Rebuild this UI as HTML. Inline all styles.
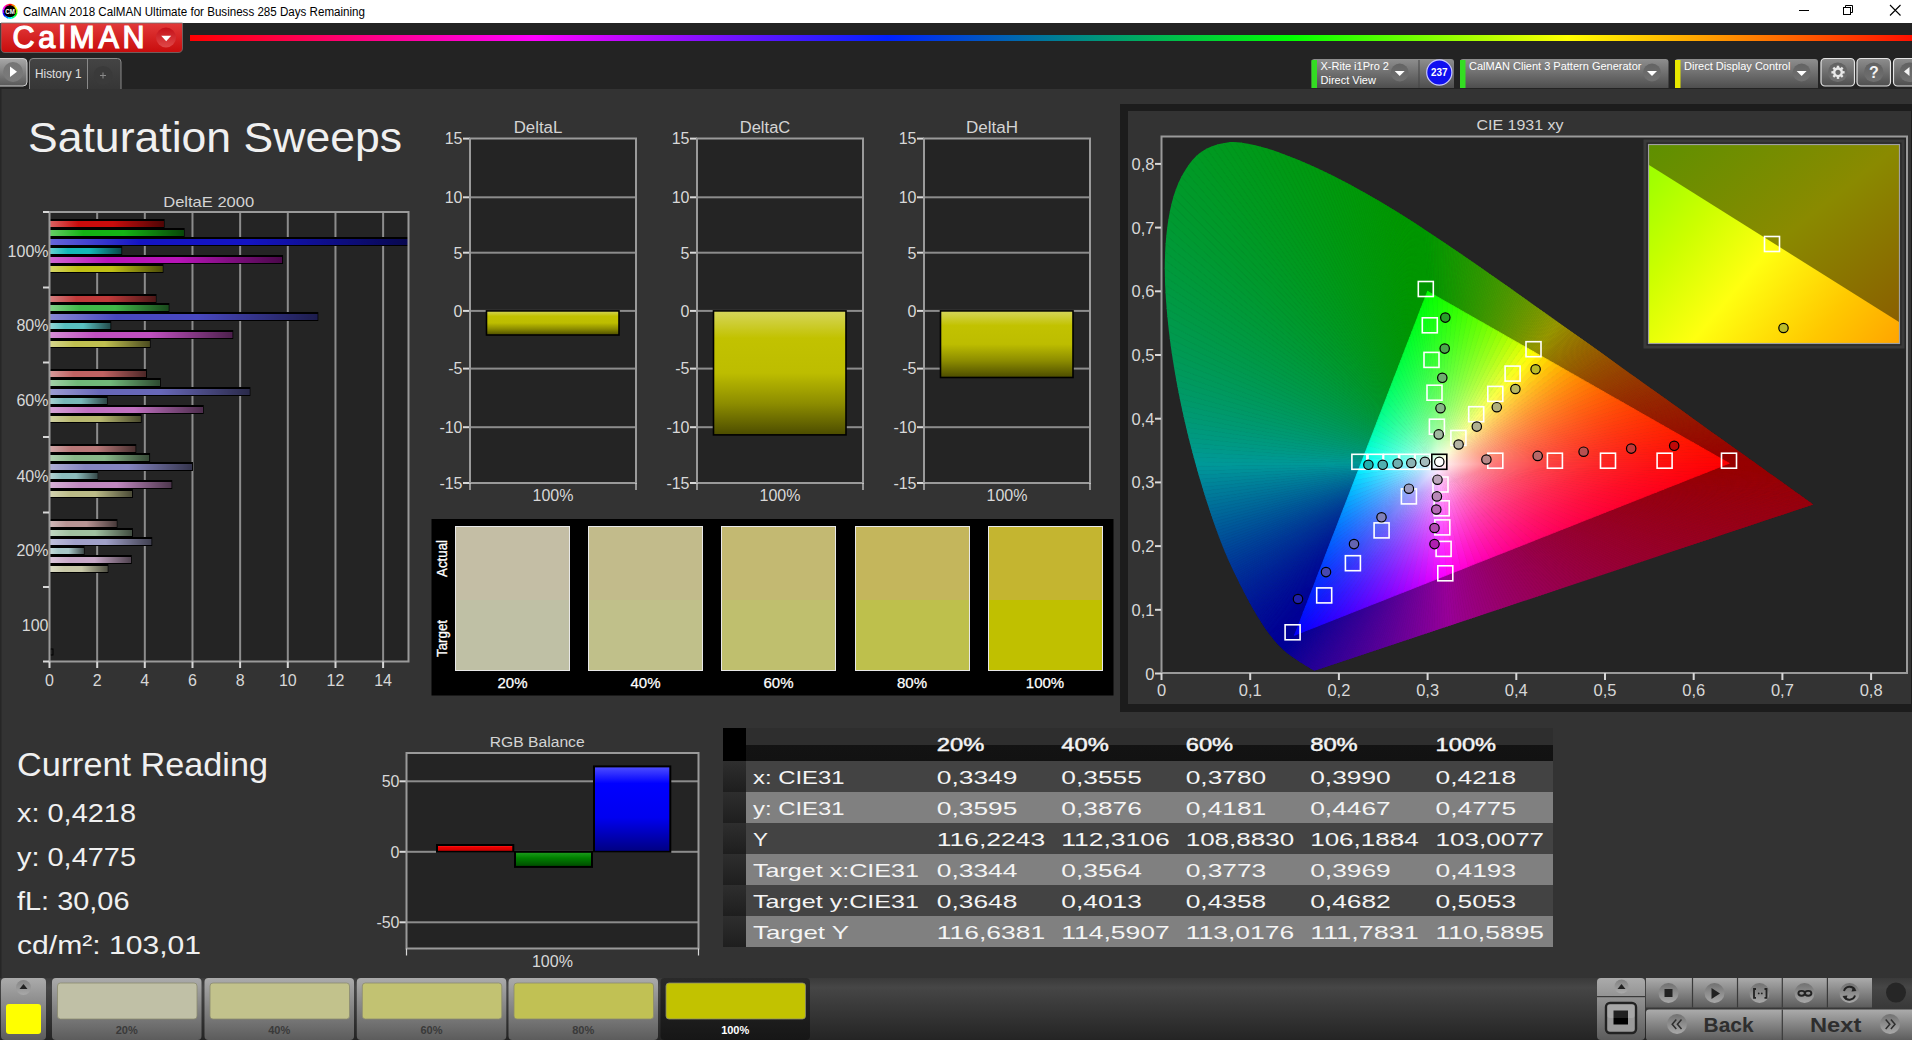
<!DOCTYPE html>
<html><head><meta charset="utf-8"><title>CalMAN</title>
<style>html,body{margin:0;padding:0;background:#333;overflow:hidden;width:1912px;height:1040px}
svg{display:block;font-family:"Liberation Sans",sans-serif}</style></head>
<body><svg width="1912" height="1040" viewBox="0 0 1912 1040">
<rect x="0" y="0" width="1912" height="23" fill="#ffffff"/>
<defs><linearGradient id="rb" x1="0" y1="0" x2="1" y2="0">
<stop offset="0" stop-color="#ff0000"/><stop offset="0.2" stop-color="#ff00ff"/><stop offset="0.405" stop-color="#0020ff"/>
<stop offset="0.64" stop-color="#00ff00"/><stop offset="0.80" stop-color="#ffff00"/><stop offset="1" stop-color="#ff1000"/></linearGradient>
<linearGradient id="calbtn" x1="0" y1="0" x2="0" y2="1"><stop offset="0" stop-color="#e23a3a"/><stop offset="1" stop-color="#c80c0c"/></linearGradient>
<linearGradient id="calcirc" x1="0" y1="0" x2="0" y2="1"><stop offset="0" stop-color="#c41018"/><stop offset="1" stop-color="#e04848"/></linearGradient>
<linearGradient id="btngray" x1="0" y1="0" x2="0" y2="1"><stop offset="0" stop-color="#a8a8a8"/><stop offset="1" stop-color="#585858"/></linearGradient>
<linearGradient id="circgray" x1="0" y1="0" x2="0" y2="1"><stop offset="0" stop-color="#5a5a5a"/><stop offset="1" stop-color="#8a8a8a"/></linearGradient>
<linearGradient id="tabg" x1="0" y1="0" x2="0" y2="1"><stop offset="0" stop-color="#444"/><stop offset="1" stop-color="#363636"/></linearGradient>
<linearGradient id="devg" x1="0" y1="0" x2="0" y2="1"><stop offset="0" stop-color="#8e8e8e"/><stop offset="1" stop-color="#4e4e4e"/></linearGradient>
<linearGradient id="devcirc" x1="0" y1="0" x2="0" y2="1"><stop offset="0" stop-color="#555"/><stop offset="1" stop-color="#7a7a7a"/></linearGradient>
<linearGradient id="iconring" x1="0" y1="0" x2="1" y2="1"><stop offset="0" stop-color="#00c000"/><stop offset="0.5" stop-color="#ff00ff"/><stop offset="1" stop-color="#00a0ff"/></linearGradient>
</defs>
<path d="M10 11.3 L8.03 3.96 A7.6 7.6 0 0 1 12.09 3.99 Z" fill="#ff0000"/><path d="M10 11.3 L11.97 3.96 A7.6 7.6 0 0 1 15.47 6.02 Z" fill="#ff8000"/><path d="M10 11.3 L15.37 5.93 A7.6 7.6 0 0 1 17.37 9.46 Z" fill="#ffff00"/><path d="M10 11.3 L17.34 9.33 A7.6 7.6 0 0 1 17.31 13.39 Z" fill="#80ff00"/><path d="M10 11.3 L17.34 13.27 A7.6 7.6 0 0 1 15.28 16.77 Z" fill="#00ff00"/><path d="M10 11.3 L15.37 16.67 A7.6 7.6 0 0 1 11.84 18.67 Z" fill="#00ff80"/><path d="M10 11.3 L11.97 18.64 A7.6 7.6 0 0 1 7.91 18.61 Z" fill="#00ffff"/><path d="M10 11.3 L8.03 18.64 A7.6 7.6 0 0 1 4.53 16.58 Z" fill="#0080ff"/><path d="M10 11.3 L4.63 16.67 A7.6 7.6 0 0 1 2.63 13.14 Z" fill="#0000ff"/><path d="M10 11.3 L2.66 13.27 A7.6 7.6 0 0 1 2.69 9.21 Z" fill="#8000ff"/><path d="M10 11.3 L2.66 9.33 A7.6 7.6 0 0 1 4.72 5.83 Z" fill="#ff00ff"/><path d="M10 11.3 L4.63 5.93 A7.6 7.6 0 0 1 8.16 3.93 Z" fill="#ff0080"/><circle cx="10" cy="11.3" r="6" fill="#000"/>
<text x="10" y="13.8" font-size="7" font-weight="bold" fill="#fff" text-anchor="middle" textLength="9.5" lengthAdjust="spacingAndGlyphs">CM</text>
<text x="23" y="15.6" font-size="12" fill="#000" textLength="342" lengthAdjust="spacingAndGlyphs">CalMAN 2018 CalMAN Ultimate for Business 285 Days Remaining</text>
<rect x="1799" y="10" width="10" height="1" fill="#000"/>
<rect x="1843.5" y="7.5" width="7" height="7" fill="none" stroke="#000" stroke-width="1"/>
<path d="M1845.5 7.5 V5.5 H1852.5 V12.5 H1850.5" fill="none" stroke="#000" stroke-width="1"/>
<path d="M1890 5 L1900.5 15.5 M1900.5 5 L1890 15.5" stroke="#000" stroke-width="1.1"/>
<rect x="0" y="23" width="1912" height="66" fill="#232323"/>
<path d="M1 23 H182.5 V48 Q182.5 52.5 178 52.5 H5 Q1 52.5 1 48 Z" fill="url(#calbtn)" stroke="#707070" stroke-width="0.8"/>
<text x="12.5" y="48" font-size="30.5" fill="#fff" stroke="#fff" stroke-width="1.2" textLength="132" lengthAdjust="spacing">CalMAN</text>
<ellipse cx="166" cy="37.5" rx="10" ry="10" fill="url(#calcirc)"/>
<path d="M161.2 35.8 H171.2 L166.2 41.2 Z" fill="#fff"/>
<rect x="190" y="35" width="1722" height="6" fill="url(#rb)"/>
<rect x="-4" y="58.5" width="31" height="27.5" rx="4" fill="url(#btngray)" stroke="#d0d0d0" stroke-width="1"/>
<circle cx="13" cy="72" r="10" fill="url(#circgray)" opacity="0.6"/>
<path d="M10 66.5 L17 71.8 L10 77 Z" fill="#fff"/>
<path d="M29.5 89 V62 Q29.5 58.5 33 58.5 H117.5 Q121 58.5 121 62 V89" fill="url(#tabg)" stroke="#8a8a8a" stroke-width="1"/>
<rect x="87" y="59" width="1" height="30" fill="#8a8a8a"/>
<text x="35" y="78" font-size="12" fill="#e0e0e0" textLength="46.6" lengthAdjust="spacingAndGlyphs">History 1</text>
<circle cx="103" cy="75.5" r="9.5" fill="#3a3a3a"/>
<path d="M100 75.5 H106 M103 72.5 V78.5" stroke="#8a8a8a" stroke-width="1"/>
<path d="M1311.5 88 V62 Q1311.5 59 1314.5 59 H1451 Q1454 59 1454 62 V88 Z" fill="url(#devg)"/><rect x="1311.5" y="60" width="5.5" height="28" fill="#33dd22"/><text x="1320.5" y="70" font-size="11" fill="#fff">X-Rite i1Pro 2</text><text x="1320.5" y="84" font-size="11" fill="#fff">Direct View</text><circle cx="1399.7" cy="72.5" r="9" fill="url(#devcirc)" opacity="0.7"/><path d="M1394.7 71 H1404.7 L1399.7 76 Z" fill="#fff"/>
<rect x="1418.5" y="60" width="1" height="28" fill="#444"/>
<circle cx="1439.3" cy="72.5" r="12.6" fill="#1010f0" stroke="#c8c8ff" stroke-width="1.2"/>
<text x="1439.3" y="76" font-size="10" font-weight="bold" fill="#fff" text-anchor="middle" textLength="16.5" lengthAdjust="spacingAndGlyphs">237</text>
<path d="M1460 88 V62 Q1460 59 1463 59 H1665.5 Q1668.5 59 1668.5 62 V88 Z" fill="url(#devg)"/><rect x="1460" y="60" width="5.5" height="28" fill="#33dd22"/><text x="1469" y="70" font-size="11" fill="#fff">CalMAN Client 3 Pattern Generator</text><circle cx="1652" cy="72.5" r="9" fill="url(#devcirc)" opacity="0.7"/><path d="M1647 71 H1657 L1652 76 Z" fill="#fff"/>
<path d="M1675 88 V62 Q1675 59 1678 59 H1815 Q1818 59 1818 62 V88 Z" fill="url(#devg)"/><rect x="1675" y="60" width="5.5" height="28" fill="#e8e800"/><text x="1684" y="70" font-size="11" fill="#fff">Direct Display Control</text><circle cx="1801.6" cy="72.5" r="9" fill="url(#devcirc)" opacity="0.7"/><path d="M1796.6 71 H1806.6 L1801.6 76 Z" fill="#fff"/>
<rect x="1821" y="58.5" width="33.5" height="27.5" rx="4" fill="url(#devg)" stroke="#e4e4e4" stroke-width="1.2"/>
<circle cx="1837.75" cy="72.3" r="9.8" fill="url(#devcirc)" opacity="0.75"/>
<rect x="1857" y="58.5" width="33.5" height="27.5" rx="4" fill="url(#devg)" stroke="#e4e4e4" stroke-width="1.2"/>
<circle cx="1873.75" cy="72.3" r="9.8" fill="url(#devcirc)" opacity="0.75"/>
<rect x="1893.5" y="58.5" width="31.5" height="27.5" rx="4" fill="url(#devg)" stroke="#e4e4e4" stroke-width="1.2"/>
<circle cx="1909.25" cy="72.3" r="9.8" fill="url(#devcirc)" opacity="0.75"/>
<g transform="translate(1838,72.3)"><circle r="3.8" fill="none" stroke="#e8e8e8" stroke-width="2.4"/><rect x="-1.2" y="-6.6" width="2.4" height="2.4" fill="#e8e8e8" transform="rotate(0)"/><rect x="-1.2" y="-6.6" width="2.4" height="2.4" fill="#e8e8e8" transform="rotate(45)"/><rect x="-1.2" y="-6.6" width="2.4" height="2.4" fill="#e8e8e8" transform="rotate(90)"/><rect x="-1.2" y="-6.6" width="2.4" height="2.4" fill="#e8e8e8" transform="rotate(135)"/><rect x="-1.2" y="-6.6" width="2.4" height="2.4" fill="#e8e8e8" transform="rotate(180)"/><rect x="-1.2" y="-6.6" width="2.4" height="2.4" fill="#e8e8e8" transform="rotate(225)"/><rect x="-1.2" y="-6.6" width="2.4" height="2.4" fill="#e8e8e8" transform="rotate(270)"/><rect x="-1.2" y="-6.6" width="2.4" height="2.4" fill="#e8e8e8" transform="rotate(315)"/></g>
<text x="1874" y="78.3" font-size="16" font-weight="bold" fill="#f4f4f4" text-anchor="middle">?</text>
<path d="M1909.5 67 L1904 71.5 L1909.5 76 Z" fill="#f4f4f4"/>
<rect x="0" y="89" width="1912" height="889" fill="#333333"/>
<rect x="0" y="89" width="1.5" height="889" fill="#262626"/>
<text x="28" y="151.8" font-size="43" fill="#f0f0f0" textLength="374" lengthAdjust="spacingAndGlyphs">Saturation Sweeps</text>
<text x="208.7" y="206.8" font-size="15" fill="#d4d4d4" text-anchor="middle" textLength="91" lengthAdjust="spacingAndGlyphs">DeltaE 2000</text>
<rect x="49.5" y="212" width="359.0" height="449.5" fill="#242424"/>
<rect x="96.16" y="212" width="2" height="449.5" fill="#8c8c8c"/>
<rect x="143.82" y="212" width="2" height="449.5" fill="#8c8c8c"/>
<rect x="191.48" y="212" width="2" height="449.5" fill="#8c8c8c"/>
<rect x="239.14" y="212" width="2" height="449.5" fill="#8c8c8c"/>
<rect x="286.79999999999995" y="212" width="2" height="449.5" fill="#8c8c8c"/>
<rect x="334.46" y="212" width="2" height="449.5" fill="#8c8c8c"/>
<rect x="382.12" y="212" width="2" height="449.5" fill="#8c8c8c"/>
<rect x="50.0" y="219" width="114.59890000000001" height="9" fill="#000"/>
<rect x="50.0" y="221" width="113.59890000000001" height="6" fill="#c80c0c"/>
<rect x="50.0" y="221" width="113.59890000000001" height="6" fill="url(#de00)"/>
<rect x="50.0" y="228" width="134.6161" height="9" fill="#000"/>
<rect x="50.0" y="230" width="133.6161" height="6" fill="#14b414"/>
<rect x="50.0" y="230" width="133.6161" height="6" fill="url(#de01)"/>
<rect x="50.0" y="237" width="359.0" height="9" fill="#000"/>
<rect x="50.0" y="239" width="358.0" height="6" fill="#1414c4"/>
<rect x="50.0" y="239" width="358.0" height="6" fill="url(#de02)"/>
<rect x="50.0" y="246" width="72.18149999999999" height="9" fill="#000"/>
<rect x="50.0" y="248" width="71.18149999999999" height="6" fill="#14b8b8"/>
<rect x="50.0" y="248" width="71.18149999999999" height="6" fill="url(#de03)"/>
<rect x="50.0" y="255" width="233.034" height="9" fill="#000"/>
<rect x="50.0" y="257" width="232.034" height="6" fill="#b814b8"/>
<rect x="50.0" y="257" width="232.034" height="6" fill="url(#de04)"/>
<rect x="50.0" y="264" width="113.4074" height="9" fill="#000"/>
<rect x="50.0" y="266" width="112.4074" height="6" fill="#c0c014"/>
<rect x="50.0" y="266" width="112.4074" height="6" fill="url(#de05)"/>
<rect x="50.0" y="294" width="106.4967" height="9" fill="#000"/>
<rect x="50.0" y="296" width="105.4967" height="6" fill="#c03a3a"/>
<rect x="50.0" y="296" width="105.4967" height="6" fill="url(#de10)"/>
<rect x="50.0" y="303" width="119.36489999999998" height="9" fill="#000"/>
<rect x="50.0" y="305" width="118.36489999999998" height="6" fill="#40b848"/>
<rect x="50.0" y="305" width="118.36489999999998" height="6" fill="url(#de11)"/>
<rect x="50.0" y="312" width="268.3024" height="9" fill="#000"/>
<rect x="50.0" y="314" width="267.3024" height="6" fill="#4848c0"/>
<rect x="50.0" y="314" width="267.3024" height="6" fill="url(#de12)"/>
<rect x="50.0" y="321" width="61.21969999999999" height="9" fill="#000"/>
<rect x="50.0" y="323" width="60.21969999999999" height="6" fill="#58c0c0"/>
<rect x="50.0" y="323" width="60.21969999999999" height="6" fill="url(#de13)"/>
<rect x="50.0" y="330" width="183.2293" height="9" fill="#000"/>
<rect x="50.0" y="332" width="182.2293" height="6" fill="#c050c0"/>
<rect x="50.0" y="332" width="182.2293" height="6" fill="url(#de14)"/>
<rect x="50.0" y="339" width="100.5392" height="9" fill="#000"/>
<rect x="50.0" y="341" width="99.5392" height="6" fill="#c0c050"/>
<rect x="50.0" y="341" width="99.5392" height="6" fill="url(#de15)"/>
<rect x="50.0" y="369" width="96.9647" height="9" fill="#000"/>
<rect x="50.0" y="371" width="95.9647" height="6" fill="#c06262"/>
<rect x="50.0" y="371" width="95.9647" height="6" fill="url(#de20)"/>
<rect x="50.0" y="378" width="110.78609999999998" height="9" fill="#000"/>
<rect x="50.0" y="380" width="109.78609999999998" height="6" fill="#70b878"/>
<rect x="50.0" y="380" width="109.78609999999998" height="6" fill="url(#de21)"/>
<rect x="50.0" y="387" width="200.38689999999997" height="9" fill="#000"/>
<rect x="50.0" y="389" width="199.38689999999997" height="6" fill="#6868b8"/>
<rect x="50.0" y="389" width="199.38689999999997" height="6" fill="url(#de22)"/>
<rect x="50.0" y="396" width="57.64519999999999" height="9" fill="#000"/>
<rect x="50.0" y="398" width="56.64519999999999" height="6" fill="#78b8b8"/>
<rect x="50.0" y="398" width="56.64519999999999" height="6" fill="url(#de23)"/>
<rect x="50.0" y="405" width="153.68009999999998" height="9" fill="#000"/>
<rect x="50.0" y="407" width="152.68009999999998" height="6" fill="#c070c0"/>
<rect x="50.0" y="407" width="152.68009999999998" height="6" fill="url(#de24)"/>
<rect x="50.0" y="414" width="91.48379999999997" height="9" fill="#000"/>
<rect x="50.0" y="416" width="90.48379999999997" height="6" fill="#b8b870"/>
<rect x="50.0" y="416" width="90.48379999999997" height="6" fill="url(#de25)"/>
<rect x="50.0" y="444" width="86.24119999999999" height="9" fill="#000"/>
<rect x="50.0" y="446" width="85.24119999999999" height="6" fill="#b87878"/>
<rect x="50.0" y="446" width="85.24119999999999" height="6" fill="url(#de30)"/>
<rect x="50.0" y="453" width="100.06259999999997" height="9" fill="#000"/>
<rect x="50.0" y="455" width="99.06259999999997" height="6" fill="#88b888"/>
<rect x="50.0" y="455" width="99.06259999999997" height="6" fill="url(#de31)"/>
<rect x="50.0" y="462" width="142.95659999999998" height="9" fill="#000"/>
<rect x="50.0" y="464" width="141.95659999999998" height="6" fill="#8484c0"/>
<rect x="50.0" y="464" width="141.95659999999998" height="6" fill="url(#de32)"/>
<rect x="50.0" y="471" width="48.35149999999999" height="9" fill="#000"/>
<rect x="50.0" y="473" width="47.35149999999999" height="6" fill="#8cbcbc"/>
<rect x="50.0" y="473" width="47.35149999999999" height="6" fill="url(#de33)"/>
<rect x="50.0" y="480" width="122.2245" height="9" fill="#000"/>
<rect x="50.0" y="482" width="121.2245" height="6" fill="#c088c0"/>
<rect x="50.0" y="482" width="121.2245" height="6" fill="url(#de34)"/>
<rect x="50.0" y="489" width="82.905" height="9" fill="#000"/>
<rect x="50.0" y="491" width="81.905" height="6" fill="#bcbc88"/>
<rect x="50.0" y="491" width="81.905" height="6" fill="url(#de35)"/>
<rect x="50.0" y="519" width="67.4155" height="9" fill="#000"/>
<rect x="50.0" y="521" width="66.4155" height="6" fill="#b89494"/>
<rect x="50.0" y="521" width="66.4155" height="6" fill="url(#de40)"/>
<rect x="50.0" y="528" width="82.905" height="9" fill="#000"/>
<rect x="50.0" y="530" width="81.905" height="6" fill="#a0c0a0"/>
<rect x="50.0" y="530" width="81.905" height="6" fill="url(#de41)"/>
<rect x="50.0" y="537" width="102.20729999999998" height="9" fill="#000"/>
<rect x="50.0" y="539" width="101.20729999999998" height="6" fill="#a0a0c8"/>
<rect x="50.0" y="539" width="101.20729999999998" height="6" fill="url(#de42)"/>
<rect x="50.0" y="546" width="34.530100000000004" height="9" fill="#000"/>
<rect x="50.0" y="548" width="33.530100000000004" height="6" fill="#a8c8c8"/>
<rect x="50.0" y="548" width="33.530100000000004" height="6" fill="url(#de43)"/>
<rect x="50.0" y="555" width="81.71350000000001" height="9" fill="#000"/>
<rect x="50.0" y="557" width="80.71350000000001" height="6" fill="#c8a8c8"/>
<rect x="50.0" y="557" width="80.71350000000001" height="6" fill="url(#de44)"/>
<rect x="50.0" y="564" width="58.3601" height="9" fill="#000"/>
<rect x="50.0" y="566" width="57.3601" height="6" fill="#c8c8a8"/>
<rect x="50.0" y="566" width="57.3601" height="6" fill="url(#de45)"/>
<defs><linearGradient id="de00" x1="0" y1="0" x2="1" y2="0"><stop offset="0" stop-color="#fff" stop-opacity="0.35"/><stop offset="0.25" stop-color="#fff" stop-opacity="0"/><stop offset="0.55" stop-color="#000" stop-opacity="0"/><stop offset="1" stop-color="#000" stop-opacity="0.6"/></linearGradient><linearGradient id="de01" x1="0" y1="0" x2="1" y2="0"><stop offset="0" stop-color="#fff" stop-opacity="0.35"/><stop offset="0.25" stop-color="#fff" stop-opacity="0"/><stop offset="0.55" stop-color="#000" stop-opacity="0"/><stop offset="1" stop-color="#000" stop-opacity="0.6"/></linearGradient><linearGradient id="de02" x1="0" y1="0" x2="1" y2="0"><stop offset="0" stop-color="#fff" stop-opacity="0.35"/><stop offset="0.25" stop-color="#fff" stop-opacity="0"/><stop offset="0.55" stop-color="#000" stop-opacity="0"/><stop offset="1" stop-color="#000" stop-opacity="0.6"/></linearGradient><linearGradient id="de03" x1="0" y1="0" x2="1" y2="0"><stop offset="0" stop-color="#fff" stop-opacity="0.35"/><stop offset="0.25" stop-color="#fff" stop-opacity="0"/><stop offset="0.55" stop-color="#000" stop-opacity="0"/><stop offset="1" stop-color="#000" stop-opacity="0.6"/></linearGradient><linearGradient id="de04" x1="0" y1="0" x2="1" y2="0"><stop offset="0" stop-color="#fff" stop-opacity="0.35"/><stop offset="0.25" stop-color="#fff" stop-opacity="0"/><stop offset="0.55" stop-color="#000" stop-opacity="0"/><stop offset="1" stop-color="#000" stop-opacity="0.6"/></linearGradient><linearGradient id="de05" x1="0" y1="0" x2="1" y2="0"><stop offset="0" stop-color="#fff" stop-opacity="0.35"/><stop offset="0.25" stop-color="#fff" stop-opacity="0"/><stop offset="0.55" stop-color="#000" stop-opacity="0"/><stop offset="1" stop-color="#000" stop-opacity="0.6"/></linearGradient><linearGradient id="de10" x1="0" y1="0" x2="1" y2="0"><stop offset="0" stop-color="#fff" stop-opacity="0.35"/><stop offset="0.25" stop-color="#fff" stop-opacity="0"/><stop offset="0.55" stop-color="#000" stop-opacity="0"/><stop offset="1" stop-color="#000" stop-opacity="0.6"/></linearGradient><linearGradient id="de11" x1="0" y1="0" x2="1" y2="0"><stop offset="0" stop-color="#fff" stop-opacity="0.35"/><stop offset="0.25" stop-color="#fff" stop-opacity="0"/><stop offset="0.55" stop-color="#000" stop-opacity="0"/><stop offset="1" stop-color="#000" stop-opacity="0.6"/></linearGradient><linearGradient id="de12" x1="0" y1="0" x2="1" y2="0"><stop offset="0" stop-color="#fff" stop-opacity="0.35"/><stop offset="0.25" stop-color="#fff" stop-opacity="0"/><stop offset="0.55" stop-color="#000" stop-opacity="0"/><stop offset="1" stop-color="#000" stop-opacity="0.6"/></linearGradient><linearGradient id="de13" x1="0" y1="0" x2="1" y2="0"><stop offset="0" stop-color="#fff" stop-opacity="0.35"/><stop offset="0.25" stop-color="#fff" stop-opacity="0"/><stop offset="0.55" stop-color="#000" stop-opacity="0"/><stop offset="1" stop-color="#000" stop-opacity="0.6"/></linearGradient><linearGradient id="de14" x1="0" y1="0" x2="1" y2="0"><stop offset="0" stop-color="#fff" stop-opacity="0.35"/><stop offset="0.25" stop-color="#fff" stop-opacity="0"/><stop offset="0.55" stop-color="#000" stop-opacity="0"/><stop offset="1" stop-color="#000" stop-opacity="0.6"/></linearGradient><linearGradient id="de15" x1="0" y1="0" x2="1" y2="0"><stop offset="0" stop-color="#fff" stop-opacity="0.35"/><stop offset="0.25" stop-color="#fff" stop-opacity="0"/><stop offset="0.55" stop-color="#000" stop-opacity="0"/><stop offset="1" stop-color="#000" stop-opacity="0.6"/></linearGradient><linearGradient id="de20" x1="0" y1="0" x2="1" y2="0"><stop offset="0" stop-color="#fff" stop-opacity="0.35"/><stop offset="0.25" stop-color="#fff" stop-opacity="0"/><stop offset="0.55" stop-color="#000" stop-opacity="0"/><stop offset="1" stop-color="#000" stop-opacity="0.6"/></linearGradient><linearGradient id="de21" x1="0" y1="0" x2="1" y2="0"><stop offset="0" stop-color="#fff" stop-opacity="0.35"/><stop offset="0.25" stop-color="#fff" stop-opacity="0"/><stop offset="0.55" stop-color="#000" stop-opacity="0"/><stop offset="1" stop-color="#000" stop-opacity="0.6"/></linearGradient><linearGradient id="de22" x1="0" y1="0" x2="1" y2="0"><stop offset="0" stop-color="#fff" stop-opacity="0.35"/><stop offset="0.25" stop-color="#fff" stop-opacity="0"/><stop offset="0.55" stop-color="#000" stop-opacity="0"/><stop offset="1" stop-color="#000" stop-opacity="0.6"/></linearGradient><linearGradient id="de23" x1="0" y1="0" x2="1" y2="0"><stop offset="0" stop-color="#fff" stop-opacity="0.35"/><stop offset="0.25" stop-color="#fff" stop-opacity="0"/><stop offset="0.55" stop-color="#000" stop-opacity="0"/><stop offset="1" stop-color="#000" stop-opacity="0.6"/></linearGradient><linearGradient id="de24" x1="0" y1="0" x2="1" y2="0"><stop offset="0" stop-color="#fff" stop-opacity="0.35"/><stop offset="0.25" stop-color="#fff" stop-opacity="0"/><stop offset="0.55" stop-color="#000" stop-opacity="0"/><stop offset="1" stop-color="#000" stop-opacity="0.6"/></linearGradient><linearGradient id="de25" x1="0" y1="0" x2="1" y2="0"><stop offset="0" stop-color="#fff" stop-opacity="0.35"/><stop offset="0.25" stop-color="#fff" stop-opacity="0"/><stop offset="0.55" stop-color="#000" stop-opacity="0"/><stop offset="1" stop-color="#000" stop-opacity="0.6"/></linearGradient><linearGradient id="de30" x1="0" y1="0" x2="1" y2="0"><stop offset="0" stop-color="#fff" stop-opacity="0.35"/><stop offset="0.25" stop-color="#fff" stop-opacity="0"/><stop offset="0.55" stop-color="#000" stop-opacity="0"/><stop offset="1" stop-color="#000" stop-opacity="0.6"/></linearGradient><linearGradient id="de31" x1="0" y1="0" x2="1" y2="0"><stop offset="0" stop-color="#fff" stop-opacity="0.35"/><stop offset="0.25" stop-color="#fff" stop-opacity="0"/><stop offset="0.55" stop-color="#000" stop-opacity="0"/><stop offset="1" stop-color="#000" stop-opacity="0.6"/></linearGradient><linearGradient id="de32" x1="0" y1="0" x2="1" y2="0"><stop offset="0" stop-color="#fff" stop-opacity="0.35"/><stop offset="0.25" stop-color="#fff" stop-opacity="0"/><stop offset="0.55" stop-color="#000" stop-opacity="0"/><stop offset="1" stop-color="#000" stop-opacity="0.6"/></linearGradient><linearGradient id="de33" x1="0" y1="0" x2="1" y2="0"><stop offset="0" stop-color="#fff" stop-opacity="0.35"/><stop offset="0.25" stop-color="#fff" stop-opacity="0"/><stop offset="0.55" stop-color="#000" stop-opacity="0"/><stop offset="1" stop-color="#000" stop-opacity="0.6"/></linearGradient><linearGradient id="de34" x1="0" y1="0" x2="1" y2="0"><stop offset="0" stop-color="#fff" stop-opacity="0.35"/><stop offset="0.25" stop-color="#fff" stop-opacity="0"/><stop offset="0.55" stop-color="#000" stop-opacity="0"/><stop offset="1" stop-color="#000" stop-opacity="0.6"/></linearGradient><linearGradient id="de35" x1="0" y1="0" x2="1" y2="0"><stop offset="0" stop-color="#fff" stop-opacity="0.35"/><stop offset="0.25" stop-color="#fff" stop-opacity="0"/><stop offset="0.55" stop-color="#000" stop-opacity="0"/><stop offset="1" stop-color="#000" stop-opacity="0.6"/></linearGradient><linearGradient id="de40" x1="0" y1="0" x2="1" y2="0"><stop offset="0" stop-color="#fff" stop-opacity="0.35"/><stop offset="0.25" stop-color="#fff" stop-opacity="0"/><stop offset="0.55" stop-color="#000" stop-opacity="0"/><stop offset="1" stop-color="#000" stop-opacity="0.6"/></linearGradient><linearGradient id="de41" x1="0" y1="0" x2="1" y2="0"><stop offset="0" stop-color="#fff" stop-opacity="0.35"/><stop offset="0.25" stop-color="#fff" stop-opacity="0"/><stop offset="0.55" stop-color="#000" stop-opacity="0"/><stop offset="1" stop-color="#000" stop-opacity="0.6"/></linearGradient><linearGradient id="de42" x1="0" y1="0" x2="1" y2="0"><stop offset="0" stop-color="#fff" stop-opacity="0.35"/><stop offset="0.25" stop-color="#fff" stop-opacity="0"/><stop offset="0.55" stop-color="#000" stop-opacity="0"/><stop offset="1" stop-color="#000" stop-opacity="0.6"/></linearGradient><linearGradient id="de43" x1="0" y1="0" x2="1" y2="0"><stop offset="0" stop-color="#fff" stop-opacity="0.35"/><stop offset="0.25" stop-color="#fff" stop-opacity="0"/><stop offset="0.55" stop-color="#000" stop-opacity="0"/><stop offset="1" stop-color="#000" stop-opacity="0.6"/></linearGradient><linearGradient id="de44" x1="0" y1="0" x2="1" y2="0"><stop offset="0" stop-color="#fff" stop-opacity="0.35"/><stop offset="0.25" stop-color="#fff" stop-opacity="0"/><stop offset="0.55" stop-color="#000" stop-opacity="0"/><stop offset="1" stop-color="#000" stop-opacity="0.6"/></linearGradient><linearGradient id="de45" x1="0" y1="0" x2="1" y2="0"><stop offset="0" stop-color="#fff" stop-opacity="0.35"/><stop offset="0.25" stop-color="#fff" stop-opacity="0"/><stop offset="0.55" stop-color="#000" stop-opacity="0"/><stop offset="1" stop-color="#000" stop-opacity="0.6"/></linearGradient></defs>
<rect x="50" y="649" width="3" height="6" fill="none" stroke="#000" stroke-width="1"/>
<path d="M49.5 661.5 V212 H408.5 V661.5 Z" fill="none" stroke="#9a9a9a" stroke-width="2"/>
<rect x="43" y="211" width="6" height="2" fill="#d8d8d8"/>
<rect x="43" y="286.5" width="6" height="2" fill="#d8d8d8"/>
<rect x="43" y="361.5" width="6" height="2" fill="#d8d8d8"/>
<rect x="43" y="436" width="6" height="2" fill="#d8d8d8"/>
<rect x="43" y="511.5" width="6" height="2" fill="#d8d8d8"/>
<rect x="43" y="586" width="6" height="2" fill="#d8d8d8"/>
<rect x="43" y="660.5" width="6" height="2" fill="#d8d8d8"/>
<rect x="48.5" y="661.5" width="2" height="6.5" fill="#d8d8d8"/>
<rect x="96.2" y="661.5" width="2" height="6.5" fill="#d8d8d8"/>
<rect x="143.8" y="661.5" width="2" height="6.5" fill="#d8d8d8"/>
<rect x="191.5" y="661.5" width="2" height="6.5" fill="#d8d8d8"/>
<rect x="239.1" y="661.5" width="2" height="6.5" fill="#d8d8d8"/>
<rect x="286.8" y="661.5" width="2" height="6.5" fill="#d8d8d8"/>
<rect x="334.5" y="661.5" width="2" height="6.5" fill="#d8d8d8"/>
<rect x="382.1" y="661.5" width="2" height="6.5" fill="#d8d8d8"/>
<text x="48.5" y="257" font-size="16" fill="#d8d8d8" text-anchor="end">100%</text>
<text x="48.5" y="331" font-size="16" fill="#d8d8d8" text-anchor="end">80%</text>
<text x="48.5" y="406" font-size="16" fill="#d8d8d8" text-anchor="end">60%</text>
<text x="48.5" y="482" font-size="16" fill="#d8d8d8" text-anchor="end">40%</text>
<text x="48.5" y="556" font-size="16" fill="#d8d8d8" text-anchor="end">20%</text>
<text x="48.5" y="631" font-size="16" fill="#d8d8d8" text-anchor="end">100</text>
<text x="49.5" y="686" font-size="16" fill="#d8d8d8" text-anchor="middle">0</text>
<text x="97.16" y="686" font-size="16" fill="#d8d8d8" text-anchor="middle">2</text>
<text x="144.82" y="686" font-size="16" fill="#d8d8d8" text-anchor="middle">4</text>
<text x="192.48" y="686" font-size="16" fill="#d8d8d8" text-anchor="middle">6</text>
<text x="240.14" y="686" font-size="16" fill="#d8d8d8" text-anchor="middle">8</text>
<text x="287.79999999999995" y="686" font-size="16" fill="#d8d8d8" text-anchor="middle">10</text>
<text x="335.46" y="686" font-size="16" fill="#d8d8d8" text-anchor="middle">12</text>
<text x="383.12" y="686" font-size="16" fill="#d8d8d8" text-anchor="middle">14</text>
<defs><linearGradient id="ybar" x1="0" y1="0" x2="0" y2="1">
<stop offset="0" stop-color="#d6d65c"/><stop offset="0.22" stop-color="#c2c200"/><stop offset="0.5" stop-color="#bdbd00"/><stop offset="0.75" stop-color="#8c8c00"/><stop offset="1" stop-color="#4c4c00"/></linearGradient>
<linearGradient id="ybarS" x1="0" y1="0" x2="0" y2="1">
<stop offset="0" stop-color="#d0d040"/><stop offset="0.3" stop-color="#c4c400"/><stop offset="0.6" stop-color="#c0c000"/><stop offset="1" stop-color="#505000"/></linearGradient></defs>
<text x="513.75" y="133" font-size="16" fill="#d4d4d4" textLength="48.5" lengthAdjust="spacingAndGlyphs">DeltaL</text>
<rect x="470" y="138.6" width="166" height="344.4" fill="#242424"/>
<rect x="470" y="426.2" width="166" height="2" fill="#8c8c8c"/>
<rect x="470" y="367.6" width="166" height="2" fill="#8c8c8c"/>
<rect x="470" y="309.9" width="166" height="2" fill="#8c8c8c"/>
<rect x="470" y="251.7" width="166" height="2" fill="#8c8c8c"/>
<rect x="470" y="196.3" width="166" height="2" fill="#8c8c8c"/>
<rect x="463" y="482" width="7" height="2" fill="#d8d8d8"/>
<text x="462.5" y="488.8" font-size="16" fill="#d8d8d8" text-anchor="end">-15</text>
<rect x="463" y="426.2" width="7" height="2" fill="#d8d8d8"/>
<text x="462.5" y="433.0" font-size="16" fill="#d8d8d8" text-anchor="end">-10</text>
<rect x="463" y="367.6" width="7" height="2" fill="#d8d8d8"/>
<text x="462.5" y="374.40000000000003" font-size="16" fill="#d8d8d8" text-anchor="end">-5</text>
<rect x="463" y="309.9" width="7" height="2" fill="#d8d8d8"/>
<text x="462.5" y="316.7" font-size="16" fill="#d8d8d8" text-anchor="end">0</text>
<rect x="463" y="251.7" width="7" height="2" fill="#d8d8d8"/>
<text x="462.5" y="258.5" font-size="16" fill="#d8d8d8" text-anchor="end">5</text>
<rect x="463" y="196.3" width="7" height="2" fill="#d8d8d8"/>
<text x="462.5" y="203.10000000000002" font-size="16" fill="#d8d8d8" text-anchor="end">10</text>
<rect x="463" y="137.6" width="7" height="2" fill="#d8d8d8"/>
<text x="462.5" y="144.4" font-size="16" fill="#d8d8d8" text-anchor="end">15</text>
<rect x="486.5" y="310.9" width="132.5" height="24.108000000000004" fill="url(#ybar)" stroke="#000" stroke-width="1.6"/>
<path d="M470 483 V138.6 H636 V483 Z" fill="none" stroke="#9a9a9a" stroke-width="2"/>
<rect x="469.4" y="483" width="1.2" height="7" fill="#d8d8d8"/>
<rect x="635.4" y="483" width="1.2" height="7" fill="#d8d8d8"/>
<text x="553.0" y="501.3" font-size="16" fill="#d8d8d8" text-anchor="middle">100%</text>
<text x="739.75" y="133" font-size="16" fill="#d4d4d4" textLength="50.5" lengthAdjust="spacingAndGlyphs">DeltaC</text>
<rect x="697" y="138.6" width="166" height="344.4" fill="#242424"/>
<rect x="697" y="426.2" width="166" height="2" fill="#8c8c8c"/>
<rect x="697" y="367.6" width="166" height="2" fill="#8c8c8c"/>
<rect x="697" y="309.9" width="166" height="2" fill="#8c8c8c"/>
<rect x="697" y="251.7" width="166" height="2" fill="#8c8c8c"/>
<rect x="697" y="196.3" width="166" height="2" fill="#8c8c8c"/>
<rect x="690" y="482" width="7" height="2" fill="#d8d8d8"/>
<text x="689.5" y="488.8" font-size="16" fill="#d8d8d8" text-anchor="end">-15</text>
<rect x="690" y="426.2" width="7" height="2" fill="#d8d8d8"/>
<text x="689.5" y="433.0" font-size="16" fill="#d8d8d8" text-anchor="end">-10</text>
<rect x="690" y="367.6" width="7" height="2" fill="#d8d8d8"/>
<text x="689.5" y="374.40000000000003" font-size="16" fill="#d8d8d8" text-anchor="end">-5</text>
<rect x="690" y="309.9" width="7" height="2" fill="#d8d8d8"/>
<text x="689.5" y="316.7" font-size="16" fill="#d8d8d8" text-anchor="end">0</text>
<rect x="690" y="251.7" width="7" height="2" fill="#d8d8d8"/>
<text x="689.5" y="258.5" font-size="16" fill="#d8d8d8" text-anchor="end">5</text>
<rect x="690" y="196.3" width="7" height="2" fill="#d8d8d8"/>
<text x="689.5" y="203.10000000000002" font-size="16" fill="#d8d8d8" text-anchor="end">10</text>
<rect x="690" y="137.6" width="7" height="2" fill="#d8d8d8"/>
<text x="689.5" y="144.4" font-size="16" fill="#d8d8d8" text-anchor="end">15</text>
<rect x="713.5" y="310.9" width="132.5" height="123.98400000000004" fill="url(#ybar)" stroke="#000" stroke-width="1.6"/>
<path d="M697 483 V138.6 H863 V483 Z" fill="none" stroke="#9a9a9a" stroke-width="2"/>
<rect x="696.4" y="483" width="1.2" height="7" fill="#d8d8d8"/>
<rect x="862.4" y="483" width="1.2" height="7" fill="#d8d8d8"/>
<text x="780.0" y="501.3" font-size="16" fill="#d8d8d8" text-anchor="middle">100%</text>
<text x="966.0" y="133" font-size="16" fill="#d4d4d4" textLength="52" lengthAdjust="spacingAndGlyphs">DeltaH</text>
<rect x="924" y="138.6" width="166" height="344.4" fill="#242424"/>
<rect x="924" y="426.2" width="166" height="2" fill="#8c8c8c"/>
<rect x="924" y="367.6" width="166" height="2" fill="#8c8c8c"/>
<rect x="924" y="309.9" width="166" height="2" fill="#8c8c8c"/>
<rect x="924" y="251.7" width="166" height="2" fill="#8c8c8c"/>
<rect x="924" y="196.3" width="166" height="2" fill="#8c8c8c"/>
<rect x="917" y="482" width="7" height="2" fill="#d8d8d8"/>
<text x="916.5" y="488.8" font-size="16" fill="#d8d8d8" text-anchor="end">-15</text>
<rect x="917" y="426.2" width="7" height="2" fill="#d8d8d8"/>
<text x="916.5" y="433.0" font-size="16" fill="#d8d8d8" text-anchor="end">-10</text>
<rect x="917" y="367.6" width="7" height="2" fill="#d8d8d8"/>
<text x="916.5" y="374.40000000000003" font-size="16" fill="#d8d8d8" text-anchor="end">-5</text>
<rect x="917" y="309.9" width="7" height="2" fill="#d8d8d8"/>
<text x="916.5" y="316.7" font-size="16" fill="#d8d8d8" text-anchor="end">0</text>
<rect x="917" y="251.7" width="7" height="2" fill="#d8d8d8"/>
<text x="916.5" y="258.5" font-size="16" fill="#d8d8d8" text-anchor="end">5</text>
<rect x="917" y="196.3" width="7" height="2" fill="#d8d8d8"/>
<text x="916.5" y="203.10000000000002" font-size="16" fill="#d8d8d8" text-anchor="end">10</text>
<rect x="917" y="137.6" width="7" height="2" fill="#d8d8d8"/>
<text x="916.5" y="144.4" font-size="16" fill="#d8d8d8" text-anchor="end">15</text>
<rect x="940.5" y="310.9" width="132.5" height="66.584" fill="url(#ybar)" stroke="#000" stroke-width="1.6"/>
<path d="M924 483 V138.6 H1090 V483 Z" fill="none" stroke="#9a9a9a" stroke-width="2"/>
<rect x="923.4" y="483" width="1.2" height="7" fill="#d8d8d8"/>
<rect x="1089.4" y="483" width="1.2" height="7" fill="#d8d8d8"/>
<text x="1007.0" y="501.3" font-size="16" fill="#d8d8d8" text-anchor="middle">100%</text>
<rect x="431.5" y="519" width="682" height="176.5" fill="#000"/>
<rect x="455" y="526" width="115" height="74" fill="#c4bea5"/>
<rect x="455" y="600" width="115" height="71" fill="#bfc0a5"/>
<rect x="455.5" y="526.5" width="114" height="144" fill="none" stroke="#e8e8e8" stroke-width="1"/>
<text x="512.5" y="687.5" font-size="15" fill="#fff" text-anchor="middle" stroke="#fff" stroke-width="0.25">20%</text>
<rect x="588" y="526" width="115" height="74" fill="#c2bb8b"/>
<rect x="588" y="600" width="115" height="71" fill="#c0c08a"/>
<rect x="588.5" y="526.5" width="114" height="144" fill="none" stroke="#e8e8e8" stroke-width="1"/>
<text x="645.5" y="687.5" font-size="15" fill="#fff" text-anchor="middle" stroke="#fff" stroke-width="0.25">40%</text>
<rect x="721" y="526" width="115" height="74" fill="#c3b972"/>
<rect x="721" y="600" width="115" height="71" fill="#bfbf6e"/>
<rect x="721.5" y="526.5" width="114" height="144" fill="none" stroke="#e8e8e8" stroke-width="1"/>
<text x="778.5" y="687.5" font-size="15" fill="#fff" text-anchor="middle" stroke="#fff" stroke-width="0.25">60%</text>
<rect x="855" y="526" width="115" height="74" fill="#c4b65c"/>
<rect x="855" y="600" width="115" height="71" fill="#bec04c"/>
<rect x="855.5" y="526.5" width="114" height="144" fill="none" stroke="#e8e8e8" stroke-width="1"/>
<text x="912" y="687.5" font-size="15" fill="#fff" text-anchor="middle" stroke="#fff" stroke-width="0.25">80%</text>
<rect x="988" y="526" width="115" height="74" fill="#c4b530"/>
<rect x="988" y="600" width="115" height="71" fill="#c0c000"/>
<rect x="988.5" y="526.5" width="114" height="144" fill="none" stroke="#e8e8e8" stroke-width="1"/>
<text x="1045" y="687.5" font-size="15" fill="#fff" text-anchor="middle" stroke="#fff" stroke-width="0.25">100%</text>
<text transform="translate(447,558.5) rotate(-90)" font-size="14" fill="#fff" stroke="#fff" stroke-width="0.3" text-anchor="middle" textLength="37" lengthAdjust="spacingAndGlyphs">Actual</text>
<text transform="translate(447,638.5) rotate(-90)" font-size="14" fill="#fff" stroke="#fff" stroke-width="0.3" text-anchor="middle" textLength="37" lengthAdjust="spacingAndGlyphs">Target</text>
<rect x="1120" y="104" width="792" height="608" fill="#1c1c1c"/>
<rect x="1128" y="111" width="783" height="593" fill="#333333"/>
<text x="1520" y="130.2" font-size="15.5" fill="#d4d4d4" text-anchor="middle" textLength="87" lengthAdjust="spacingAndGlyphs">CIE 1931 xy</text>
<rect x="1161.5" y="136.5" width="745.5" height="537" fill="#242424"/>
<defs><clipPath id="locus"><path d="M1315.9,670.3 C1315.7,670.3 1315.0,670.5 1314.6,670.4 C1314.2,670.4 1314.1,670.5 1313.5,670.3 C1313.0,670.0 1312.3,669.7 1311.3,669.1 C1310.3,668.5 1309.1,667.7 1307.3,666.6 C1305.5,665.4 1303.4,664.2 1300.4,662.2 C1297.4,660.2 1292.3,656.9 1289.2,654.6 C1286.1,652.2 1284.6,651.1 1281.7,648.1 C1278.7,645.1 1275.4,641.7 1271.6,636.7 C1267.7,631.7 1263.6,626.2 1258.7,618.2 C1253.9,610.3 1248.5,601.1 1242.5,589.0 C1236.4,576.9 1229.2,562.9 1222.4,545.7 C1215.7,528.4 1208.5,508.1 1201.8,485.6 C1195.1,463.1 1187.8,436.5 1182.3,410.6 C1176.8,384.8 1171.7,356.2 1168.8,330.5 C1165.9,304.8 1164.1,278.9 1165.0,256.4 C1165.8,233.9 1168.7,212.3 1173.8,195.6 C1179.0,178.9 1187.1,165.1 1196.0,156.3 C1204.9,147.4 1216.3,143.9 1227.4,142.4 C1238.5,140.9 1250.9,144.2 1262.8,147.2 C1274.7,150.2 1287.1,155.4 1298.7,160.1 C1310.4,164.9 1321.5,170.1 1332.6,175.6 C1343.7,181.1 1354.4,186.9 1365.2,193.0 C1375.9,199.1 1386.6,205.5 1397.3,212.1 C1407.9,218.7 1418.4,225.6 1429.0,232.5 C1439.6,239.4 1450.1,246.6 1460.7,253.8 C1471.3,261.0 1481.9,268.3 1492.4,275.7 C1503.0,283.1 1513.5,290.5 1524.0,297.9 C1534.5,305.3 1545.1,312.8 1555.4,320.2 C1565.8,327.5 1576.1,334.9 1586.2,342.1 C1596.3,349.4 1606.3,356.6 1616.1,363.5 C1625.8,370.5 1635.5,377.4 1644.7,384.0 C1654.0,390.7 1663.1,397.1 1671.7,403.3 C1680.3,409.4 1688.6,415.4 1696.3,420.9 C1703.9,426.4 1711.0,431.4 1717.6,436.2 C1724.3,441.0 1730.7,445.6 1736.5,449.7 C1742.2,453.7 1745.7,456.2 1752.1,460.7 C1758.5,465.3 1768.6,472.7 1774.9,477.1 C1781.1,481.6 1785.3,484.6 1789.4,487.5 C1793.5,490.4 1796.6,492.7 1799.3,494.6 C1801.9,496.5 1803.8,497.8 1805.5,499.0 C1807.1,500.1 1807.9,500.7 1809.0,501.5 C1810.1,502.3 1811.3,503.2 1812.0,503.7 C1812.7,504.2 1813.0,504.4 1813.2,504.5 Z"/></clipPath><linearGradient id="gLeft" gradientUnits="userSpaceOnUse" x1="0" y1="138.4" x2="0" y2="673.5"><stop offset="0" stop-color="#008c00"/><stop offset="0.42" stop-color="#009000"/><stop offset="0.53" stop-color="#009460"/><stop offset="0.595" stop-color="#00a090"/><stop offset="0.64" stop-color="#007a90"/><stop offset="0.75" stop-color="#0044a0"/><stop offset="0.9" stop-color="#0010a0"/><stop offset="1" stop-color="#0000a0"/></linearGradient><linearGradient id="gGR" gradientUnits="userSpaceOnUse" x1="1427.6" y1="291.3" x2="1729.2" y2="463.3"><stop offset="0" stop-color="#008800"/><stop offset="0.3" stop-color="#6a8400"/><stop offset="0.55" stop-color="#8a6a00"/><stop offset="0.8" stop-color="#8e2800"/><stop offset="1" stop-color="#900000"/></linearGradient><linearGradient id="gBR" gradientUnits="userSpaceOnUse" x1="1294.5" y1="635.3" x2="1729.2" y2="463.3"><stop offset="0" stop-color="#1400b0"/><stop offset="0.3" stop-color="#6a0090"/><stop offset="0.6" stop-color="#8a0060"/><stop offset="0.85" stop-color="#900010"/><stop offset="1" stop-color="#900000"/></linearGradient><linearGradient id="gR" gradientUnits="userSpaceOnUse" x1="1729.2" y1="463.3" x2="1409.0" y2="339.4"><stop offset="0" stop-color="#ff0000"/><stop offset="0.788" stop-color="#ff0000"/><stop offset="1" stop-color="#000"/></linearGradient><linearGradient id="gG" gradientUnits="userSpaceOnUse" x1="1427.6" y1="291.3" x2="1527.3" y2="543.2"><stop offset="0" stop-color="#00ff00"/><stop offset="0.608" stop-color="#00ff00"/><stop offset="1" stop-color="#000"/></linearGradient><linearGradient id="gB" gradientUnits="userSpaceOnUse" x1="1294.5" y1="635.3" x2="1475.2" y2="318.5"><stop offset="0" stop-color="#0000ff"/><stop offset="0.604" stop-color="#0000ff"/><stop offset="1" stop-color="#000"/></linearGradient></defs>
<defs><linearGradient id="fz0" gradientUnits="userSpaceOnUse" x1="1438.9" y1="463.9" x2="1726.7" y2="461.9"><stop offset="0.000" stop-color="#ffffff"/><stop offset="0.200" stop-color="#ff7676"/><stop offset="0.400" stop-color="#ff3f3e"/><stop offset="0.600" stop-color="#ff2120"/><stop offset="0.800" stop-color="#ff0e0d"/><stop offset="1.000" stop-color="#ff0100"/></linearGradient><linearGradient id="fz1" gradientUnits="userSpaceOnUse" x1="1438.9" y1="463.9" x2="1721.6" y2="459.0"><stop offset="0.000" stop-color="#ffffff"/><stop offset="0.200" stop-color="#ff7977"/><stop offset="0.400" stop-color="#ff413f"/><stop offset="0.600" stop-color="#ff2320"/><stop offset="0.800" stop-color="#ff110d"/><stop offset="1.000" stop-color="#ff0400"/></linearGradient><linearGradient id="fz2" gradientUnits="userSpaceOnUse" x1="1438.9" y1="463.9" x2="1716.6" y2="456.1"><stop offset="0.000" stop-color="#ffffff"/><stop offset="0.200" stop-color="#ff7b78"/><stop offset="0.400" stop-color="#ff4440"/><stop offset="0.600" stop-color="#ff2621"/><stop offset="0.800" stop-color="#ff130d"/><stop offset="1.000" stop-color="#ff0600"/></linearGradient><linearGradient id="fz3" gradientUnits="userSpaceOnUse" x1="1438.9" y1="463.9" x2="1711.6" y2="453.3"><stop offset="0.000" stop-color="#ffffff"/><stop offset="0.200" stop-color="#ff7d79"/><stop offset="0.400" stop-color="#ff4740"/><stop offset="0.600" stop-color="#ff2921"/><stop offset="0.800" stop-color="#ff160e"/><stop offset="1.000" stop-color="#ff0900"/></linearGradient><linearGradient id="fz4" gradientUnits="userSpaceOnUse" x1="1438.9" y1="463.9" x2="1706.6" y2="450.4"><stop offset="0.000" stop-color="#ffffff"/><stop offset="0.200" stop-color="#ff807a"/><stop offset="0.400" stop-color="#ff4a41"/><stop offset="0.600" stop-color="#ff2b22"/><stop offset="0.800" stop-color="#ff180e"/><stop offset="1.000" stop-color="#ff0b00"/></linearGradient><linearGradient id="fz5" gradientUnits="userSpaceOnUse" x1="1438.9" y1="463.9" x2="1701.5" y2="447.5"><stop offset="0.000" stop-color="#ffffff"/><stop offset="0.200" stop-color="#ff827b"/><stop offset="0.400" stop-color="#ff4c42"/><stop offset="0.600" stop-color="#ff2e22"/><stop offset="0.800" stop-color="#ff1b0e"/><stop offset="1.000" stop-color="#ff0e00"/></linearGradient><linearGradient id="fz6" gradientUnits="userSpaceOnUse" x1="1438.9" y1="463.9" x2="1696.5" y2="444.7"><stop offset="0.000" stop-color="#ffffff"/><stop offset="0.200" stop-color="#ff857c"/><stop offset="0.400" stop-color="#ff4f43"/><stop offset="0.600" stop-color="#ff3123"/><stop offset="0.800" stop-color="#ff1e0e"/><stop offset="1.000" stop-color="#ff1100"/></linearGradient><linearGradient id="fz7" gradientUnits="userSpaceOnUse" x1="1438.9" y1="463.9" x2="1691.5" y2="441.8"><stop offset="0.000" stop-color="#ffffff"/><stop offset="0.200" stop-color="#ff887e"/><stop offset="0.400" stop-color="#ff5244"/><stop offset="0.600" stop-color="#ff3423"/><stop offset="0.800" stop-color="#ff210f"/><stop offset="1.000" stop-color="#ff1400"/></linearGradient><linearGradient id="fz8" gradientUnits="userSpaceOnUse" x1="1438.9" y1="463.9" x2="1686.5" y2="438.9"><stop offset="0.000" stop-color="#ffffff"/><stop offset="0.200" stop-color="#ff8a7f"/><stop offset="0.400" stop-color="#ff5645"/><stop offset="0.600" stop-color="#ff3824"/><stop offset="0.800" stop-color="#ff240f"/><stop offset="1.000" stop-color="#ff1700"/></linearGradient><linearGradient id="fz9" gradientUnits="userSpaceOnUse" x1="1438.9" y1="463.9" x2="1681.4" y2="436.1"><stop offset="0.000" stop-color="#ffffff"/><stop offset="0.200" stop-color="#ff8d80"/><stop offset="0.400" stop-color="#ff5946"/><stop offset="0.600" stop-color="#ff3b25"/><stop offset="0.800" stop-color="#ff280f"/><stop offset="1.000" stop-color="#ff1a00"/></linearGradient><linearGradient id="fz10" gradientUnits="userSpaceOnUse" x1="1438.9" y1="463.9" x2="1676.4" y2="433.2"><stop offset="0.000" stop-color="#ffffff"/><stop offset="0.200" stop-color="#ff9081"/><stop offset="0.400" stop-color="#ff5c47"/><stop offset="0.600" stop-color="#ff3e25"/><stop offset="0.800" stop-color="#ff2b0f"/><stop offset="1.000" stop-color="#ff1d00"/></linearGradient><linearGradient id="fz11" gradientUnits="userSpaceOnUse" x1="1438.9" y1="463.9" x2="1671.4" y2="430.3"><stop offset="0.000" stop-color="#ffffff"/><stop offset="0.200" stop-color="#ff9383"/><stop offset="0.400" stop-color="#ff5f48"/><stop offset="0.600" stop-color="#ff4226"/><stop offset="0.800" stop-color="#ff2e10"/><stop offset="1.000" stop-color="#ff2100"/></linearGradient><linearGradient id="fz12" gradientUnits="userSpaceOnUse" x1="1438.9" y1="463.9" x2="1666.4" y2="427.5"><stop offset="0.000" stop-color="#ffffff"/><stop offset="0.200" stop-color="#ff9584"/><stop offset="0.400" stop-color="#ff6349"/><stop offset="0.600" stop-color="#ff4527"/><stop offset="0.800" stop-color="#ff3210"/><stop offset="1.000" stop-color="#ff2400"/></linearGradient><linearGradient id="fz13" gradientUnits="userSpaceOnUse" x1="1438.9" y1="463.9" x2="1661.3" y2="424.6"><stop offset="0.000" stop-color="#ffffff"/><stop offset="0.200" stop-color="#ff9885"/><stop offset="0.400" stop-color="#ff674a"/><stop offset="0.600" stop-color="#ff4927"/><stop offset="0.800" stop-color="#ff3610"/><stop offset="1.000" stop-color="#ff2800"/></linearGradient><linearGradient id="fz14" gradientUnits="userSpaceOnUse" x1="1438.9" y1="463.9" x2="1656.3" y2="421.7"><stop offset="0.000" stop-color="#ffffff"/><stop offset="0.200" stop-color="#ff9b87"/><stop offset="0.400" stop-color="#ff6a4b"/><stop offset="0.600" stop-color="#ff4d28"/><stop offset="0.800" stop-color="#ff3a11"/><stop offset="1.000" stop-color="#ff2c00"/></linearGradient><linearGradient id="fz15" gradientUnits="userSpaceOnUse" x1="1438.9" y1="463.9" x2="1651.3" y2="418.9"><stop offset="0.000" stop-color="#ffffff"/><stop offset="0.200" stop-color="#ff9e88"/><stop offset="0.400" stop-color="#ff6e4d"/><stop offset="0.600" stop-color="#ff5129"/><stop offset="0.800" stop-color="#ff3e11"/><stop offset="1.000" stop-color="#ff3000"/></linearGradient><linearGradient id="fz16" gradientUnits="userSpaceOnUse" x1="1438.9" y1="463.9" x2="1646.2" y2="416.0"><stop offset="0.000" stop-color="#ffffff"/><stop offset="0.200" stop-color="#ffa289"/><stop offset="0.400" stop-color="#ff724e"/><stop offset="0.600" stop-color="#ff552a"/><stop offset="0.800" stop-color="#ff4211"/><stop offset="1.000" stop-color="#ff3400"/></linearGradient><linearGradient id="fz17" gradientUnits="userSpaceOnUse" x1="1438.9" y1="463.9" x2="1641.2" y2="413.1"><stop offset="0.000" stop-color="#ffffff"/><stop offset="0.200" stop-color="#ffa58b"/><stop offset="0.400" stop-color="#ff764f"/><stop offset="0.600" stop-color="#ff5a2a"/><stop offset="0.800" stop-color="#ff4712"/><stop offset="1.000" stop-color="#ff3900"/></linearGradient><linearGradient id="fz18" gradientUnits="userSpaceOnUse" x1="1438.9" y1="463.9" x2="1636.2" y2="410.3"><stop offset="0.000" stop-color="#ffffff"/><stop offset="0.200" stop-color="#ffa88c"/><stop offset="0.400" stop-color="#ff7a50"/><stop offset="0.600" stop-color="#ff5e2b"/><stop offset="0.800" stop-color="#ff4b12"/><stop offset="1.000" stop-color="#ff3d00"/></linearGradient><linearGradient id="fz19" gradientUnits="userSpaceOnUse" x1="1438.9" y1="463.9" x2="1631.2" y2="407.4"><stop offset="0.000" stop-color="#ffffff"/><stop offset="0.200" stop-color="#ffab8e"/><stop offset="0.400" stop-color="#ff7f52"/><stop offset="0.600" stop-color="#ff632c"/><stop offset="0.800" stop-color="#ff5013"/><stop offset="1.000" stop-color="#ff4200"/></linearGradient><linearGradient id="fz20" gradientUnits="userSpaceOnUse" x1="1438.9" y1="463.9" x2="1626.1" y2="404.5"><stop offset="0.000" stop-color="#ffffff"/><stop offset="0.200" stop-color="#ffaf90"/><stop offset="0.400" stop-color="#ff8353"/><stop offset="0.600" stop-color="#ff682d"/><stop offset="0.800" stop-color="#ff5513"/><stop offset="1.000" stop-color="#ff4800"/></linearGradient><linearGradient id="fz21" gradientUnits="userSpaceOnUse" x1="1438.9" y1="463.9" x2="1621.1" y2="401.7"><stop offset="0.000" stop-color="#ffffff"/><stop offset="0.200" stop-color="#ffb291"/><stop offset="0.400" stop-color="#ff8854"/><stop offset="0.600" stop-color="#ff6d2e"/><stop offset="0.800" stop-color="#ff5b13"/><stop offset="1.000" stop-color="#ff4d00"/></linearGradient><linearGradient id="fz22" gradientUnits="userSpaceOnUse" x1="1438.9" y1="463.9" x2="1616.1" y2="398.8"><stop offset="0.000" stop-color="#ffffff"/><stop offset="0.200" stop-color="#ffb693"/><stop offset="0.400" stop-color="#ff8d56"/><stop offset="0.600" stop-color="#ff732f"/><stop offset="0.800" stop-color="#ff6014"/><stop offset="1.000" stop-color="#ff5300"/></linearGradient><linearGradient id="fz23" gradientUnits="userSpaceOnUse" x1="1438.9" y1="463.9" x2="1611.1" y2="395.9"><stop offset="0.000" stop-color="#ffffff"/><stop offset="0.200" stop-color="#ffba94"/><stop offset="0.400" stop-color="#ff9258"/><stop offset="0.600" stop-color="#ff7830"/><stop offset="0.800" stop-color="#ff6614"/><stop offset="1.000" stop-color="#ff5900"/></linearGradient><linearGradient id="fz24" gradientUnits="userSpaceOnUse" x1="1438.9" y1="463.9" x2="1606.0" y2="393.1"><stop offset="0.000" stop-color="#ffffff"/><stop offset="0.200" stop-color="#ffbd96"/><stop offset="0.400" stop-color="#ff9759"/><stop offset="0.600" stop-color="#ff7e31"/><stop offset="0.800" stop-color="#ff6c15"/><stop offset="1.000" stop-color="#ff5f00"/></linearGradient><linearGradient id="fz25" gradientUnits="userSpaceOnUse" x1="1438.9" y1="463.9" x2="1601.0" y2="390.2"><stop offset="0.000" stop-color="#ffffff"/><stop offset="0.200" stop-color="#ffc198"/><stop offset="0.400" stop-color="#ff9c5b"/><stop offset="0.600" stop-color="#ff8432"/><stop offset="0.800" stop-color="#ff7316"/><stop offset="1.000" stop-color="#ff6600"/></linearGradient><linearGradient id="fz26" gradientUnits="userSpaceOnUse" x1="1438.9" y1="463.9" x2="1596.0" y2="387.3"><stop offset="0.000" stop-color="#ffffff"/><stop offset="0.200" stop-color="#ffc59a"/><stop offset="0.400" stop-color="#ffa25d"/><stop offset="0.600" stop-color="#ff8b34"/><stop offset="0.800" stop-color="#ff7a16"/><stop offset="1.000" stop-color="#ff6d00"/></linearGradient><linearGradient id="fz27" gradientUnits="userSpaceOnUse" x1="1438.9" y1="463.9" x2="1591.0" y2="384.5"><stop offset="0.000" stop-color="#ffffff"/><stop offset="0.200" stop-color="#ffc99c"/><stop offset="0.400" stop-color="#ffa85e"/><stop offset="0.600" stop-color="#ff9135"/><stop offset="0.800" stop-color="#ff8117"/><stop offset="1.000" stop-color="#ff7500"/></linearGradient><linearGradient id="fz28" gradientUnits="userSpaceOnUse" x1="1438.9" y1="463.9" x2="1585.9" y2="381.6"><stop offset="0.000" stop-color="#ffffff"/><stop offset="0.200" stop-color="#ffcd9d"/><stop offset="0.400" stop-color="#ffae60"/><stop offset="0.600" stop-color="#ff9836"/><stop offset="0.800" stop-color="#ff8917"/><stop offset="1.000" stop-color="#ff7d00"/></linearGradient><linearGradient id="fz29" gradientUnits="userSpaceOnUse" x1="1438.9" y1="463.9" x2="1580.9" y2="378.7"><stop offset="0.000" stop-color="#ffffff"/><stop offset="0.200" stop-color="#ffd19f"/><stop offset="0.400" stop-color="#ffb462"/><stop offset="0.600" stop-color="#ffa037"/><stop offset="0.800" stop-color="#ff9118"/><stop offset="1.000" stop-color="#ff8500"/></linearGradient><linearGradient id="fz30" gradientUnits="userSpaceOnUse" x1="1438.9" y1="463.9" x2="1575.9" y2="375.9"><stop offset="0.000" stop-color="#ffffff"/><stop offset="0.200" stop-color="#ffd6a1"/><stop offset="0.400" stop-color="#ffbb64"/><stop offset="0.600" stop-color="#ffa839"/><stop offset="0.800" stop-color="#ff9a19"/><stop offset="1.000" stop-color="#ff8f00"/></linearGradient><linearGradient id="fz31" gradientUnits="userSpaceOnUse" x1="1438.9" y1="463.9" x2="1570.9" y2="373.0"><stop offset="0.000" stop-color="#ffffff"/><stop offset="0.200" stop-color="#ffdaa3"/><stop offset="0.400" stop-color="#ffc266"/><stop offset="0.600" stop-color="#ffb03a"/><stop offset="0.800" stop-color="#ffa31a"/><stop offset="1.000" stop-color="#ff9800"/></linearGradient><linearGradient id="fz32" gradientUnits="userSpaceOnUse" x1="1438.9" y1="463.9" x2="1565.8" y2="370.1"><stop offset="0.000" stop-color="#ffffff"/><stop offset="0.200" stop-color="#ffdfa6"/><stop offset="0.400" stop-color="#ffc968"/><stop offset="0.600" stop-color="#ffb93c"/><stop offset="0.800" stop-color="#ffad1a"/><stop offset="1.000" stop-color="#ffa300"/></linearGradient><linearGradient id="fz33" gradientUnits="userSpaceOnUse" x1="1438.9" y1="463.9" x2="1560.8" y2="367.3"><stop offset="0.000" stop-color="#ffffff"/><stop offset="0.200" stop-color="#ffe3a8"/><stop offset="0.400" stop-color="#ffd06b"/><stop offset="0.600" stop-color="#ffc23e"/><stop offset="0.800" stop-color="#ffb71b"/><stop offset="1.000" stop-color="#ffae00"/></linearGradient><linearGradient id="fz34" gradientUnits="userSpaceOnUse" x1="1438.9" y1="463.9" x2="1555.8" y2="364.4"><stop offset="0.000" stop-color="#ffffff"/><stop offset="0.200" stop-color="#ffe8aa"/><stop offset="0.400" stop-color="#ffd86d"/><stop offset="0.600" stop-color="#ffcc40"/><stop offset="0.800" stop-color="#ffc21c"/><stop offset="1.000" stop-color="#ffbb00"/></linearGradient><linearGradient id="fz35" gradientUnits="userSpaceOnUse" x1="1438.9" y1="463.9" x2="1550.7" y2="361.5"><stop offset="0.000" stop-color="#ffffff"/><stop offset="0.200" stop-color="#ffedac"/><stop offset="0.400" stop-color="#ffe070"/><stop offset="0.600" stop-color="#ffd642"/><stop offset="0.800" stop-color="#ffce1d"/><stop offset="1.000" stop-color="#ffc800"/></linearGradient><linearGradient id="fz36" gradientUnits="userSpaceOnUse" x1="1438.9" y1="463.9" x2="1545.7" y2="358.7"><stop offset="0.000" stop-color="#ffffff"/><stop offset="0.200" stop-color="#fff2ae"/><stop offset="0.400" stop-color="#ffe872"/><stop offset="0.600" stop-color="#ffe144"/><stop offset="0.800" stop-color="#ffdb1e"/><stop offset="1.000" stop-color="#ffd600"/></linearGradient><linearGradient id="fz37" gradientUnits="userSpaceOnUse" x1="1438.9" y1="463.9" x2="1540.7" y2="355.8"><stop offset="0.000" stop-color="#ffffff"/><stop offset="0.200" stop-color="#fff7b1"/><stop offset="0.400" stop-color="#fff175"/><stop offset="0.600" stop-color="#ffed46"/><stop offset="0.800" stop-color="#ffe920"/><stop offset="1.000" stop-color="#ffe600"/></linearGradient><linearGradient id="fz38" gradientUnits="userSpaceOnUse" x1="1438.9" y1="463.9" x2="1535.7" y2="352.9"><stop offset="0.000" stop-color="#ffffff"/><stop offset="0.200" stop-color="#fffdb3"/><stop offset="0.400" stop-color="#fffb78"/><stop offset="0.600" stop-color="#fff948"/><stop offset="0.800" stop-color="#fff821"/><stop offset="1.000" stop-color="#fff700"/></linearGradient><linearGradient id="fz39" gradientUnits="userSpaceOnUse" x1="1438.9" y1="463.9" x2="1530.6" y2="350.1"><stop offset="0.000" stop-color="#ffffff"/><stop offset="0.200" stop-color="#fcffb4"/><stop offset="0.400" stop-color="#faff78"/><stop offset="0.600" stop-color="#f8ff48"/><stop offset="0.800" stop-color="#f6ff21"/><stop offset="1.000" stop-color="#f5ff00"/></linearGradient><linearGradient id="fz40" gradientUnits="userSpaceOnUse" x1="1438.9" y1="463.9" x2="1525.6" y2="347.2"><stop offset="0.000" stop-color="#ffffff"/><stop offset="0.200" stop-color="#f7ffb2"/><stop offset="0.400" stop-color="#f0ff77"/><stop offset="0.600" stop-color="#ebff47"/><stop offset="0.800" stop-color="#e7ff20"/><stop offset="1.000" stop-color="#e3ff00"/></linearGradient><linearGradient id="fz41" gradientUnits="userSpaceOnUse" x1="1438.9" y1="463.9" x2="1520.6" y2="344.3"><stop offset="0.000" stop-color="#ffffff"/><stop offset="0.200" stop-color="#f1ffb1"/><stop offset="0.400" stop-color="#e7ff75"/><stop offset="0.600" stop-color="#deff46"/><stop offset="0.800" stop-color="#d8ff20"/><stop offset="1.000" stop-color="#d2ff00"/></linearGradient><linearGradient id="fz42" gradientUnits="userSpaceOnUse" x1="1438.9" y1="463.9" x2="1515.6" y2="341.5"><stop offset="0.000" stop-color="#ffffff"/><stop offset="0.200" stop-color="#ecffb0"/><stop offset="0.400" stop-color="#deff74"/><stop offset="0.600" stop-color="#d3ff45"/><stop offset="0.800" stop-color="#caff1f"/><stop offset="1.000" stop-color="#c2ff00"/></linearGradient><linearGradient id="fz43" gradientUnits="userSpaceOnUse" x1="1438.9" y1="463.9" x2="1510.5" y2="338.6"><stop offset="0.000" stop-color="#ffffff"/><stop offset="0.200" stop-color="#e7ffae"/><stop offset="0.400" stop-color="#d5ff72"/><stop offset="0.600" stop-color="#c7ff44"/><stop offset="0.800" stop-color="#bcff1e"/><stop offset="1.000" stop-color="#b3ff00"/></linearGradient><linearGradient id="fz44" gradientUnits="userSpaceOnUse" x1="1438.9" y1="463.9" x2="1505.5" y2="335.7"><stop offset="0.000" stop-color="#ffffff"/><stop offset="0.200" stop-color="#e2ffad"/><stop offset="0.400" stop-color="#ccff71"/><stop offset="0.600" stop-color="#bcff42"/><stop offset="0.800" stop-color="#afff1e"/><stop offset="1.000" stop-color="#a4ff00"/></linearGradient><linearGradient id="fz45" gradientUnits="userSpaceOnUse" x1="1438.9" y1="463.9" x2="1500.5" y2="332.9"><stop offset="0.000" stop-color="#ffffff"/><stop offset="0.200" stop-color="#ddffac"/><stop offset="0.400" stop-color="#c4ff6f"/><stop offset="0.600" stop-color="#b1ff41"/><stop offset="0.800" stop-color="#a2ff1d"/><stop offset="1.000" stop-color="#96ff00"/></linearGradient><linearGradient id="fz46" gradientUnits="userSpaceOnUse" x1="1438.9" y1="463.9" x2="1495.5" y2="330.0"><stop offset="0.000" stop-color="#ffffff"/><stop offset="0.200" stop-color="#d8ffab"/><stop offset="0.400" stop-color="#bcff6e"/><stop offset="0.600" stop-color="#a7ff40"/><stop offset="0.800" stop-color="#96ff1d"/><stop offset="1.000" stop-color="#89ff00"/></linearGradient><linearGradient id="fz47" gradientUnits="userSpaceOnUse" x1="1438.9" y1="463.9" x2="1490.4" y2="327.1"><stop offset="0.000" stop-color="#ffffff"/><stop offset="0.200" stop-color="#d3ffa9"/><stop offset="0.400" stop-color="#b4ff6d"/><stop offset="0.600" stop-color="#9dff3f"/><stop offset="0.800" stop-color="#8bff1c"/><stop offset="1.000" stop-color="#7cff00"/></linearGradient><linearGradient id="fz48" gradientUnits="userSpaceOnUse" x1="1438.9" y1="463.9" x2="1485.4" y2="324.3"><stop offset="0.000" stop-color="#ffffff"/><stop offset="0.200" stop-color="#ceffa8"/><stop offset="0.400" stop-color="#acff6b"/><stop offset="0.600" stop-color="#93ff3e"/><stop offset="0.800" stop-color="#7fff1c"/><stop offset="1.000" stop-color="#70ff00"/></linearGradient><linearGradient id="fz49" gradientUnits="userSpaceOnUse" x1="1438.9" y1="463.9" x2="1480.4" y2="321.4"><stop offset="0.000" stop-color="#ffffff"/><stop offset="0.200" stop-color="#caffa7"/><stop offset="0.400" stop-color="#a5ff6a"/><stop offset="0.600" stop-color="#89ff3d"/><stop offset="0.800" stop-color="#74ff1b"/><stop offset="1.000" stop-color="#64ff00"/></linearGradient><linearGradient id="fz50" gradientUnits="userSpaceOnUse" x1="1438.9" y1="463.9" x2="1475.4" y2="318.5"><stop offset="0.000" stop-color="#ffffff"/><stop offset="0.200" stop-color="#c5ffa6"/><stop offset="0.400" stop-color="#9dff69"/><stop offset="0.600" stop-color="#80ff3c"/><stop offset="0.800" stop-color="#6aff1b"/><stop offset="1.000" stop-color="#59ff00"/></linearGradient><linearGradient id="fz51" gradientUnits="userSpaceOnUse" x1="1438.9" y1="463.9" x2="1470.3" y2="315.7"><stop offset="0.000" stop-color="#ffffff"/><stop offset="0.200" stop-color="#c0ffa5"/><stop offset="0.400" stop-color="#96ff68"/><stop offset="0.600" stop-color="#77ff3c"/><stop offset="0.800" stop-color="#60ff1a"/><stop offset="1.000" stop-color="#4eff00"/></linearGradient><linearGradient id="fz52" gradientUnits="userSpaceOnUse" x1="1438.9" y1="463.9" x2="1465.3" y2="312.8"><stop offset="0.000" stop-color="#ffffff"/><stop offset="0.200" stop-color="#bcffa4"/><stop offset="0.400" stop-color="#8fff66"/><stop offset="0.600" stop-color="#6fff3b"/><stop offset="0.800" stop-color="#56ff1a"/><stop offset="1.000" stop-color="#43ff00"/></linearGradient><linearGradient id="fz53" gradientUnits="userSpaceOnUse" x1="1438.9" y1="463.9" x2="1460.3" y2="309.9"><stop offset="0.000" stop-color="#ffffff"/><stop offset="0.200" stop-color="#b7ffa3"/><stop offset="0.400" stop-color="#88ff65"/><stop offset="0.600" stop-color="#66ff3a"/><stop offset="0.800" stop-color="#4dff19"/><stop offset="1.000" stop-color="#39ff00"/></linearGradient><linearGradient id="fz54" gradientUnits="userSpaceOnUse" x1="1438.9" y1="463.9" x2="1455.2" y2="307.1"><stop offset="0.000" stop-color="#ffffff"/><stop offset="0.200" stop-color="#b3ffa1"/><stop offset="0.400" stop-color="#81ff64"/><stop offset="0.600" stop-color="#5eff39"/><stop offset="0.800" stop-color="#44ff19"/><stop offset="1.000" stop-color="#30ff00"/></linearGradient><linearGradient id="fz55" gradientUnits="userSpaceOnUse" x1="1438.9" y1="463.9" x2="1450.2" y2="304.2"><stop offset="0.000" stop-color="#ffffff"/><stop offset="0.200" stop-color="#afffa0"/><stop offset="0.400" stop-color="#7aff63"/><stop offset="0.600" stop-color="#56ff38"/><stop offset="0.800" stop-color="#3bff18"/><stop offset="1.000" stop-color="#26ff00"/></linearGradient><linearGradient id="fz56" gradientUnits="userSpaceOnUse" x1="1438.9" y1="463.9" x2="1445.2" y2="301.3"><stop offset="0.000" stop-color="#ffffff"/><stop offset="0.200" stop-color="#aaff9f"/><stop offset="0.400" stop-color="#74ff62"/><stop offset="0.600" stop-color="#4eff37"/><stop offset="0.800" stop-color="#32ff18"/><stop offset="1.000" stop-color="#1dff00"/></linearGradient><linearGradient id="fz57" gradientUnits="userSpaceOnUse" x1="1438.9" y1="463.9" x2="1440.2" y2="298.5"><stop offset="0.000" stop-color="#ffffff"/><stop offset="0.200" stop-color="#a6ff9e"/><stop offset="0.400" stop-color="#6eff61"/><stop offset="0.600" stop-color="#47ff37"/><stop offset="0.800" stop-color="#2aff18"/><stop offset="1.000" stop-color="#15ff00"/></linearGradient><linearGradient id="fz58" gradientUnits="userSpaceOnUse" x1="1438.9" y1="463.9" x2="1435.1" y2="295.6"><stop offset="0.000" stop-color="#ffffff"/><stop offset="0.200" stop-color="#a2ff9d"/><stop offset="0.400" stop-color="#67ff60"/><stop offset="0.600" stop-color="#3fff36"/><stop offset="0.800" stop-color="#22ff17"/><stop offset="1.000" stop-color="#0cff00"/></linearGradient><linearGradient id="fz59" gradientUnits="userSpaceOnUse" x1="1438.9" y1="463.9" x2="1430.1" y2="292.7"><stop offset="0.000" stop-color="#ffffff"/><stop offset="0.200" stop-color="#9eff9c"/><stop offset="0.400" stop-color="#61ff5f"/><stop offset="0.600" stop-color="#38ff35"/><stop offset="0.800" stop-color="#1bff17"/><stop offset="1.000" stop-color="#04ff00"/></linearGradient><linearGradient id="fz60" gradientUnits="userSpaceOnUse" x1="1438.9" y1="463.9" x2="1426.5" y2="294.2"><stop offset="0.000" stop-color="#ffffff"/><stop offset="0.200" stop-color="#9cff9d"/><stop offset="0.400" stop-color="#5fff60"/><stop offset="0.600" stop-color="#35ff37"/><stop offset="0.800" stop-color="#17ff19"/><stop offset="1.000" stop-color="#00ff02"/></linearGradient><linearGradient id="fz61" gradientUnits="userSpaceOnUse" x1="1438.9" y1="463.9" x2="1424.3" y2="299.9"><stop offset="0.000" stop-color="#ffffff"/><stop offset="0.200" stop-color="#9dffa0"/><stop offset="0.400" stop-color="#60ff64"/><stop offset="0.600" stop-color="#36ff3b"/><stop offset="0.800" stop-color="#17ff1d"/><stop offset="1.000" stop-color="#00ff06"/></linearGradient><linearGradient id="fz62" gradientUnits="userSpaceOnUse" x1="1438.9" y1="463.9" x2="1422.1" y2="305.6"><stop offset="0.000" stop-color="#ffffff"/><stop offset="0.200" stop-color="#9effa2"/><stop offset="0.400" stop-color="#61ff68"/><stop offset="0.600" stop-color="#37ff3f"/><stop offset="0.800" stop-color="#18ff22"/><stop offset="1.000" stop-color="#00ff0b"/></linearGradient><linearGradient id="fz63" gradientUnits="userSpaceOnUse" x1="1438.9" y1="463.9" x2="1419.8" y2="311.4"><stop offset="0.000" stop-color="#ffffff"/><stop offset="0.200" stop-color="#9fffa5"/><stop offset="0.400" stop-color="#62ff6c"/><stop offset="0.600" stop-color="#37ff44"/><stop offset="0.800" stop-color="#18ff26"/><stop offset="1.000" stop-color="#00ff10"/></linearGradient><linearGradient id="fz64" gradientUnits="userSpaceOnUse" x1="1438.9" y1="463.9" x2="1417.6" y2="317.1"><stop offset="0.000" stop-color="#ffffff"/><stop offset="0.200" stop-color="#a0ffa8"/><stop offset="0.400" stop-color="#63ff70"/><stop offset="0.600" stop-color="#38ff48"/><stop offset="0.800" stop-color="#18ff2b"/><stop offset="1.000" stop-color="#00ff14"/></linearGradient><linearGradient id="fz65" gradientUnits="userSpaceOnUse" x1="1438.9" y1="463.9" x2="1415.4" y2="322.8"><stop offset="0.000" stop-color="#ffffff"/><stop offset="0.200" stop-color="#a1ffab"/><stop offset="0.400" stop-color="#64ff74"/><stop offset="0.600" stop-color="#39ff4d"/><stop offset="0.800" stop-color="#19ff30"/><stop offset="1.000" stop-color="#00ff19"/></linearGradient><linearGradient id="fz66" gradientUnits="userSpaceOnUse" x1="1438.9" y1="463.9" x2="1413.2" y2="328.6"><stop offset="0.000" stop-color="#ffffff"/><stop offset="0.200" stop-color="#a3ffae"/><stop offset="0.400" stop-color="#65ff78"/><stop offset="0.600" stop-color="#3aff52"/><stop offset="0.800" stop-color="#19ff35"/><stop offset="1.000" stop-color="#00ff1f"/></linearGradient><linearGradient id="fz67" gradientUnits="userSpaceOnUse" x1="1438.9" y1="463.9" x2="1411.0" y2="334.3"><stop offset="0.000" stop-color="#ffffff"/><stop offset="0.200" stop-color="#a4ffb1"/><stop offset="0.400" stop-color="#66ff7c"/><stop offset="0.600" stop-color="#3bff56"/><stop offset="0.800" stop-color="#1aff3a"/><stop offset="1.000" stop-color="#00ff24"/></linearGradient><linearGradient id="fz68" gradientUnits="userSpaceOnUse" x1="1438.9" y1="463.9" x2="1408.8" y2="340.0"><stop offset="0.000" stop-color="#ffffff"/><stop offset="0.200" stop-color="#a5ffb4"/><stop offset="0.400" stop-color="#68ff80"/><stop offset="0.600" stop-color="#3cff5b"/><stop offset="0.800" stop-color="#1aff40"/><stop offset="1.000" stop-color="#00ff2a"/></linearGradient><linearGradient id="fz69" gradientUnits="userSpaceOnUse" x1="1438.9" y1="463.9" x2="1406.5" y2="345.8"><stop offset="0.000" stop-color="#ffffff"/><stop offset="0.200" stop-color="#a6ffb7"/><stop offset="0.400" stop-color="#69ff85"/><stop offset="0.600" stop-color="#3cff61"/><stop offset="0.800" stop-color="#1bff45"/><stop offset="1.000" stop-color="#00ff2f"/></linearGradient><linearGradient id="fz70" gradientUnits="userSpaceOnUse" x1="1438.9" y1="463.9" x2="1404.3" y2="351.5"><stop offset="0.000" stop-color="#ffffff"/><stop offset="0.200" stop-color="#a7ffba"/><stop offset="0.400" stop-color="#6aff89"/><stop offset="0.600" stop-color="#3dff66"/><stop offset="0.800" stop-color="#1bff4b"/><stop offset="1.000" stop-color="#00ff36"/></linearGradient><linearGradient id="fz71" gradientUnits="userSpaceOnUse" x1="1438.9" y1="463.9" x2="1402.1" y2="357.2"><stop offset="0.000" stop-color="#ffffff"/><stop offset="0.200" stop-color="#a8ffbd"/><stop offset="0.400" stop-color="#6bff8e"/><stop offset="0.600" stop-color="#3eff6c"/><stop offset="0.800" stop-color="#1cff51"/><stop offset="1.000" stop-color="#00ff3c"/></linearGradient><linearGradient id="fz72" gradientUnits="userSpaceOnUse" x1="1438.9" y1="463.9" x2="1399.9" y2="363.0"><stop offset="0.000" stop-color="#ffffff"/><stop offset="0.200" stop-color="#a9ffc0"/><stop offset="0.400" stop-color="#6dff93"/><stop offset="0.600" stop-color="#3fff71"/><stop offset="0.800" stop-color="#1cff57"/><stop offset="1.000" stop-color="#00ff42"/></linearGradient><linearGradient id="fz73" gradientUnits="userSpaceOnUse" x1="1438.9" y1="463.9" x2="1397.7" y2="368.7"><stop offset="0.000" stop-color="#ffffff"/><stop offset="0.200" stop-color="#abffc3"/><stop offset="0.400" stop-color="#6eff98"/><stop offset="0.600" stop-color="#40ff77"/><stop offset="0.800" stop-color="#1dff5e"/><stop offset="1.000" stop-color="#00ff49"/></linearGradient><linearGradient id="fz74" gradientUnits="userSpaceOnUse" x1="1438.9" y1="463.9" x2="1395.4" y2="374.4"><stop offset="0.000" stop-color="#ffffff"/><stop offset="0.200" stop-color="#acffc6"/><stop offset="0.400" stop-color="#6fff9d"/><stop offset="0.600" stop-color="#41ff7d"/><stop offset="0.800" stop-color="#1dff64"/><stop offset="1.000" stop-color="#00ff50"/></linearGradient><linearGradient id="fz75" gradientUnits="userSpaceOnUse" x1="1438.9" y1="463.9" x2="1393.2" y2="380.2"><stop offset="0.000" stop-color="#ffffff"/><stop offset="0.200" stop-color="#adffc9"/><stop offset="0.400" stop-color="#71ffa2"/><stop offset="0.600" stop-color="#42ff83"/><stop offset="0.800" stop-color="#1eff6b"/><stop offset="1.000" stop-color="#00ff58"/></linearGradient><linearGradient id="fz76" gradientUnits="userSpaceOnUse" x1="1438.9" y1="463.9" x2="1391.0" y2="385.9"><stop offset="0.000" stop-color="#ffffff"/><stop offset="0.200" stop-color="#aeffcd"/><stop offset="0.400" stop-color="#72ffa7"/><stop offset="0.600" stop-color="#44ff8a"/><stop offset="0.800" stop-color="#1eff73"/><stop offset="1.000" stop-color="#00ff60"/></linearGradient><linearGradient id="fz77" gradientUnits="userSpaceOnUse" x1="1438.9" y1="463.9" x2="1388.8" y2="391.6"><stop offset="0.000" stop-color="#ffffff"/><stop offset="0.200" stop-color="#b0ffd0"/><stop offset="0.400" stop-color="#74ffac"/><stop offset="0.600" stop-color="#45ff91"/><stop offset="0.800" stop-color="#1fff7a"/><stop offset="1.000" stop-color="#00ff68"/></linearGradient><linearGradient id="fz78" gradientUnits="userSpaceOnUse" x1="1438.9" y1="463.9" x2="1386.6" y2="397.4"><stop offset="0.000" stop-color="#ffffff"/><stop offset="0.200" stop-color="#b1ffd3"/><stop offset="0.400" stop-color="#75ffb2"/><stop offset="0.600" stop-color="#46ff98"/><stop offset="0.800" stop-color="#20ff82"/><stop offset="1.000" stop-color="#00ff71"/></linearGradient><linearGradient id="fz79" gradientUnits="userSpaceOnUse" x1="1438.9" y1="463.9" x2="1384.4" y2="403.1"><stop offset="0.000" stop-color="#ffffff"/><stop offset="0.200" stop-color="#b2ffd7"/><stop offset="0.400" stop-color="#77ffb8"/><stop offset="0.600" stop-color="#47ff9f"/><stop offset="0.800" stop-color="#20ff8a"/><stop offset="1.000" stop-color="#00ff7a"/></linearGradient><linearGradient id="fz80" gradientUnits="userSpaceOnUse" x1="1438.9" y1="463.9" x2="1382.1" y2="408.8"><stop offset="0.000" stop-color="#ffffff"/><stop offset="0.200" stop-color="#b4ffda"/><stop offset="0.400" stop-color="#78ffbe"/><stop offset="0.600" stop-color="#48ffa6"/><stop offset="0.800" stop-color="#21ff93"/><stop offset="1.000" stop-color="#00ff83"/></linearGradient><linearGradient id="fz81" gradientUnits="userSpaceOnUse" x1="1438.9" y1="463.9" x2="1379.9" y2="414.6"><stop offset="0.000" stop-color="#ffffff"/><stop offset="0.200" stop-color="#b5ffde"/><stop offset="0.400" stop-color="#7affc3"/><stop offset="0.600" stop-color="#4affae"/><stop offset="0.800" stop-color="#22ff9c"/><stop offset="1.000" stop-color="#00ff8d"/></linearGradient><linearGradient id="fz82" gradientUnits="userSpaceOnUse" x1="1438.9" y1="463.9" x2="1377.7" y2="420.3"><stop offset="0.000" stop-color="#ffffff"/><stop offset="0.200" stop-color="#b6ffe1"/><stop offset="0.400" stop-color="#7cffca"/><stop offset="0.600" stop-color="#4bffb6"/><stop offset="0.800" stop-color="#23ffa5"/><stop offset="1.000" stop-color="#00ff97"/></linearGradient><linearGradient id="fz83" gradientUnits="userSpaceOnUse" x1="1438.9" y1="463.9" x2="1375.5" y2="426.0"><stop offset="0.000" stop-color="#ffffff"/><stop offset="0.200" stop-color="#b8ffe5"/><stop offset="0.400" stop-color="#7dffd0"/><stop offset="0.600" stop-color="#4dffbe"/><stop offset="0.800" stop-color="#23ffaf"/><stop offset="1.000" stop-color="#00ffa3"/></linearGradient><linearGradient id="fz84" gradientUnits="userSpaceOnUse" x1="1438.9" y1="463.9" x2="1373.3" y2="431.8"><stop offset="0.000" stop-color="#ffffff"/><stop offset="0.200" stop-color="#b9ffe9"/><stop offset="0.400" stop-color="#7fffd6"/><stop offset="0.600" stop-color="#4effc7"/><stop offset="0.800" stop-color="#24ffba"/><stop offset="1.000" stop-color="#00ffae"/></linearGradient><linearGradient id="fz85" gradientUnits="userSpaceOnUse" x1="1438.9" y1="463.9" x2="1371.1" y2="437.5"><stop offset="0.000" stop-color="#ffffff"/><stop offset="0.200" stop-color="#bbffed"/><stop offset="0.400" stop-color="#81ffdd"/><stop offset="0.600" stop-color="#50ffd0"/><stop offset="0.800" stop-color="#25ffc5"/><stop offset="1.000" stop-color="#00ffbb"/></linearGradient><linearGradient id="fz86" gradientUnits="userSpaceOnUse" x1="1438.9" y1="463.9" x2="1368.8" y2="443.2"><stop offset="0.000" stop-color="#ffffff"/><stop offset="0.200" stop-color="#bcfff0"/><stop offset="0.400" stop-color="#83ffe4"/><stop offset="0.600" stop-color="#51ffd9"/><stop offset="0.800" stop-color="#26ffd0"/><stop offset="1.000" stop-color="#00ffc8"/></linearGradient><linearGradient id="fz87" gradientUnits="userSpaceOnUse" x1="1438.9" y1="463.9" x2="1366.6" y2="449.0"><stop offset="0.000" stop-color="#ffffff"/><stop offset="0.200" stop-color="#befff4"/><stop offset="0.400" stop-color="#85ffeb"/><stop offset="0.600" stop-color="#53ffe3"/><stop offset="0.800" stop-color="#27ffdc"/><stop offset="1.000" stop-color="#00ffd6"/></linearGradient><linearGradient id="fz88" gradientUnits="userSpaceOnUse" x1="1438.9" y1="463.9" x2="1364.4" y2="454.7"><stop offset="0.000" stop-color="#ffffff"/><stop offset="0.200" stop-color="#bffff8"/><stop offset="0.400" stop-color="#87fff2"/><stop offset="0.600" stop-color="#55ffed"/><stop offset="0.800" stop-color="#28ffe9"/><stop offset="1.000" stop-color="#00ffe4"/></linearGradient><linearGradient id="fz89" gradientUnits="userSpaceOnUse" x1="1438.9" y1="463.9" x2="1362.2" y2="460.4"><stop offset="0.000" stop-color="#ffffff"/><stop offset="0.200" stop-color="#c1fffc"/><stop offset="0.400" stop-color="#89fffa"/><stop offset="0.600" stop-color="#57fff8"/><stop offset="0.800" stop-color="#29fff6"/><stop offset="1.000" stop-color="#00fff4"/></linearGradient><linearGradient id="fz90" gradientUnits="userSpaceOnUse" x1="1438.9" y1="463.9" x2="1360.0" y2="466.2"><stop offset="0.000" stop-color="#ffffff"/><stop offset="0.200" stop-color="#c1feff"/><stop offset="0.400" stop-color="#89fcff"/><stop offset="0.600" stop-color="#57fbff"/><stop offset="0.800" stop-color="#2afaff"/><stop offset="1.000" stop-color="#00f9ff"/></linearGradient><linearGradient id="fz91" gradientUnits="userSpaceOnUse" x1="1438.9" y1="463.9" x2="1357.7" y2="471.9"><stop offset="0.000" stop-color="#ffffff"/><stop offset="0.200" stop-color="#c0faff"/><stop offset="0.400" stop-color="#87f5ff"/><stop offset="0.600" stop-color="#55f0ff"/><stop offset="0.800" stop-color="#28edff"/><stop offset="1.000" stop-color="#00e9ff"/></linearGradient><linearGradient id="fz92" gradientUnits="userSpaceOnUse" x1="1438.9" y1="463.9" x2="1355.5" y2="477.6"><stop offset="0.000" stop-color="#ffffff"/><stop offset="0.200" stop-color="#bef6ff"/><stop offset="0.400" stop-color="#85edff"/><stop offset="0.600" stop-color="#54e6ff"/><stop offset="0.800" stop-color="#27e0ff"/><stop offset="1.000" stop-color="#00daff"/></linearGradient><linearGradient id="fz93" gradientUnits="userSpaceOnUse" x1="1438.9" y1="463.9" x2="1353.3" y2="483.4"><stop offset="0.000" stop-color="#ffffff"/><stop offset="0.200" stop-color="#bdf2ff"/><stop offset="0.400" stop-color="#83e6ff"/><stop offset="0.600" stop-color="#52dcff"/><stop offset="0.800" stop-color="#26d3ff"/><stop offset="1.000" stop-color="#00ccff"/></linearGradient><linearGradient id="fz94" gradientUnits="userSpaceOnUse" x1="1438.9" y1="463.9" x2="1351.1" y2="489.1"><stop offset="0.000" stop-color="#ffffff"/><stop offset="0.200" stop-color="#bbeeff"/><stop offset="0.400" stop-color="#82dfff"/><stop offset="0.600" stop-color="#50d3ff"/><stop offset="0.800" stop-color="#25c8ff"/><stop offset="1.000" stop-color="#00beff"/></linearGradient><linearGradient id="fz95" gradientUnits="userSpaceOnUse" x1="1438.9" y1="463.9" x2="1348.9" y2="494.8"><stop offset="0.000" stop-color="#ffffff"/><stop offset="0.200" stop-color="#baeaff"/><stop offset="0.400" stop-color="#80d8ff"/><stop offset="0.600" stop-color="#4fcaff"/><stop offset="0.800" stop-color="#25bdff"/><stop offset="1.000" stop-color="#00b2ff"/></linearGradient><linearGradient id="fz96" gradientUnits="userSpaceOnUse" x1="1438.9" y1="463.9" x2="1346.7" y2="500.6"><stop offset="0.000" stop-color="#ffffff"/><stop offset="0.200" stop-color="#b8e6ff"/><stop offset="0.400" stop-color="#7ed2ff"/><stop offset="0.600" stop-color="#4dc1ff"/><stop offset="0.800" stop-color="#24b2ff"/><stop offset="1.000" stop-color="#00a6ff"/></linearGradient><linearGradient id="fz97" gradientUnits="userSpaceOnUse" x1="1438.9" y1="463.9" x2="1344.4" y2="506.3"><stop offset="0.000" stop-color="#ffffff"/><stop offset="0.200" stop-color="#b7e3ff"/><stop offset="0.400" stop-color="#7cccff"/><stop offset="0.600" stop-color="#4cb8ff"/><stop offset="0.800" stop-color="#23a8ff"/><stop offset="1.000" stop-color="#009bff"/></linearGradient><linearGradient id="fz98" gradientUnits="userSpaceOnUse" x1="1438.9" y1="463.9" x2="1342.2" y2="512.0"><stop offset="0.000" stop-color="#ffffff"/><stop offset="0.200" stop-color="#b5dfff"/><stop offset="0.400" stop-color="#7bc5ff"/><stop offset="0.600" stop-color="#4ab0ff"/><stop offset="0.800" stop-color="#229fff"/><stop offset="1.000" stop-color="#0090ff"/></linearGradient><linearGradient id="fz99" gradientUnits="userSpaceOnUse" x1="1438.9" y1="463.9" x2="1340.0" y2="517.8"><stop offset="0.000" stop-color="#ffffff"/><stop offset="0.200" stop-color="#b4dbff"/><stop offset="0.400" stop-color="#79bfff"/><stop offset="0.600" stop-color="#49a8ff"/><stop offset="0.800" stop-color="#2196ff"/><stop offset="1.000" stop-color="#0086ff"/></linearGradient><linearGradient id="fz100" gradientUnits="userSpaceOnUse" x1="1438.9" y1="463.9" x2="1337.8" y2="523.5"><stop offset="0.000" stop-color="#ffffff"/><stop offset="0.200" stop-color="#b3d8ff"/><stop offset="0.400" stop-color="#77b9ff"/><stop offset="0.600" stop-color="#48a1ff"/><stop offset="0.800" stop-color="#218dff"/><stop offset="1.000" stop-color="#007cff"/></linearGradient><linearGradient id="fz101" gradientUnits="userSpaceOnUse" x1="1438.9" y1="463.9" x2="1335.6" y2="529.2"><stop offset="0.000" stop-color="#ffffff"/><stop offset="0.200" stop-color="#b1d4ff"/><stop offset="0.400" stop-color="#76b4ff"/><stop offset="0.600" stop-color="#469aff"/><stop offset="0.800" stop-color="#2084ff"/><stop offset="1.000" stop-color="#0073ff"/></linearGradient><linearGradient id="fz102" gradientUnits="userSpaceOnUse" x1="1438.9" y1="463.9" x2="1333.4" y2="535.0"><stop offset="0.000" stop-color="#ffffff"/><stop offset="0.200" stop-color="#b0d1ff"/><stop offset="0.400" stop-color="#74aeff"/><stop offset="0.600" stop-color="#4593ff"/><stop offset="0.800" stop-color="#1f7cff"/><stop offset="1.000" stop-color="#006aff"/></linearGradient><linearGradient id="fz103" gradientUnits="userSpaceOnUse" x1="1438.9" y1="463.9" x2="1331.1" y2="540.7"><stop offset="0.000" stop-color="#ffffff"/><stop offset="0.200" stop-color="#afceff"/><stop offset="0.400" stop-color="#73a9ff"/><stop offset="0.600" stop-color="#448cff"/><stop offset="0.800" stop-color="#1f75ff"/><stop offset="1.000" stop-color="#0062ff"/></linearGradient><linearGradient id="fz104" gradientUnits="userSpaceOnUse" x1="1438.9" y1="463.9" x2="1328.9" y2="546.4"><stop offset="0.000" stop-color="#ffffff"/><stop offset="0.200" stop-color="#aecaff"/><stop offset="0.400" stop-color="#71a3ff"/><stop offset="0.600" stop-color="#4385ff"/><stop offset="0.800" stop-color="#1e6dff"/><stop offset="1.000" stop-color="#005aff"/></linearGradient><linearGradient id="fz105" gradientUnits="userSpaceOnUse" x1="1438.9" y1="463.9" x2="1326.7" y2="552.2"><stop offset="0.000" stop-color="#ffffff"/><stop offset="0.200" stop-color="#acc7ff"/><stop offset="0.400" stop-color="#709eff"/><stop offset="0.600" stop-color="#427fff"/><stop offset="0.800" stop-color="#1d66ff"/><stop offset="1.000" stop-color="#0052ff"/></linearGradient><linearGradient id="fz106" gradientUnits="userSpaceOnUse" x1="1438.9" y1="463.9" x2="1324.5" y2="557.9"><stop offset="0.000" stop-color="#ffffff"/><stop offset="0.200" stop-color="#abc4ff"/><stop offset="0.400" stop-color="#6f99ff"/><stop offset="0.600" stop-color="#4179ff"/><stop offset="0.800" stop-color="#1d5fff"/><stop offset="1.000" stop-color="#004bff"/></linearGradient><linearGradient id="fz107" gradientUnits="userSpaceOnUse" x1="1438.9" y1="463.9" x2="1322.3" y2="563.6"><stop offset="0.000" stop-color="#ffffff"/><stop offset="0.200" stop-color="#aac1ff"/><stop offset="0.400" stop-color="#6d94ff"/><stop offset="0.600" stop-color="#4073ff"/><stop offset="0.800" stop-color="#1c59ff"/><stop offset="1.000" stop-color="#0044ff"/></linearGradient><linearGradient id="fz108" gradientUnits="userSpaceOnUse" x1="1438.9" y1="463.9" x2="1320.1" y2="569.4"><stop offset="0.000" stop-color="#ffffff"/><stop offset="0.200" stop-color="#a9bdff"/><stop offset="0.400" stop-color="#6c8fff"/><stop offset="0.600" stop-color="#3f6dff"/><stop offset="0.800" stop-color="#1c52ff"/><stop offset="1.000" stop-color="#003dff"/></linearGradient><linearGradient id="fz109" gradientUnits="userSpaceOnUse" x1="1438.9" y1="463.9" x2="1317.8" y2="575.1"><stop offset="0.000" stop-color="#ffffff"/><stop offset="0.200" stop-color="#a8baff"/><stop offset="0.400" stop-color="#6b8bff"/><stop offset="0.600" stop-color="#3e67ff"/><stop offset="0.800" stop-color="#1b4cff"/><stop offset="1.000" stop-color="#0037ff"/></linearGradient><linearGradient id="fz110" gradientUnits="userSpaceOnUse" x1="1438.9" y1="463.9" x2="1315.6" y2="580.8"><stop offset="0.000" stop-color="#ffffff"/><stop offset="0.200" stop-color="#a7b7ff"/><stop offset="0.400" stop-color="#6a86ff"/><stop offset="0.600" stop-color="#3d62ff"/><stop offset="0.800" stop-color="#1b46ff"/><stop offset="1.000" stop-color="#0030ff"/></linearGradient><linearGradient id="fz111" gradientUnits="userSpaceOnUse" x1="1438.9" y1="463.9" x2="1313.4" y2="586.5"><stop offset="0.000" stop-color="#ffffff"/><stop offset="0.200" stop-color="#a5b4ff"/><stop offset="0.400" stop-color="#6881ff"/><stop offset="0.600" stop-color="#3c5cff"/><stop offset="0.800" stop-color="#1a40ff"/><stop offset="1.000" stop-color="#002bff"/></linearGradient><linearGradient id="fz112" gradientUnits="userSpaceOnUse" x1="1438.9" y1="463.9" x2="1311.2" y2="592.3"><stop offset="0.000" stop-color="#ffffff"/><stop offset="0.200" stop-color="#a4b1ff"/><stop offset="0.400" stop-color="#677dff"/><stop offset="0.600" stop-color="#3b57ff"/><stop offset="0.800" stop-color="#1a3bff"/><stop offset="1.000" stop-color="#0025ff"/></linearGradient><linearGradient id="fz113" gradientUnits="userSpaceOnUse" x1="1438.9" y1="463.9" x2="1309.0" y2="598.0"><stop offset="0.000" stop-color="#ffffff"/><stop offset="0.200" stop-color="#a3aeff"/><stop offset="0.400" stop-color="#6679ff"/><stop offset="0.600" stop-color="#3a52ff"/><stop offset="0.800" stop-color="#1936ff"/><stop offset="1.000" stop-color="#001fff"/></linearGradient><linearGradient id="fz114" gradientUnits="userSpaceOnUse" x1="1438.9" y1="463.9" x2="1306.7" y2="603.7"><stop offset="0.000" stop-color="#ffffff"/><stop offset="0.200" stop-color="#a2acff"/><stop offset="0.400" stop-color="#6575ff"/><stop offset="0.600" stop-color="#394eff"/><stop offset="0.800" stop-color="#1931ff"/><stop offset="1.000" stop-color="#001aff"/></linearGradient><linearGradient id="fz115" gradientUnits="userSpaceOnUse" x1="1438.9" y1="463.9" x2="1304.5" y2="609.5"><stop offset="0.000" stop-color="#ffffff"/><stop offset="0.200" stop-color="#a1a9ff"/><stop offset="0.400" stop-color="#6470ff"/><stop offset="0.600" stop-color="#3949ff"/><stop offset="0.800" stop-color="#192cff"/><stop offset="1.000" stop-color="#0015ff"/></linearGradient><linearGradient id="fz116" gradientUnits="userSpaceOnUse" x1="1438.9" y1="463.9" x2="1302.3" y2="615.2"><stop offset="0.000" stop-color="#ffffff"/><stop offset="0.200" stop-color="#a0a6ff"/><stop offset="0.400" stop-color="#636cff"/><stop offset="0.600" stop-color="#3844ff"/><stop offset="0.800" stop-color="#1827ff"/><stop offset="1.000" stop-color="#0010ff"/></linearGradient><linearGradient id="fz117" gradientUnits="userSpaceOnUse" x1="1438.9" y1="463.9" x2="1300.1" y2="620.9"><stop offset="0.000" stop-color="#ffffff"/><stop offset="0.200" stop-color="#9fa3ff"/><stop offset="0.400" stop-color="#6268ff"/><stop offset="0.600" stop-color="#3740ff"/><stop offset="0.800" stop-color="#1822ff"/><stop offset="1.000" stop-color="#000bff"/></linearGradient><linearGradient id="fz118" gradientUnits="userSpaceOnUse" x1="1438.9" y1="463.9" x2="1297.9" y2="626.7"><stop offset="0.000" stop-color="#ffffff"/><stop offset="0.200" stop-color="#9ea0ff"/><stop offset="0.400" stop-color="#6165ff"/><stop offset="0.600" stop-color="#363cff"/><stop offset="0.800" stop-color="#181eff"/><stop offset="1.000" stop-color="#0007ff"/></linearGradient><linearGradient id="fz119" gradientUnits="userSpaceOnUse" x1="1438.9" y1="463.9" x2="1295.7" y2="632.4"><stop offset="0.000" stop-color="#ffffff"/><stop offset="0.200" stop-color="#9d9eff"/><stop offset="0.400" stop-color="#6061ff"/><stop offset="0.600" stop-color="#3637ff"/><stop offset="0.800" stop-color="#1719ff"/><stop offset="1.000" stop-color="#0002ff"/></linearGradient><linearGradient id="fz120" gradientUnits="userSpaceOnUse" x1="1438.9" y1="463.9" x2="1298.2" y2="633.8"><stop offset="0.000" stop-color="#ffffff"/><stop offset="0.200" stop-color="#9e9dff"/><stop offset="0.400" stop-color="#6260ff"/><stop offset="0.600" stop-color="#3936ff"/><stop offset="0.800" stop-color="#1b17ff"/><stop offset="1.000" stop-color="#0400ff"/></linearGradient><linearGradient id="fz121" gradientUnits="userSpaceOnUse" x1="1438.9" y1="463.9" x2="1305.4" y2="631.0"><stop offset="0.000" stop-color="#ffffff"/><stop offset="0.200" stop-color="#a29eff"/><stop offset="0.400" stop-color="#6861ff"/><stop offset="0.600" stop-color="#4036ff"/><stop offset="0.800" stop-color="#2318ff"/><stop offset="1.000" stop-color="#0c00ff"/></linearGradient><linearGradient id="fz122" gradientUnits="userSpaceOnUse" x1="1438.9" y1="463.9" x2="1312.7" y2="628.1"><stop offset="0.000" stop-color="#ffffff"/><stop offset="0.200" stop-color="#a79fff"/><stop offset="0.400" stop-color="#6e62ff"/><stop offset="0.600" stop-color="#4737ff"/><stop offset="0.800" stop-color="#2b18ff"/><stop offset="1.000" stop-color="#1500ff"/></linearGradient><linearGradient id="fz123" gradientUnits="userSpaceOnUse" x1="1438.9" y1="463.9" x2="1319.9" y2="625.2"><stop offset="0.000" stop-color="#ffffff"/><stop offset="0.200" stop-color="#aba0ff"/><stop offset="0.400" stop-color="#7563ff"/><stop offset="0.600" stop-color="#4f38ff"/><stop offset="0.800" stop-color="#3318ff"/><stop offset="1.000" stop-color="#1e00ff"/></linearGradient><linearGradient id="fz124" gradientUnits="userSpaceOnUse" x1="1438.9" y1="463.9" x2="1327.1" y2="622.4"><stop offset="0.000" stop-color="#ffffff"/><stop offset="0.200" stop-color="#afa1ff"/><stop offset="0.400" stop-color="#7b64ff"/><stop offset="0.600" stop-color="#5739ff"/><stop offset="0.800" stop-color="#3c19ff"/><stop offset="1.000" stop-color="#2700ff"/></linearGradient><linearGradient id="fz125" gradientUnits="userSpaceOnUse" x1="1438.9" y1="463.9" x2="1334.4" y2="619.5"><stop offset="0.000" stop-color="#ffffff"/><stop offset="0.200" stop-color="#b4a2ff"/><stop offset="0.400" stop-color="#8265ff"/><stop offset="0.600" stop-color="#5f39ff"/><stop offset="0.800" stop-color="#4419ff"/><stop offset="1.000" stop-color="#3000ff"/></linearGradient><linearGradient id="fz126" gradientUnits="userSpaceOnUse" x1="1438.9" y1="463.9" x2="1341.6" y2="616.6"><stop offset="0.000" stop-color="#ffffff"/><stop offset="0.200" stop-color="#b8a3ff"/><stop offset="0.400" stop-color="#8966ff"/><stop offset="0.600" stop-color="#673aff"/><stop offset="0.800" stop-color="#4e19ff"/><stop offset="1.000" stop-color="#3a00ff"/></linearGradient><linearGradient id="fz127" gradientUnits="userSpaceOnUse" x1="1438.9" y1="463.9" x2="1348.9" y2="613.8"><stop offset="0.000" stop-color="#ffffff"/><stop offset="0.200" stop-color="#bca4ff"/><stop offset="0.400" stop-color="#9067ff"/><stop offset="0.600" stop-color="#6f3bff"/><stop offset="0.800" stop-color="#571aff"/><stop offset="1.000" stop-color="#4400ff"/></linearGradient><linearGradient id="fz128" gradientUnits="userSpaceOnUse" x1="1438.9" y1="463.9" x2="1356.1" y2="610.9"><stop offset="0.000" stop-color="#ffffff"/><stop offset="0.200" stop-color="#c1a5ff"/><stop offset="0.400" stop-color="#9768ff"/><stop offset="0.600" stop-color="#783cff"/><stop offset="0.800" stop-color="#611aff"/><stop offset="1.000" stop-color="#4f00ff"/></linearGradient><linearGradient id="fz129" gradientUnits="userSpaceOnUse" x1="1438.9" y1="463.9" x2="1363.4" y2="608.0"><stop offset="0.000" stop-color="#ffffff"/><stop offset="0.200" stop-color="#c6a7ff"/><stop offset="0.400" stop-color="#9e6aff"/><stop offset="0.600" stop-color="#813dff"/><stop offset="0.800" stop-color="#6b1bff"/><stop offset="1.000" stop-color="#5a00ff"/></linearGradient><linearGradient id="fz130" gradientUnits="userSpaceOnUse" x1="1438.9" y1="463.9" x2="1370.6" y2="605.2"><stop offset="0.000" stop-color="#ffffff"/><stop offset="0.200" stop-color="#caa8ff"/><stop offset="0.400" stop-color="#a56bff"/><stop offset="0.600" stop-color="#8a3eff"/><stop offset="0.800" stop-color="#761bff"/><stop offset="1.000" stop-color="#6500ff"/></linearGradient><linearGradient id="fz131" gradientUnits="userSpaceOnUse" x1="1438.9" y1="463.9" x2="1377.9" y2="602.3"><stop offset="0.000" stop-color="#ffffff"/><stop offset="0.200" stop-color="#cfa9ff"/><stop offset="0.400" stop-color="#ad6cff"/><stop offset="0.600" stop-color="#943fff"/><stop offset="0.800" stop-color="#801cff"/><stop offset="1.000" stop-color="#7100ff"/></linearGradient><linearGradient id="fz132" gradientUnits="userSpaceOnUse" x1="1438.9" y1="463.9" x2="1385.1" y2="599.4"><stop offset="0.000" stop-color="#ffffff"/><stop offset="0.200" stop-color="#d4aaff"/><stop offset="0.400" stop-color="#b56dff"/><stop offset="0.600" stop-color="#9e40ff"/><stop offset="0.800" stop-color="#8c1cff"/><stop offset="1.000" stop-color="#7d00ff"/></linearGradient><linearGradient id="fz133" gradientUnits="userSpaceOnUse" x1="1438.9" y1="463.9" x2="1392.3" y2="596.6"><stop offset="0.000" stop-color="#ffffff"/><stop offset="0.200" stop-color="#d9abff"/><stop offset="0.400" stop-color="#bd6fff"/><stop offset="0.600" stop-color="#a841ff"/><stop offset="0.800" stop-color="#981dff"/><stop offset="1.000" stop-color="#8a00ff"/></linearGradient><linearGradient id="fz134" gradientUnits="userSpaceOnUse" x1="1438.9" y1="463.9" x2="1399.6" y2="593.7"><stop offset="0.000" stop-color="#ffffff"/><stop offset="0.200" stop-color="#deacff"/><stop offset="0.400" stop-color="#c570ff"/><stop offset="0.600" stop-color="#b242ff"/><stop offset="0.800" stop-color="#a41dff"/><stop offset="1.000" stop-color="#9800ff"/></linearGradient><linearGradient id="fz135" gradientUnits="userSpaceOnUse" x1="1438.9" y1="463.9" x2="1406.8" y2="590.8"><stop offset="0.000" stop-color="#ffffff"/><stop offset="0.200" stop-color="#e3aeff"/><stop offset="0.400" stop-color="#ce71ff"/><stop offset="0.600" stop-color="#bd43ff"/><stop offset="0.800" stop-color="#b01eff"/><stop offset="1.000" stop-color="#a600ff"/></linearGradient><linearGradient id="fz136" gradientUnits="userSpaceOnUse" x1="1438.9" y1="463.9" x2="1414.1" y2="588.0"><stop offset="0.000" stop-color="#ffffff"/><stop offset="0.200" stop-color="#e8afff"/><stop offset="0.400" stop-color="#d673ff"/><stop offset="0.600" stop-color="#c944ff"/><stop offset="0.800" stop-color="#be1fff"/><stop offset="1.000" stop-color="#b500ff"/></linearGradient><linearGradient id="fz137" gradientUnits="userSpaceOnUse" x1="1438.9" y1="463.9" x2="1421.3" y2="585.1"><stop offset="0.000" stop-color="#ffffff"/><stop offset="0.200" stop-color="#edb0ff"/><stop offset="0.400" stop-color="#df74ff"/><stop offset="0.600" stop-color="#d445ff"/><stop offset="0.800" stop-color="#cb1fff"/><stop offset="1.000" stop-color="#c400ff"/></linearGradient><linearGradient id="fz138" gradientUnits="userSpaceOnUse" x1="1438.9" y1="463.9" x2="1428.6" y2="582.2"><stop offset="0.000" stop-color="#ffffff"/><stop offset="0.200" stop-color="#f2b1ff"/><stop offset="0.400" stop-color="#e876ff"/><stop offset="0.600" stop-color="#e046ff"/><stop offset="0.800" stop-color="#da20ff"/><stop offset="1.000" stop-color="#d400ff"/></linearGradient><linearGradient id="fz139" gradientUnits="userSpaceOnUse" x1="1438.9" y1="463.9" x2="1435.8" y2="579.4"><stop offset="0.000" stop-color="#ffffff"/><stop offset="0.200" stop-color="#f7b3ff"/><stop offset="0.400" stop-color="#f177ff"/><stop offset="0.600" stop-color="#ed48ff"/><stop offset="0.800" stop-color="#e921ff"/><stop offset="1.000" stop-color="#e500ff"/></linearGradient><linearGradient id="fz140" gradientUnits="userSpaceOnUse" x1="1438.9" y1="463.9" x2="1443.0" y2="576.5"><stop offset="0.000" stop-color="#ffffff"/><stop offset="0.200" stop-color="#fdb4ff"/><stop offset="0.400" stop-color="#fb79ff"/><stop offset="0.600" stop-color="#f949ff"/><stop offset="0.800" stop-color="#f821ff"/><stop offset="1.000" stop-color="#f700ff"/></linearGradient><linearGradient id="fz141" gradientUnits="userSpaceOnUse" x1="1438.9" y1="463.9" x2="1450.3" y2="573.7"><stop offset="0.000" stop-color="#ffffff"/><stop offset="0.200" stop-color="#ffb3fc"/><stop offset="0.400" stop-color="#ff78f9"/><stop offset="0.600" stop-color="#ff48f7"/><stop offset="0.800" stop-color="#ff21f6"/><stop offset="1.000" stop-color="#ff00f4"/></linearGradient><linearGradient id="fz142" gradientUnits="userSpaceOnUse" x1="1438.9" y1="463.9" x2="1457.5" y2="570.8"><stop offset="0.000" stop-color="#ffffff"/><stop offset="0.200" stop-color="#ffb1f7"/><stop offset="0.400" stop-color="#ff75f0"/><stop offset="0.600" stop-color="#ff46eb"/><stop offset="0.800" stop-color="#ff20e7"/><stop offset="1.000" stop-color="#ff00e4"/></linearGradient><linearGradient id="fz143" gradientUnits="userSpaceOnUse" x1="1438.9" y1="463.9" x2="1464.8" y2="567.9"><stop offset="0.000" stop-color="#ffffff"/><stop offset="0.200" stop-color="#ffaef1"/><stop offset="0.400" stop-color="#ff72e7"/><stop offset="0.600" stop-color="#ff44df"/><stop offset="0.800" stop-color="#ff1ed9"/><stop offset="1.000" stop-color="#ff00d4"/></linearGradient><linearGradient id="fz144" gradientUnits="userSpaceOnUse" x1="1438.9" y1="463.9" x2="1472.0" y2="565.1"><stop offset="0.000" stop-color="#ffffff"/><stop offset="0.200" stop-color="#ffacec"/><stop offset="0.400" stop-color="#ff70df"/><stop offset="0.600" stop-color="#ff42d5"/><stop offset="0.800" stop-color="#ff1dcc"/><stop offset="1.000" stop-color="#ff00c6"/></linearGradient><linearGradient id="fz145" gradientUnits="userSpaceOnUse" x1="1438.9" y1="463.9" x2="1479.3" y2="562.2"><stop offset="0.000" stop-color="#ffffff"/><stop offset="0.200" stop-color="#ffaae8"/><stop offset="0.400" stop-color="#ff6dd7"/><stop offset="0.600" stop-color="#ff40ca"/><stop offset="0.800" stop-color="#ff1cc0"/><stop offset="1.000" stop-color="#ff00b9"/></linearGradient><linearGradient id="fz146" gradientUnits="userSpaceOnUse" x1="1438.9" y1="463.9" x2="1486.5" y2="559.3"><stop offset="0.000" stop-color="#ffffff"/><stop offset="0.200" stop-color="#ffa8e3"/><stop offset="0.400" stop-color="#ff6bcf"/><stop offset="0.600" stop-color="#ff3ec1"/><stop offset="0.800" stop-color="#ff1bb5"/><stop offset="1.000" stop-color="#ff00ad"/></linearGradient><linearGradient id="fz147" gradientUnits="userSpaceOnUse" x1="1438.9" y1="463.9" x2="1493.8" y2="556.5"><stop offset="0.000" stop-color="#ffffff"/><stop offset="0.200" stop-color="#ffa6de"/><stop offset="0.400" stop-color="#ff68c8"/><stop offset="0.600" stop-color="#ff3cb7"/><stop offset="0.800" stop-color="#ff1aab"/><stop offset="1.000" stop-color="#ff00a1"/></linearGradient><linearGradient id="fz148" gradientUnits="userSpaceOnUse" x1="1438.9" y1="463.9" x2="1501.0" y2="553.6"><stop offset="0.000" stop-color="#ffffff"/><stop offset="0.200" stop-color="#ffa3da"/><stop offset="0.400" stop-color="#ff66c1"/><stop offset="0.600" stop-color="#ff3aaf"/><stop offset="0.800" stop-color="#ff1aa1"/><stop offset="1.000" stop-color="#ff0097"/></linearGradient><linearGradient id="fz149" gradientUnits="userSpaceOnUse" x1="1438.9" y1="463.9" x2="1508.2" y2="550.7"><stop offset="0.000" stop-color="#ffffff"/><stop offset="0.200" stop-color="#ffa1d5"/><stop offset="0.400" stop-color="#ff64ba"/><stop offset="0.600" stop-color="#ff39a7"/><stop offset="0.800" stop-color="#ff1998"/><stop offset="1.000" stop-color="#ff008d"/></linearGradient><linearGradient id="fz150" gradientUnits="userSpaceOnUse" x1="1438.9" y1="463.9" x2="1515.5" y2="547.9"><stop offset="0.000" stop-color="#ffffff"/><stop offset="0.200" stop-color="#ff9fd1"/><stop offset="0.400" stop-color="#ff62b3"/><stop offset="0.600" stop-color="#ff379f"/><stop offset="0.800" stop-color="#ff1890"/><stop offset="1.000" stop-color="#ff0084"/></linearGradient><linearGradient id="fz151" gradientUnits="userSpaceOnUse" x1="1438.9" y1="463.9" x2="1522.7" y2="545.0"><stop offset="0.000" stop-color="#ffffff"/><stop offset="0.200" stop-color="#ff9dcd"/><stop offset="0.400" stop-color="#ff60ad"/><stop offset="0.600" stop-color="#ff3697"/><stop offset="0.800" stop-color="#ff1788"/><stop offset="1.000" stop-color="#ff007c"/></linearGradient><linearGradient id="fz152" gradientUnits="userSpaceOnUse" x1="1438.9" y1="463.9" x2="1530.0" y2="542.1"><stop offset="0.000" stop-color="#ffffff"/><stop offset="0.200" stop-color="#ff9cc9"/><stop offset="0.400" stop-color="#ff5ea7"/><stop offset="0.600" stop-color="#ff3590"/><stop offset="0.800" stop-color="#ff1780"/><stop offset="1.000" stop-color="#ff0074"/></linearGradient><linearGradient id="fz153" gradientUnits="userSpaceOnUse" x1="1438.9" y1="463.9" x2="1537.2" y2="539.3"><stop offset="0.000" stop-color="#ffffff"/><stop offset="0.200" stop-color="#ff9ac5"/><stop offset="0.400" stop-color="#ff5da1"/><stop offset="0.600" stop-color="#ff348a"/><stop offset="0.800" stop-color="#ff1679"/><stop offset="1.000" stop-color="#ff006c"/></linearGradient><linearGradient id="fz154" gradientUnits="userSpaceOnUse" x1="1438.9" y1="463.9" x2="1544.5" y2="536.4"><stop offset="0.000" stop-color="#ffffff"/><stop offset="0.200" stop-color="#ff98c1"/><stop offset="0.400" stop-color="#ff5b9c"/><stop offset="0.600" stop-color="#ff3283"/><stop offset="0.800" stop-color="#ff1672"/><stop offset="1.000" stop-color="#ff0065"/></linearGradient><linearGradient id="fz155" gradientUnits="userSpaceOnUse" x1="1438.9" y1="463.9" x2="1551.7" y2="533.5"><stop offset="0.000" stop-color="#ffffff"/><stop offset="0.200" stop-color="#ff96bd"/><stop offset="0.400" stop-color="#ff5996"/><stop offset="0.600" stop-color="#ff317d"/><stop offset="0.800" stop-color="#ff156b"/><stop offset="1.000" stop-color="#ff005e"/></linearGradient><linearGradient id="fz156" gradientUnits="userSpaceOnUse" x1="1438.9" y1="463.9" x2="1558.9" y2="530.7"><stop offset="0.000" stop-color="#ffffff"/><stop offset="0.200" stop-color="#ff94b9"/><stop offset="0.400" stop-color="#ff5891"/><stop offset="0.600" stop-color="#ff3077"/><stop offset="0.800" stop-color="#ff1465"/><stop offset="1.000" stop-color="#ff0058"/></linearGradient><linearGradient id="fz157" gradientUnits="userSpaceOnUse" x1="1438.9" y1="463.9" x2="1566.2" y2="527.8"><stop offset="0.000" stop-color="#ffffff"/><stop offset="0.200" stop-color="#ff93b6"/><stop offset="0.400" stop-color="#ff568c"/><stop offset="0.600" stop-color="#ff2f72"/><stop offset="0.800" stop-color="#ff145f"/><stop offset="1.000" stop-color="#ff0052"/></linearGradient><linearGradient id="fz158" gradientUnits="userSpaceOnUse" x1="1438.9" y1="463.9" x2="1573.4" y2="524.9"><stop offset="0.000" stop-color="#ffffff"/><stop offset="0.200" stop-color="#ff91b2"/><stop offset="0.400" stop-color="#ff5487"/><stop offset="0.600" stop-color="#ff2e6d"/><stop offset="0.800" stop-color="#ff135a"/><stop offset="1.000" stop-color="#ff004c"/></linearGradient><linearGradient id="fz159" gradientUnits="userSpaceOnUse" x1="1438.9" y1="463.9" x2="1580.7" y2="522.1"><stop offset="0.000" stop-color="#ffffff"/><stop offset="0.200" stop-color="#ff90af"/><stop offset="0.400" stop-color="#ff5383"/><stop offset="0.600" stop-color="#ff2d67"/><stop offset="0.800" stop-color="#ff1355"/><stop offset="1.000" stop-color="#ff0047"/></linearGradient><linearGradient id="fz160" gradientUnits="userSpaceOnUse" x1="1438.9" y1="463.9" x2="1587.9" y2="519.2"><stop offset="0.000" stop-color="#ffffff"/><stop offset="0.200" stop-color="#ff8eab"/><stop offset="0.400" stop-color="#ff527e"/><stop offset="0.600" stop-color="#ff2c62"/><stop offset="0.800" stop-color="#ff1350"/><stop offset="1.000" stop-color="#ff0042"/></linearGradient><linearGradient id="fz161" gradientUnits="userSpaceOnUse" x1="1438.9" y1="463.9" x2="1595.2" y2="516.3"><stop offset="0.000" stop-color="#ffffff"/><stop offset="0.200" stop-color="#ff8ca8"/><stop offset="0.400" stop-color="#ff507a"/><stop offset="0.600" stop-color="#ff2b5e"/><stop offset="0.800" stop-color="#ff124b"/><stop offset="1.000" stop-color="#ff003d"/></linearGradient><linearGradient id="fz162" gradientUnits="userSpaceOnUse" x1="1438.9" y1="463.9" x2="1602.4" y2="513.5"><stop offset="0.000" stop-color="#ffffff"/><stop offset="0.200" stop-color="#ff8ba5"/><stop offset="0.400" stop-color="#ff4f76"/><stop offset="0.600" stop-color="#ff2a59"/><stop offset="0.800" stop-color="#ff1246"/><stop offset="1.000" stop-color="#ff0038"/></linearGradient><linearGradient id="fz163" gradientUnits="userSpaceOnUse" x1="1438.9" y1="463.9" x2="1609.7" y2="510.6"><stop offset="0.000" stop-color="#ffffff"/><stop offset="0.200" stop-color="#ff89a1"/><stop offset="0.400" stop-color="#ff4e72"/><stop offset="0.600" stop-color="#ff2a55"/><stop offset="0.800" stop-color="#ff1142"/><stop offset="1.000" stop-color="#ff0034"/></linearGradient><linearGradient id="fz164" gradientUnits="userSpaceOnUse" x1="1438.9" y1="463.9" x2="1616.9" y2="507.7"><stop offset="0.000" stop-color="#ffffff"/><stop offset="0.200" stop-color="#ff889e"/><stop offset="0.400" stop-color="#ff4d6e"/><stop offset="0.600" stop-color="#ff2951"/><stop offset="0.800" stop-color="#ff113d"/><stop offset="1.000" stop-color="#ff0030"/></linearGradient><linearGradient id="fz165" gradientUnits="userSpaceOnUse" x1="1438.9" y1="463.9" x2="1624.1" y2="504.9"><stop offset="0.000" stop-color="#ffffff"/><stop offset="0.200" stop-color="#ff879b"/><stop offset="0.400" stop-color="#ff4b6a"/><stop offset="0.600" stop-color="#ff284d"/><stop offset="0.800" stop-color="#ff1139"/><stop offset="1.000" stop-color="#ff002c"/></linearGradient><linearGradient id="fz166" gradientUnits="userSpaceOnUse" x1="1438.9" y1="463.9" x2="1631.4" y2="502.0"><stop offset="0.000" stop-color="#ffffff"/><stop offset="0.200" stop-color="#ff8598"/><stop offset="0.400" stop-color="#ff4a66"/><stop offset="0.600" stop-color="#ff2749"/><stop offset="0.800" stop-color="#ff1035"/><stop offset="1.000" stop-color="#ff0028"/></linearGradient><linearGradient id="fz167" gradientUnits="userSpaceOnUse" x1="1438.9" y1="463.9" x2="1638.6" y2="499.1"><stop offset="0.000" stop-color="#ffffff"/><stop offset="0.200" stop-color="#ff8495"/><stop offset="0.400" stop-color="#ff4963"/><stop offset="0.600" stop-color="#ff2745"/><stop offset="0.800" stop-color="#ff1032"/><stop offset="1.000" stop-color="#ff0024"/></linearGradient><linearGradient id="fz168" gradientUnits="userSpaceOnUse" x1="1438.9" y1="463.9" x2="1645.9" y2="496.3"><stop offset="0.000" stop-color="#ffffff"/><stop offset="0.200" stop-color="#ff8392"/><stop offset="0.400" stop-color="#ff485f"/><stop offset="0.600" stop-color="#ff2642"/><stop offset="0.800" stop-color="#ff102e"/><stop offset="1.000" stop-color="#ff0020"/></linearGradient><linearGradient id="fz169" gradientUnits="userSpaceOnUse" x1="1438.9" y1="463.9" x2="1653.1" y2="493.4"><stop offset="0.000" stop-color="#ffffff"/><stop offset="0.200" stop-color="#ff8190"/><stop offset="0.400" stop-color="#ff475c"/><stop offset="0.600" stop-color="#ff253e"/><stop offset="0.800" stop-color="#ff0f2b"/><stop offset="1.000" stop-color="#ff001d"/></linearGradient><linearGradient id="fz170" gradientUnits="userSpaceOnUse" x1="1438.9" y1="463.9" x2="1660.4" y2="490.5"><stop offset="0.000" stop-color="#ffffff"/><stop offset="0.200" stop-color="#ff808d"/><stop offset="0.400" stop-color="#ff4659"/><stop offset="0.600" stop-color="#ff253b"/><stop offset="0.800" stop-color="#ff0f27"/><stop offset="1.000" stop-color="#ff001a"/></linearGradient><linearGradient id="fz171" gradientUnits="userSpaceOnUse" x1="1438.9" y1="463.9" x2="1667.6" y2="487.7"><stop offset="0.000" stop-color="#ffffff"/><stop offset="0.200" stop-color="#ff7f8a"/><stop offset="0.400" stop-color="#ff4555"/><stop offset="0.600" stop-color="#ff2437"/><stop offset="0.800" stop-color="#ff0f24"/><stop offset="1.000" stop-color="#ff0017"/></linearGradient><linearGradient id="fz172" gradientUnits="userSpaceOnUse" x1="1438.9" y1="463.9" x2="1674.9" y2="484.8"><stop offset="0.000" stop-color="#ffffff"/><stop offset="0.200" stop-color="#ff7e87"/><stop offset="0.400" stop-color="#ff4452"/><stop offset="0.600" stop-color="#ff2334"/><stop offset="0.800" stop-color="#ff0f21"/><stop offset="1.000" stop-color="#ff0014"/></linearGradient><linearGradient id="fz173" gradientUnits="userSpaceOnUse" x1="1438.9" y1="463.9" x2="1682.1" y2="481.9"><stop offset="0.000" stop-color="#ffffff"/><stop offset="0.200" stop-color="#ff7c85"/><stop offset="0.400" stop-color="#ff434f"/><stop offset="0.600" stop-color="#ff2331"/><stop offset="0.800" stop-color="#ff0e1e"/><stop offset="1.000" stop-color="#ff0011"/></linearGradient><linearGradient id="fz174" gradientUnits="userSpaceOnUse" x1="1438.9" y1="463.9" x2="1689.3" y2="479.1"><stop offset="0.000" stop-color="#ffffff"/><stop offset="0.200" stop-color="#ff7b82"/><stop offset="0.400" stop-color="#ff424c"/><stop offset="0.600" stop-color="#ff222e"/><stop offset="0.800" stop-color="#ff0e1b"/><stop offset="1.000" stop-color="#ff000e"/></linearGradient><linearGradient id="fz175" gradientUnits="userSpaceOnUse" x1="1438.9" y1="463.9" x2="1696.6" y2="476.2"><stop offset="0.000" stop-color="#ffffff"/><stop offset="0.200" stop-color="#ff7a80"/><stop offset="0.400" stop-color="#ff4149"/><stop offset="0.600" stop-color="#ff222b"/><stop offset="0.800" stop-color="#ff0e18"/><stop offset="1.000" stop-color="#ff000b"/></linearGradient><linearGradient id="fz176" gradientUnits="userSpaceOnUse" x1="1438.9" y1="463.9" x2="1703.8" y2="473.3"><stop offset="0.000" stop-color="#ffffff"/><stop offset="0.200" stop-color="#ff797d"/><stop offset="0.400" stop-color="#ff4047"/><stop offset="0.600" stop-color="#ff2129"/><stop offset="0.800" stop-color="#ff0e16"/><stop offset="1.000" stop-color="#ff0008"/></linearGradient><linearGradient id="fz177" gradientUnits="userSpaceOnUse" x1="1438.9" y1="463.9" x2="1711.1" y2="470.5"><stop offset="0.000" stop-color="#ffffff"/><stop offset="0.200" stop-color="#ff787b"/><stop offset="0.400" stop-color="#ff4044"/><stop offset="0.600" stop-color="#ff2126"/><stop offset="0.800" stop-color="#ff0d13"/><stop offset="1.000" stop-color="#ff0006"/></linearGradient><linearGradient id="fz178" gradientUnits="userSpaceOnUse" x1="1438.9" y1="463.9" x2="1718.3" y2="467.6"><stop offset="0.000" stop-color="#ffffff"/><stop offset="0.200" stop-color="#ff7778"/><stop offset="0.400" stop-color="#ff3f41"/><stop offset="0.600" stop-color="#ff2023"/><stop offset="0.800" stop-color="#ff0d10"/><stop offset="1.000" stop-color="#ff0004"/></linearGradient><linearGradient id="fz179" gradientUnits="userSpaceOnUse" x1="1438.9" y1="463.9" x2="1725.6" y2="464.7"><stop offset="0.000" stop-color="#ffffff"/><stop offset="0.200" stop-color="#ff7676"/><stop offset="0.400" stop-color="#ff3e3f"/><stop offset="0.600" stop-color="#ff2021"/><stop offset="0.800" stop-color="#ff0d0e"/><stop offset="1.000" stop-color="#ff0001"/></linearGradient></defs>
<g clip-path="url(#locus)"><polygon points="1729.2,463.3 3761.4,458.8 3751.3,453.1 1727.9,462.6" fill="#990000" stroke="#990000" stroke-width="0.7"/><polygon points="1727.9,462.6 3751.3,453.1 3741.3,447.4 1726.7,461.9" fill="#990100" stroke="#990100" stroke-width="0.7"/><polygon points="1726.7,461.9 3741.3,447.4 3731.2,441.6 1725.4,461.1" fill="#990100" stroke="#990100" stroke-width="0.7"/><polygon points="1725.4,461.1 3731.2,441.6 3721.2,435.9 1724.2,460.4" fill="#990100" stroke="#990100" stroke-width="0.7"/><polygon points="1724.2,460.4 3721.2,435.9 3711.1,430.2 1722.9,459.7" fill="#990200" stroke="#990200" stroke-width="0.7"/><polygon points="1722.9,459.7 3711.1,430.2 3701.1,424.4 1721.6,459.0" fill="#990200" stroke="#990200" stroke-width="0.7"/><polygon points="1721.6,459.0 3701.1,424.4 3691.0,418.7 1720.4,458.3" fill="#990200" stroke="#990200" stroke-width="0.7"/><polygon points="1720.4,458.3 3691.0,418.7 3681.0,413.0 1719.1,457.6" fill="#990300" stroke="#990300" stroke-width="0.7"/><polygon points="1719.1,457.6 3681.0,413.0 3670.9,407.2 1717.9,456.8" fill="#990300" stroke="#990300" stroke-width="0.7"/><polygon points="1717.9,456.8 3670.9,407.2 3660.9,401.5 1716.6,456.1" fill="#990300" stroke="#990300" stroke-width="0.7"/><polygon points="1716.6,456.1 3660.9,401.5 3650.8,395.8 1715.4,455.4" fill="#990400" stroke="#990400" stroke-width="0.7"/><polygon points="1715.4,455.4 3650.8,395.8 3640.8,390.0 1714.1,454.7" fill="#990400" stroke="#990400" stroke-width="0.7"/><polygon points="1714.1,454.7 3640.8,390.0 3630.7,384.3 1712.8,454.0" fill="#990500" stroke="#990500" stroke-width="0.7"/><polygon points="1712.8,454.0 3630.7,384.3 3620.6,378.6 1711.6,453.3" fill="#990500" stroke="#990500" stroke-width="0.7"/><polygon points="1711.6,453.3 3620.6,378.6 3610.6,372.8 1710.3,452.5" fill="#990500" stroke="#990500" stroke-width="0.7"/><polygon points="1710.3,452.5 3610.6,372.8 3600.5,367.1 1709.1,451.8" fill="#990600" stroke="#990600" stroke-width="0.7"/><polygon points="1709.1,451.8 3600.5,367.1 3590.5,361.4 1707.8,451.1" fill="#990600" stroke="#990600" stroke-width="0.7"/><polygon points="1707.8,451.1 3590.5,361.4 3580.4,355.6 1706.6,450.4" fill="#990700" stroke="#990700" stroke-width="0.7"/><polygon points="1706.6,450.4 3580.4,355.6 3570.4,349.9 1705.3,449.7" fill="#990700" stroke="#990700" stroke-width="0.7"/><polygon points="1705.3,449.7 3570.4,349.9 3560.3,344.2 1704.0,449.0" fill="#990700" stroke="#990700" stroke-width="0.7"/><polygon points="1704.0,449.0 3560.3,344.2 3550.3,338.4 1702.8,448.2" fill="#990800" stroke="#990800" stroke-width="0.7"/><polygon points="1702.8,448.2 3550.3,338.4 3540.2,332.7 1701.5,447.5" fill="#990800" stroke="#990800" stroke-width="0.7"/><polygon points="1701.5,447.5 3540.2,332.7 3530.2,327.0 1700.3,446.8" fill="#990900" stroke="#990900" stroke-width="0.7"/><polygon points="1700.3,446.8 3530.2,327.0 3520.1,321.2 1699.0,446.1" fill="#990900" stroke="#990900" stroke-width="0.7"/><polygon points="1699.0,446.1 3520.1,321.2 3510.1,315.5 1697.8,445.4" fill="#990900" stroke="#990900" stroke-width="0.7"/><polygon points="1697.8,445.4 3510.1,315.5 3500.0,309.8 1696.5,444.7" fill="#990a00" stroke="#990a00" stroke-width="0.7"/><polygon points="1696.5,444.7 3500.0,309.8 3490.0,304.0 1695.3,443.9" fill="#990a00" stroke="#990a00" stroke-width="0.7"/><polygon points="1695.3,443.9 3490.0,304.0 3479.9,298.3 1694.0,443.2" fill="#990b00" stroke="#990b00" stroke-width="0.7"/><polygon points="1694.0,443.2 3479.9,298.3 3469.9,292.6 1692.7,442.5" fill="#990b00" stroke="#990b00" stroke-width="0.7"/><polygon points="1692.7,442.5 3469.9,292.6 3459.8,286.8 1691.5,441.8" fill="#990c00" stroke="#990c00" stroke-width="0.7"/><polygon points="1691.5,441.8 3459.8,286.8 3449.8,281.1 1690.2,441.1" fill="#990c00" stroke="#990c00" stroke-width="0.7"/><polygon points="1690.2,441.1 3449.8,281.1 3439.7,275.4 1689.0,440.4" fill="#990d00" stroke="#990d00" stroke-width="0.7"/><polygon points="1689.0,440.4 3439.7,275.4 3429.6,269.6 1687.7,439.6" fill="#990d00" stroke="#990d00" stroke-width="0.7"/><polygon points="1687.7,439.6 3429.6,269.6 3419.6,263.9 1686.5,438.9" fill="#990d00" stroke="#990d00" stroke-width="0.7"/><polygon points="1686.5,438.9 3419.6,263.9 3409.5,258.2 1685.2,438.2" fill="#990e00" stroke="#990e00" stroke-width="0.7"/><polygon points="1685.2,438.2 3409.5,258.2 3399.5,252.4 1683.9,437.5" fill="#990e00" stroke="#990e00" stroke-width="0.7"/><polygon points="1683.9,437.5 3399.5,252.4 3389.4,246.7 1682.7,436.8" fill="#990f00" stroke="#990f00" stroke-width="0.7"/><polygon points="1682.7,436.8 3389.4,246.7 3379.4,241.0 1681.4,436.1" fill="#990f00" stroke="#990f00" stroke-width="0.7"/><polygon points="1681.4,436.1 3379.4,241.0 3369.3,235.2 1680.2,435.3" fill="#991000" stroke="#991000" stroke-width="0.7"/><polygon points="1680.2,435.3 3369.3,235.2 3359.3,229.5 1678.9,434.6" fill="#991000" stroke="#991000" stroke-width="0.7"/><polygon points="1678.9,434.6 3359.3,229.5 3349.2,223.8 1677.7,433.9" fill="#991100" stroke="#991100" stroke-width="0.7"/><polygon points="1677.7,433.9 3349.2,223.8 3339.2,218.0 1676.4,433.2" fill="#991100" stroke="#991100" stroke-width="0.7"/><polygon points="1676.4,433.2 3339.2,218.0 3329.1,212.3 1675.1,432.5" fill="#991200" stroke="#991200" stroke-width="0.7"/><polygon points="1675.1,432.5 3329.1,212.3 3319.1,206.6 1673.9,431.8" fill="#991200" stroke="#991200" stroke-width="0.7"/><polygon points="1673.9,431.8 3319.1,206.6 3309.0,200.8 1672.6,431.0" fill="#991300" stroke="#991300" stroke-width="0.7"/><polygon points="1672.6,431.0 3309.0,200.8 3299.0,195.1 1671.4,430.3" fill="#991300" stroke="#991300" stroke-width="0.7"/><polygon points="1671.4,430.3 3299.0,195.1 3288.9,189.4 1670.1,429.6" fill="#991400" stroke="#991400" stroke-width="0.7"/><polygon points="1670.1,429.6 3288.9,189.4 3278.9,183.6 1668.9,428.9" fill="#991400" stroke="#991400" stroke-width="0.7"/><polygon points="1668.9,428.9 3278.9,183.6 3268.8,177.9 1667.6,428.2" fill="#991500" stroke="#991500" stroke-width="0.7"/><polygon points="1667.6,428.2 3268.8,177.9 3258.8,172.2 1666.4,427.5" fill="#991600" stroke="#991600" stroke-width="0.7"/><polygon points="1666.4,427.5 3258.8,172.2 3248.7,166.4 1665.1,426.7" fill="#991600" stroke="#991600" stroke-width="0.7"/><polygon points="1665.1,426.7 3248.7,166.4 3238.6,160.7 1663.8,426.0" fill="#991700" stroke="#991700" stroke-width="0.7"/><polygon points="1663.8,426.0 3238.6,160.7 3228.6,155.0 1662.6,425.3" fill="#991700" stroke="#991700" stroke-width="0.7"/><polygon points="1662.6,425.3 3228.6,155.0 3218.5,149.2 1661.3,424.6" fill="#991800" stroke="#991800" stroke-width="0.7"/><polygon points="1661.3,424.6 3218.5,149.2 3208.5,143.5 1660.1,423.9" fill="#991800" stroke="#991800" stroke-width="0.7"/><polygon points="1660.1,423.9 3208.5,143.5 3198.4,137.8 1658.8,423.2" fill="#991900" stroke="#991900" stroke-width="0.7"/><polygon points="1658.8,423.2 3198.4,137.8 3188.4,132.0 1657.6,422.4" fill="#991900" stroke="#991900" stroke-width="0.7"/><polygon points="1657.6,422.4 3188.4,132.0 3178.3,126.3 1656.3,421.7" fill="#991a00" stroke="#991a00" stroke-width="0.7"/><polygon points="1656.3,421.7 3178.3,126.3 3168.3,120.6 1655.0,421.0" fill="#991b00" stroke="#991b00" stroke-width="0.7"/><polygon points="1655.0,421.0 3168.3,120.6 3158.2,114.9 1653.8,420.3" fill="#991b00" stroke="#991b00" stroke-width="0.7"/><polygon points="1653.8,420.3 3158.2,114.9 3148.2,109.1 1652.5,419.6" fill="#991c00" stroke="#991c00" stroke-width="0.7"/><polygon points="1652.5,419.6 3148.2,109.1 3138.1,103.4 1651.3,418.9" fill="#991d00" stroke="#991d00" stroke-width="0.7"/><polygon points="1651.3,418.9 3138.1,103.4 3128.1,97.7 1650.0,418.1" fill="#991d00" stroke="#991d00" stroke-width="0.7"/><polygon points="1650.0,418.1 3128.1,97.7 3118.0,91.9 1648.8,417.4" fill="#991e00" stroke="#991e00" stroke-width="0.7"/><polygon points="1648.8,417.4 3118.0,91.9 3108.0,86.2 1647.5,416.7" fill="#991e00" stroke="#991e00" stroke-width="0.7"/><polygon points="1647.5,416.7 3108.0,86.2 3097.9,80.5 1646.2,416.0" fill="#991f00" stroke="#991f00" stroke-width="0.7"/><polygon points="1646.2,416.0 3097.9,80.5 3087.9,74.7 1645.0,415.3" fill="#992000" stroke="#992000" stroke-width="0.7"/><polygon points="1645.0,415.3 3087.9,74.7 3077.8,69.0 1643.7,414.6" fill="#992000" stroke="#992000" stroke-width="0.7"/><polygon points="1643.7,414.6 3077.8,69.0 3067.8,63.3 1642.5,413.8" fill="#992100" stroke="#992100" stroke-width="0.7"/><polygon points="1642.5,413.8 3067.8,63.3 3057.7,57.5 1641.2,413.1" fill="#992200" stroke="#992200" stroke-width="0.7"/><polygon points="1641.2,413.1 3057.7,57.5 3047.6,51.8 1640.0,412.4" fill="#992200" stroke="#992200" stroke-width="0.7"/><polygon points="1640.0,412.4 3047.6,51.8 3037.6,46.1 1638.7,411.7" fill="#992300" stroke="#992300" stroke-width="0.7"/><polygon points="1638.7,411.7 3037.6,46.1 3027.5,40.3 1637.4,411.0" fill="#992400" stroke="#992400" stroke-width="0.7"/><polygon points="1637.4,411.0 3027.5,40.3 3017.5,34.6 1636.2,410.3" fill="#992500" stroke="#992500" stroke-width="0.7"/><polygon points="1636.2,410.3 3017.5,34.6 3007.4,28.9 1634.9,409.5" fill="#992500" stroke="#992500" stroke-width="0.7"/><polygon points="1634.9,409.5 3007.4,28.9 2997.4,23.1 1633.7,408.8" fill="#992600" stroke="#992600" stroke-width="0.7"/><polygon points="1633.7,408.8 2997.4,23.1 2987.3,17.4 1632.4,408.1" fill="#992700" stroke="#992700" stroke-width="0.7"/><polygon points="1632.4,408.1 2987.3,17.4 2977.3,11.7 1631.2,407.4" fill="#992700" stroke="#992700" stroke-width="0.7"/><polygon points="1631.2,407.4 2977.3,11.7 2967.2,5.9 1629.9,406.7" fill="#992800" stroke="#992800" stroke-width="0.7"/><polygon points="1629.9,406.7 2967.2,5.9 2957.2,0.2 1628.7,406.0" fill="#992900" stroke="#992900" stroke-width="0.7"/><polygon points="1628.7,406.0 2957.2,0.2 2947.1,-5.5 1627.4,405.2" fill="#992a00" stroke="#992a00" stroke-width="0.7"/><polygon points="1627.4,405.2 2947.1,-5.5 2937.1,-11.3 1626.1,404.5" fill="#992b00" stroke="#992b00" stroke-width="0.7"/><polygon points="1626.1,404.5 2937.1,-11.3 2927.0,-17.0 1624.9,403.8" fill="#992b00" stroke="#992b00" stroke-width="0.7"/><polygon points="1624.9,403.8 2927.0,-17.0 2917.0,-22.7 1623.6,403.1" fill="#992c00" stroke="#992c00" stroke-width="0.7"/><polygon points="1623.6,403.1 2917.0,-22.7 2906.9,-28.5 1622.4,402.4" fill="#992d00" stroke="#992d00" stroke-width="0.7"/><polygon points="1622.4,402.4 2906.9,-28.5 2896.9,-34.2 1621.1,401.7" fill="#992e00" stroke="#992e00" stroke-width="0.7"/><polygon points="1621.1,401.7 2896.9,-34.2 2886.8,-39.9 1619.9,400.9" fill="#992f00" stroke="#992f00" stroke-width="0.7"/><polygon points="1619.9,400.9 2886.8,-39.9 2876.8,-45.7 1618.6,400.2" fill="#992f00" stroke="#992f00" stroke-width="0.7"/><polygon points="1618.6,400.2 2876.8,-45.7 2866.7,-51.4 1617.3,399.5" fill="#993000" stroke="#993000" stroke-width="0.7"/><polygon points="1617.3,399.5 2866.7,-51.4 2856.6,-57.1 1616.1,398.8" fill="#993100" stroke="#993100" stroke-width="0.7"/><polygon points="1616.1,398.8 2856.6,-57.1 2846.6,-62.9 1614.8,398.1" fill="#993200" stroke="#993200" stroke-width="0.7"/><polygon points="1614.8,398.1 2846.6,-62.9 2836.5,-68.6 1613.6,397.4" fill="#993300" stroke="#993300" stroke-width="0.7"/><polygon points="1613.6,397.4 2836.5,-68.6 2826.5,-74.3 1612.3,396.6" fill="#993400" stroke="#993400" stroke-width="0.7"/><polygon points="1612.3,396.6 2826.5,-74.3 2816.4,-80.1 1611.1,395.9" fill="#993500" stroke="#993500" stroke-width="0.7"/><polygon points="1611.1,395.9 2816.4,-80.1 2806.4,-85.8 1609.8,395.2" fill="#993600" stroke="#993600" stroke-width="0.7"/><polygon points="1609.8,395.2 2806.4,-85.8 2796.3,-91.5 1608.5,394.5" fill="#993700" stroke="#993700" stroke-width="0.7"/><polygon points="1608.5,394.5 2796.3,-91.5 2786.3,-97.3 1607.3,393.8" fill="#993800" stroke="#993800" stroke-width="0.7"/><polygon points="1607.3,393.8 2786.3,-97.3 2776.2,-103.0 1606.0,393.1" fill="#993900" stroke="#993900" stroke-width="0.7"/><polygon points="1606.0,393.1 2776.2,-103.0 2766.2,-108.7 1604.8,392.3" fill="#993a00" stroke="#993a00" stroke-width="0.7"/><polygon points="1604.8,392.3 2766.2,-108.7 2756.1,-114.5 1603.5,391.6" fill="#993b00" stroke="#993b00" stroke-width="0.7"/><polygon points="1603.5,391.6 2756.1,-114.5 2746.1,-120.2 1602.3,390.9" fill="#993c00" stroke="#993c00" stroke-width="0.7"/><polygon points="1602.3,390.9 2746.1,-120.2 2736.0,-125.9 1601.0,390.2" fill="#993d00" stroke="#993d00" stroke-width="0.7"/><polygon points="1601.0,390.2 2736.0,-125.9 2726.0,-131.7 1599.8,389.5" fill="#993e00" stroke="#993e00" stroke-width="0.7"/><polygon points="1599.8,389.5 2726.0,-131.7 2715.9,-137.4 1598.5,388.8" fill="#993f00" stroke="#993f00" stroke-width="0.7"/><polygon points="1598.5,388.8 2715.9,-137.4 2705.9,-143.1 1597.2,388.0" fill="#994000" stroke="#994000" stroke-width="0.7"/><polygon points="1597.2,388.0 2705.9,-143.1 2695.8,-148.9 1596.0,387.3" fill="#994100" stroke="#994100" stroke-width="0.7"/><polygon points="1596.0,387.3 2695.8,-148.9 2685.8,-154.6 1594.7,386.6" fill="#994200" stroke="#994200" stroke-width="0.7"/><polygon points="1594.7,386.6 2685.8,-154.6 2675.7,-160.3 1593.5,385.9" fill="#994300" stroke="#994300" stroke-width="0.7"/><polygon points="1593.5,385.9 2675.7,-160.3 2665.6,-166.1 1592.2,385.2" fill="#994400" stroke="#994400" stroke-width="0.7"/><polygon points="1592.2,385.2 2665.6,-166.1 2655.6,-171.8 1591.0,384.5" fill="#994500" stroke="#994500" stroke-width="0.7"/><polygon points="1591.0,384.5 2655.6,-171.8 2645.5,-177.5 1589.7,383.7" fill="#994700" stroke="#994700" stroke-width="0.7"/><polygon points="1589.7,383.7 2645.5,-177.5 2635.5,-183.3 1588.4,383.0" fill="#994800" stroke="#994800" stroke-width="0.7"/><polygon points="1588.4,383.0 2635.5,-183.3 2625.4,-189.0 1587.2,382.3" fill="#994900" stroke="#994900" stroke-width="0.7"/><polygon points="1587.2,382.3 2625.4,-189.0 2615.4,-194.7 1585.9,381.6" fill="#994a00" stroke="#994a00" stroke-width="0.7"/><polygon points="1585.9,381.6 2615.4,-194.7 2605.3,-200.5 1584.7,380.9" fill="#994b00" stroke="#994b00" stroke-width="0.7"/><polygon points="1584.7,380.9 2605.3,-200.5 2595.3,-206.2 1583.4,380.2" fill="#994d00" stroke="#994d00" stroke-width="0.7"/><polygon points="1583.4,380.2 2595.3,-206.2 2585.2,-211.9 1582.2,379.4" fill="#994e00" stroke="#994e00" stroke-width="0.7"/><polygon points="1582.2,379.4 2585.2,-211.9 2575.2,-217.7 1580.9,378.7" fill="#994f00" stroke="#994f00" stroke-width="0.7"/><polygon points="1580.9,378.7 2575.2,-217.7 2565.1,-223.4 1579.6,378.0" fill="#995100" stroke="#995100" stroke-width="0.7"/><polygon points="1579.6,378.0 2565.1,-223.4 2555.1,-229.1 1578.4,377.3" fill="#995200" stroke="#995200" stroke-width="0.7"/><polygon points="1578.4,377.3 2555.1,-229.1 2545.0,-234.9 1577.1,376.6" fill="#995300" stroke="#995300" stroke-width="0.7"/><polygon points="1577.1,376.6 2545.0,-234.9 2535.0,-240.6 1575.9,375.9" fill="#995500" stroke="#995500" stroke-width="0.7"/><polygon points="1575.9,375.9 2535.0,-240.6 2524.9,-246.3 1574.6,375.1" fill="#995600" stroke="#995600" stroke-width="0.7"/><polygon points="1574.6,375.1 2524.9,-246.3 2514.9,-252.1 1573.4,374.4" fill="#995800" stroke="#995800" stroke-width="0.7"/><polygon points="1573.4,374.4 2514.9,-252.1 2504.8,-257.8 1572.1,373.7" fill="#995900" stroke="#995900" stroke-width="0.7"/><polygon points="1572.1,373.7 2504.8,-257.8 2494.7,-263.5 1570.9,373.0" fill="#995b00" stroke="#995b00" stroke-width="0.7"/><polygon points="1570.9,373.0 2494.7,-263.5 2484.7,-269.3 1569.6,372.3" fill="#995c00" stroke="#995c00" stroke-width="0.7"/><polygon points="1569.6,372.3 2484.7,-269.3 2474.6,-275.0 1568.3,371.6" fill="#995e00" stroke="#995e00" stroke-width="0.7"/><polygon points="1568.3,371.6 2474.6,-275.0 2464.6,-280.7 1567.1,370.8" fill="#995f00" stroke="#995f00" stroke-width="0.7"/><polygon points="1567.1,370.8 2464.6,-280.7 2454.5,-286.5 1565.8,370.1" fill="#996100" stroke="#996100" stroke-width="0.7"/><polygon points="1565.8,370.1 2454.5,-286.5 2444.5,-292.2 1564.6,369.4" fill="#996300" stroke="#996300" stroke-width="0.7"/><polygon points="1564.6,369.4 2444.5,-292.2 2434.4,-297.9 1563.3,368.7" fill="#996400" stroke="#996400" stroke-width="0.7"/><polygon points="1563.3,368.7 2434.4,-297.9 2424.4,-303.7 1562.1,368.0" fill="#996600" stroke="#996600" stroke-width="0.7"/><polygon points="1562.1,368.0 2424.4,-303.7 2414.3,-309.4 1560.8,367.3" fill="#996800" stroke="#996800" stroke-width="0.7"/><polygon points="1560.8,367.3 2414.3,-309.4 2404.3,-315.1 1559.5,366.5" fill="#996900" stroke="#996900" stroke-width="0.7"/><polygon points="1559.5,366.5 2404.3,-315.1 2394.2,-320.9 1558.3,365.8" fill="#996b00" stroke="#996b00" stroke-width="0.7"/><polygon points="1558.3,365.8 2394.2,-320.9 2384.2,-326.6 1557.0,365.1" fill="#996d00" stroke="#996d00" stroke-width="0.7"/><polygon points="1557.0,365.1 2384.2,-326.6 2374.1,-332.3 1555.8,364.4" fill="#996f00" stroke="#996f00" stroke-width="0.7"/><polygon points="1555.8,364.4 2374.1,-332.3 2364.1,-338.1 1554.5,363.7" fill="#997100" stroke="#997100" stroke-width="0.7"/><polygon points="1554.5,363.7 2364.1,-338.1 2354.0,-343.8 1553.3,363.0" fill="#997300" stroke="#997300" stroke-width="0.7"/><polygon points="1553.3,363.0 2354.0,-343.8 2344.0,-349.5 1552.0,362.2" fill="#997500" stroke="#997500" stroke-width="0.7"/><polygon points="1552.0,362.2 2344.0,-349.5 2333.9,-355.3 1550.7,361.5" fill="#997700" stroke="#997700" stroke-width="0.7"/><polygon points="1550.7,361.5 2333.9,-355.3 2323.9,-361.0 1549.5,360.8" fill="#997900" stroke="#997900" stroke-width="0.7"/><polygon points="1549.5,360.8 2323.9,-361.0 2313.8,-366.7 1548.2,360.1" fill="#997b00" stroke="#997b00" stroke-width="0.7"/><polygon points="1548.2,360.1 2313.8,-366.7 2303.7,-372.5 1547.0,359.4" fill="#997d00" stroke="#997d00" stroke-width="0.7"/><polygon points="1547.0,359.4 2303.7,-372.5 2293.7,-378.2 1545.7,358.7" fill="#997f00" stroke="#997f00" stroke-width="0.7"/><polygon points="1545.7,358.7 2293.7,-378.2 2283.6,-383.9 1544.5,357.9" fill="#998200" stroke="#998200" stroke-width="0.7"/><polygon points="1544.5,357.9 2283.6,-383.9 2273.6,-389.7 1543.2,357.2" fill="#998400" stroke="#998400" stroke-width="0.7"/><polygon points="1543.2,357.2 2273.6,-389.7 2263.5,-395.4 1541.9,356.5" fill="#998600" stroke="#998600" stroke-width="0.7"/><polygon points="1541.9,356.5 2263.5,-395.4 2253.5,-401.1 1540.7,355.8" fill="#998900" stroke="#998900" stroke-width="0.7"/><polygon points="1540.7,355.8 2253.5,-401.1 2243.4,-406.9 1539.4,355.1" fill="#998b00" stroke="#998b00" stroke-width="0.7"/><polygon points="1539.4,355.1 2243.4,-406.9 2233.4,-412.6 1538.2,354.4" fill="#998e00" stroke="#998e00" stroke-width="0.7"/><polygon points="1538.2,354.4 2233.4,-412.6 2223.3,-418.3 1536.9,353.6" fill="#999000" stroke="#999000" stroke-width="0.7"/><polygon points="1536.9,353.6 2223.3,-418.3 2213.3,-424.1 1535.7,352.9" fill="#999300" stroke="#999300" stroke-width="0.7"/><polygon points="1535.7,352.9 2213.3,-424.1 2203.2,-429.8 1534.4,352.2" fill="#999600" stroke="#999600" stroke-width="0.7"/><polygon points="1534.4,352.2 2203.2,-429.8 2193.2,-435.5 1533.2,351.5" fill="#999800" stroke="#999800" stroke-width="0.7"/><polygon points="1533.2,351.5 2193.2,-435.5 2183.1,-441.3 1531.9,350.8" fill="#979900" stroke="#979900" stroke-width="0.7"/><polygon points="1531.9,350.8 2183.1,-441.3 2173.1,-447.0 1530.6,350.1" fill="#949900" stroke="#949900" stroke-width="0.7"/><polygon points="1530.6,350.1 2173.1,-447.0 2163.0,-452.7 1529.4,349.3" fill="#919900" stroke="#919900" stroke-width="0.7"/><polygon points="1529.4,349.3 2163.0,-452.7 2153.0,-458.4 1528.1,348.6" fill="#8f9900" stroke="#8f9900" stroke-width="0.7"/><polygon points="1528.1,348.6 2153.0,-458.4 2142.9,-464.2 1526.9,347.9" fill="#8c9900" stroke="#8c9900" stroke-width="0.7"/><polygon points="1526.9,347.9 2142.9,-464.2 2132.9,-469.9 1525.6,347.2" fill="#8a9900" stroke="#8a9900" stroke-width="0.7"/><polygon points="1525.6,347.2 2132.9,-469.9 2122.8,-475.6 1524.4,346.5" fill="#879900" stroke="#879900" stroke-width="0.7"/><polygon points="1524.4,346.5 2122.8,-475.6 2112.7,-481.4 1523.1,345.8" fill="#849900" stroke="#849900" stroke-width="0.7"/><polygon points="1523.1,345.8 2112.7,-481.4 2102.7,-487.1 1521.8,345.0" fill="#829900" stroke="#829900" stroke-width="0.7"/><polygon points="1521.8,345.0 2102.7,-487.1 2092.6,-492.8 1520.6,344.3" fill="#7f9900" stroke="#7f9900" stroke-width="0.7"/><polygon points="1520.6,344.3 2092.6,-492.8 2082.6,-498.6 1519.3,343.6" fill="#7d9900" stroke="#7d9900" stroke-width="0.7"/><polygon points="1519.3,343.6 2082.6,-498.6 2072.5,-504.3 1518.1,342.9" fill="#7a9900" stroke="#7a9900" stroke-width="0.7"/><polygon points="1518.1,342.9 2072.5,-504.3 2062.5,-510.0 1516.8,342.2" fill="#789900" stroke="#789900" stroke-width="0.7"/><polygon points="1516.8,342.2 2062.5,-510.0 2052.4,-515.8 1515.6,341.5" fill="#769900" stroke="#769900" stroke-width="0.7"/><polygon points="1515.6,341.5 2052.4,-515.8 2042.4,-521.5 1514.3,340.7" fill="#739900" stroke="#739900" stroke-width="0.7"/><polygon points="1514.3,340.7 2042.4,-521.5 2032.3,-527.2 1513.0,340.0" fill="#719900" stroke="#719900" stroke-width="0.7"/><polygon points="1513.0,340.0 2032.3,-527.2 2022.3,-533.0 1511.8,339.3" fill="#6f9900" stroke="#6f9900" stroke-width="0.7"/><polygon points="1511.8,339.3 2022.3,-533.0 2012.2,-538.7 1510.5,338.6" fill="#6c9900" stroke="#6c9900" stroke-width="0.7"/><polygon points="1510.5,338.6 2012.2,-538.7 2002.2,-544.4 1509.3,337.9" fill="#6a9900" stroke="#6a9900" stroke-width="0.7"/><polygon points="1509.3,337.9 2002.2,-544.4 1992.1,-550.2 1508.0,337.2" fill="#689900" stroke="#689900" stroke-width="0.7"/><polygon points="1508.0,337.2 1992.1,-550.2 1982.1,-555.9 1506.8,336.4" fill="#669900" stroke="#669900" stroke-width="0.7"/><polygon points="1506.8,336.4 1982.1,-555.9 1972.0,-561.6 1505.5,335.7" fill="#649900" stroke="#649900" stroke-width="0.7"/><polygon points="1505.5,335.7 1972.0,-561.6 1962.0,-567.4 1504.3,335.0" fill="#619900" stroke="#619900" stroke-width="0.7"/><polygon points="1504.3,335.0 1962.0,-567.4 1951.9,-573.1 1503.0,334.3" fill="#5f9900" stroke="#5f9900" stroke-width="0.7"/><polygon points="1503.0,334.3 1951.9,-573.1 1941.9,-578.8 1501.7,333.6" fill="#5d9900" stroke="#5d9900" stroke-width="0.7"/><polygon points="1501.7,333.6 1941.9,-578.8 1931.8,-584.6 1500.5,332.9" fill="#5b9900" stroke="#5b9900" stroke-width="0.7"/><polygon points="1500.5,332.9 1931.8,-584.6 1921.7,-590.3 1499.2,332.1" fill="#599900" stroke="#599900" stroke-width="0.7"/><polygon points="1499.2,332.1 1921.7,-590.3 1911.7,-596.0 1498.0,331.4" fill="#579900" stroke="#579900" stroke-width="0.7"/><polygon points="1498.0,331.4 1911.7,-596.0 1901.6,-601.8 1496.7,330.7" fill="#559900" stroke="#559900" stroke-width="0.7"/><polygon points="1496.7,330.7 1901.6,-601.8 1891.6,-607.5 1495.5,330.0" fill="#539900" stroke="#539900" stroke-width="0.7"/><polygon points="1495.5,330.0 1891.6,-607.5 1881.5,-613.2 1494.2,329.3" fill="#519900" stroke="#519900" stroke-width="0.7"/><polygon points="1494.2,329.3 1881.5,-613.2 1871.5,-619.0 1492.9,328.6" fill="#4f9900" stroke="#4f9900" stroke-width="0.7"/><polygon points="1492.9,328.6 1871.5,-619.0 1861.4,-624.7 1491.7,327.8" fill="#4d9900" stroke="#4d9900" stroke-width="0.7"/><polygon points="1491.7,327.8 1861.4,-624.7 1851.4,-630.4 1490.4,327.1" fill="#4b9900" stroke="#4b9900" stroke-width="0.7"/><polygon points="1490.4,327.1 1851.4,-630.4 1841.3,-636.2 1489.2,326.4" fill="#4a9900" stroke="#4a9900" stroke-width="0.7"/><polygon points="1489.2,326.4 1841.3,-636.2 1831.3,-641.9 1487.9,325.7" fill="#489900" stroke="#489900" stroke-width="0.7"/><polygon points="1487.9,325.7 1831.3,-641.9 1821.2,-647.6 1486.7,325.0" fill="#469900" stroke="#469900" stroke-width="0.7"/><polygon points="1486.7,325.0 1821.2,-647.6 1811.2,-653.4 1485.4,324.3" fill="#449900" stroke="#449900" stroke-width="0.7"/><polygon points="1485.4,324.3 1811.2,-653.4 1801.1,-659.1 1484.1,323.5" fill="#429900" stroke="#429900" stroke-width="0.7"/><polygon points="1484.1,323.5 1801.1,-659.1 1791.1,-664.8 1482.9,322.8" fill="#409900" stroke="#409900" stroke-width="0.7"/><polygon points="1482.9,322.8 1791.1,-664.8 1781.0,-670.6 1481.6,322.1" fill="#3f9900" stroke="#3f9900" stroke-width="0.7"/><polygon points="1481.6,322.1 1781.0,-670.6 1771.0,-676.3 1480.4,321.4" fill="#3d9900" stroke="#3d9900" stroke-width="0.7"/><polygon points="1480.4,321.4 1771.0,-676.3 1760.9,-682.0 1479.1,320.7" fill="#3b9900" stroke="#3b9900" stroke-width="0.7"/><polygon points="1479.1,320.7 1760.9,-682.0 1750.9,-687.8 1477.9,320.0" fill="#399900" stroke="#399900" stroke-width="0.7"/><polygon points="1477.9,320.0 1750.9,-687.8 1740.8,-693.5 1476.6,319.2" fill="#389900" stroke="#389900" stroke-width="0.7"/><polygon points="1476.6,319.2 1740.8,-693.5 1730.7,-699.2 1475.4,318.5" fill="#369900" stroke="#369900" stroke-width="0.7"/><polygon points="1475.4,318.5 1730.7,-699.2 1720.7,-705.0 1474.1,317.8" fill="#349900" stroke="#349900" stroke-width="0.7"/><polygon points="1474.1,317.8 1720.7,-705.0 1710.6,-710.7 1472.8,317.1" fill="#339900" stroke="#339900" stroke-width="0.7"/><polygon points="1472.8,317.1 1710.6,-710.7 1700.6,-716.4 1471.6,316.4" fill="#319900" stroke="#319900" stroke-width="0.7"/><polygon points="1471.6,316.4 1700.6,-716.4 1690.5,-722.2 1470.3,315.7" fill="#2f9900" stroke="#2f9900" stroke-width="0.7"/><polygon points="1470.3,315.7 1690.5,-722.2 1680.5,-727.9 1469.1,314.9" fill="#2e9900" stroke="#2e9900" stroke-width="0.7"/><polygon points="1469.1,314.9 1680.5,-727.9 1670.4,-733.6 1467.8,314.2" fill="#2c9900" stroke="#2c9900" stroke-width="0.7"/><polygon points="1467.8,314.2 1670.4,-733.6 1660.4,-739.4 1466.6,313.5" fill="#2b9900" stroke="#2b9900" stroke-width="0.7"/><polygon points="1466.6,313.5 1660.4,-739.4 1650.3,-745.1 1465.3,312.8" fill="#299900" stroke="#299900" stroke-width="0.7"/><polygon points="1465.3,312.8 1650.3,-745.1 1640.3,-750.8 1464.0,312.1" fill="#289900" stroke="#289900" stroke-width="0.7"/><polygon points="1464.0,312.1 1640.3,-750.8 1630.2,-756.6 1462.8,311.4" fill="#269900" stroke="#269900" stroke-width="0.7"/><polygon points="1462.8,311.4 1630.2,-756.6 1620.2,-762.3 1461.5,310.6" fill="#259900" stroke="#259900" stroke-width="0.7"/><polygon points="1461.5,310.6 1620.2,-762.3 1610.1,-768.0 1460.3,309.9" fill="#239900" stroke="#239900" stroke-width="0.7"/><polygon points="1460.3,309.9 1610.1,-768.0 1600.1,-773.8 1459.0,309.2" fill="#229900" stroke="#229900" stroke-width="0.7"/><polygon points="1459.0,309.2 1600.1,-773.8 1590.0,-779.5 1457.8,308.5" fill="#209900" stroke="#209900" stroke-width="0.7"/><polygon points="1457.8,308.5 1590.0,-779.5 1580.0,-785.2 1456.5,307.8" fill="#1f9900" stroke="#1f9900" stroke-width="0.7"/><polygon points="1456.5,307.8 1580.0,-785.2 1569.9,-791.0 1455.2,307.1" fill="#1d9900" stroke="#1d9900" stroke-width="0.7"/><polygon points="1455.2,307.1 1569.9,-791.0 1559.9,-796.7 1454.0,306.3" fill="#1c9900" stroke="#1c9900" stroke-width="0.7"/><polygon points="1454.0,306.3 1559.9,-796.7 1549.8,-802.4 1452.7,305.6" fill="#1a9900" stroke="#1a9900" stroke-width="0.7"/><polygon points="1452.7,305.6 1549.8,-802.4 1539.7,-808.2 1451.5,304.9" fill="#199900" stroke="#199900" stroke-width="0.7"/><polygon points="1451.5,304.9 1539.7,-808.2 1529.7,-813.9 1450.2,304.2" fill="#189900" stroke="#189900" stroke-width="0.7"/><polygon points="1450.2,304.2 1529.7,-813.9 1519.6,-819.6 1449.0,303.5" fill="#169900" stroke="#169900" stroke-width="0.7"/><polygon points="1449.0,303.5 1519.6,-819.6 1509.6,-825.4 1447.7,302.8" fill="#159900" stroke="#159900" stroke-width="0.7"/><polygon points="1447.7,302.8 1509.6,-825.4 1499.5,-831.1 1446.4,302.0" fill="#149900" stroke="#149900" stroke-width="0.7"/><polygon points="1446.4,302.0 1499.5,-831.1 1489.5,-836.8 1445.2,301.3" fill="#129900" stroke="#129900" stroke-width="0.7"/><polygon points="1445.2,301.3 1489.5,-836.8 1479.4,-842.6 1443.9,300.6" fill="#119900" stroke="#119900" stroke-width="0.7"/><polygon points="1443.9,300.6 1479.4,-842.6 1469.4,-848.3 1442.7,299.9" fill="#109900" stroke="#109900" stroke-width="0.7"/><polygon points="1442.7,299.9 1469.4,-848.3 1459.3,-854.0 1441.4,299.2" fill="#0e9900" stroke="#0e9900" stroke-width="0.7"/><polygon points="1441.4,299.2 1459.3,-854.0 1449.3,-859.8 1440.2,298.5" fill="#0d9900" stroke="#0d9900" stroke-width="0.7"/><polygon points="1440.2,298.5 1449.3,-859.8 1439.2,-865.5 1438.9,297.7" fill="#0c9900" stroke="#0c9900" stroke-width="0.7"/><polygon points="1438.9,297.7 1439.2,-865.5 1429.2,-871.2 1437.7,297.0" fill="#0a9900" stroke="#0a9900" stroke-width="0.7"/><polygon points="1437.7,297.0 1429.2,-871.2 1419.1,-877.0 1436.4,296.3" fill="#099900" stroke="#099900" stroke-width="0.7"/><polygon points="1436.4,296.3 1419.1,-877.0 1409.1,-882.7 1435.1,295.6" fill="#089900" stroke="#089900" stroke-width="0.7"/><polygon points="1435.1,295.6 1409.1,-882.7 1399.0,-888.4 1433.9,294.9" fill="#079900" stroke="#079900" stroke-width="0.7"/><polygon points="1433.9,294.9 1399.0,-888.4 1389.0,-894.2 1432.6,294.2" fill="#059900" stroke="#059900" stroke-width="0.7"/><polygon points="1432.6,294.2 1389.0,-894.2 1378.9,-899.9 1431.4,293.4" fill="#049900" stroke="#049900" stroke-width="0.7"/><polygon points="1431.4,293.4 1378.9,-899.9 1368.9,-905.6 1430.1,292.7" fill="#039900" stroke="#039900" stroke-width="0.7"/><polygon points="1430.1,292.7 1368.9,-905.6 1358.8,-911.4 1428.9,292.0" fill="#029900" stroke="#029900" stroke-width="0.7"/><polygon points="1428.9,292.0 1358.8,-911.4 1348.7,-917.1 1427.6,291.3" fill="#019900" stroke="#019900" stroke-width="0.7"/><polygon points="1427.6,291.3 1348.7,-917.1 1344.3,-905.6 1427.0,292.7" fill="#009900" stroke="#009900" stroke-width="0.7"/><polygon points="1427.0,292.7 1344.3,-905.6 1339.9,-894.2 1426.5,294.2" fill="#009900" stroke="#009900" stroke-width="0.7"/><polygon points="1426.5,294.2 1339.9,-894.2 1335.4,-882.7 1425.9,295.6" fill="#009900" stroke="#009900" stroke-width="0.7"/><polygon points="1425.9,295.6 1335.4,-882.7 1331.0,-871.2 1425.4,297.0" fill="#009900" stroke="#009900" stroke-width="0.7"/><polygon points="1425.4,297.0 1331.0,-871.2 1326.6,-859.8 1424.8,298.5" fill="#009900" stroke="#009900" stroke-width="0.7"/><polygon points="1424.8,298.5 1326.6,-859.8 1322.1,-848.3 1424.3,299.9" fill="#009900" stroke="#009900" stroke-width="0.7"/><polygon points="1424.3,299.9 1322.1,-848.3 1317.7,-836.8 1423.7,301.3" fill="#009900" stroke="#009900" stroke-width="0.7"/><polygon points="1423.7,301.3 1317.7,-836.8 1313.3,-825.4 1423.2,302.8" fill="#009900" stroke="#009900" stroke-width="0.7"/><polygon points="1423.2,302.8 1313.3,-825.4 1308.8,-813.9 1422.6,304.2" fill="#009900" stroke="#009900" stroke-width="0.7"/><polygon points="1422.6,304.2 1308.8,-813.9 1304.4,-802.4 1422.1,305.6" fill="#009900" stroke="#009900" stroke-width="0.7"/><polygon points="1422.1,305.6 1304.4,-802.4 1300.0,-791.0 1421.5,307.1" fill="#009901" stroke="#009901" stroke-width="0.7"/><polygon points="1421.5,307.1 1300.0,-791.0 1295.5,-779.5 1420.9,308.5" fill="#009901" stroke="#009901" stroke-width="0.7"/><polygon points="1420.9,308.5 1295.5,-779.5 1291.1,-768.0 1420.4,309.9" fill="#009901" stroke="#009901" stroke-width="0.7"/><polygon points="1420.4,309.9 1291.1,-768.0 1286.7,-756.6 1419.8,311.4" fill="#009901" stroke="#009901" stroke-width="0.7"/><polygon points="1419.8,311.4 1286.7,-756.6 1282.2,-745.1 1419.3,312.8" fill="#009901" stroke="#009901" stroke-width="0.7"/><polygon points="1419.3,312.8 1282.2,-745.1 1277.8,-733.6 1418.7,314.2" fill="#009901" stroke="#009901" stroke-width="0.7"/><polygon points="1418.7,314.2 1277.8,-733.6 1273.4,-722.2 1418.2,315.7" fill="#009901" stroke="#009901" stroke-width="0.7"/><polygon points="1418.2,315.7 1273.4,-722.2 1268.9,-710.7 1417.6,317.1" fill="#009902" stroke="#009902" stroke-width="0.7"/><polygon points="1417.6,317.1 1268.9,-710.7 1264.5,-699.2 1417.1,318.5" fill="#009902" stroke="#009902" stroke-width="0.7"/><polygon points="1417.1,318.5 1264.5,-699.2 1260.0,-687.8 1416.5,320.0" fill="#009902" stroke="#009902" stroke-width="0.7"/><polygon points="1416.5,320.0 1260.0,-687.8 1255.6,-676.3 1416.0,321.4" fill="#009902" stroke="#009902" stroke-width="0.7"/><polygon points="1416.0,321.4 1255.6,-676.3 1251.2,-664.8 1415.4,322.8" fill="#009902" stroke="#009902" stroke-width="0.7"/><polygon points="1415.4,322.8 1251.2,-664.8 1246.7,-653.4 1414.8,324.3" fill="#009903" stroke="#009903" stroke-width="0.7"/><polygon points="1414.8,324.3 1246.7,-653.4 1242.3,-641.9 1414.3,325.7" fill="#009903" stroke="#009903" stroke-width="0.7"/><polygon points="1414.3,325.7 1242.3,-641.9 1237.9,-630.4 1413.7,327.1" fill="#009903" stroke="#009903" stroke-width="0.7"/><polygon points="1413.7,327.1 1237.9,-630.4 1233.4,-619.0 1413.2,328.6" fill="#009903" stroke="#009903" stroke-width="0.7"/><polygon points="1413.2,328.6 1233.4,-619.0 1229.0,-607.5 1412.6,330.0" fill="#009904" stroke="#009904" stroke-width="0.7"/><polygon points="1412.6,330.0 1229.0,-607.5 1224.6,-596.0 1412.1,331.4" fill="#009904" stroke="#009904" stroke-width="0.7"/><polygon points="1412.1,331.4 1224.6,-596.0 1220.1,-584.6 1411.5,332.9" fill="#009904" stroke="#009904" stroke-width="0.7"/><polygon points="1411.5,332.9 1220.1,-584.6 1215.7,-573.1 1411.0,334.3" fill="#009904" stroke="#009904" stroke-width="0.7"/><polygon points="1411.0,334.3 1215.7,-573.1 1211.3,-561.6 1410.4,335.7" fill="#009905" stroke="#009905" stroke-width="0.7"/><polygon points="1410.4,335.7 1211.3,-561.6 1206.8,-550.2 1409.9,337.2" fill="#009905" stroke="#009905" stroke-width="0.7"/><polygon points="1409.9,337.2 1206.8,-550.2 1202.4,-538.7 1409.3,338.6" fill="#009905" stroke="#009905" stroke-width="0.7"/><polygon points="1409.3,338.6 1202.4,-538.7 1198.0,-527.2 1408.8,340.0" fill="#009906" stroke="#009906" stroke-width="0.7"/><polygon points="1408.8,340.0 1198.0,-527.2 1193.5,-515.8 1408.2,341.5" fill="#009906" stroke="#009906" stroke-width="0.7"/><polygon points="1408.2,341.5 1193.5,-515.8 1189.1,-504.3 1407.6,342.9" fill="#009906" stroke="#009906" stroke-width="0.7"/><polygon points="1407.6,342.9 1189.1,-504.3 1184.7,-492.8 1407.1,344.3" fill="#009907" stroke="#009907" stroke-width="0.7"/><polygon points="1407.1,344.3 1184.7,-492.8 1180.2,-481.4 1406.5,345.8" fill="#009907" stroke="#009907" stroke-width="0.7"/><polygon points="1406.5,345.8 1180.2,-481.4 1175.8,-469.9 1406.0,347.2" fill="#009908" stroke="#009908" stroke-width="0.7"/><polygon points="1406.0,347.2 1175.8,-469.9 1171.3,-458.4 1405.4,348.6" fill="#009908" stroke="#009908" stroke-width="0.7"/><polygon points="1405.4,348.6 1171.3,-458.4 1166.9,-447.0 1404.9,350.1" fill="#009909" stroke="#009909" stroke-width="0.7"/><polygon points="1404.9,350.1 1166.9,-447.0 1162.5,-435.5 1404.3,351.5" fill="#009909" stroke="#009909" stroke-width="0.7"/><polygon points="1404.3,351.5 1162.5,-435.5 1158.0,-424.1 1403.8,352.9" fill="#009909" stroke="#009909" stroke-width="0.7"/><polygon points="1403.8,352.9 1158.0,-424.1 1153.6,-412.6 1403.2,354.4" fill="#00990a" stroke="#00990a" stroke-width="0.7"/><polygon points="1403.2,354.4 1153.6,-412.6 1149.2,-401.1 1402.7,355.8" fill="#00990a" stroke="#00990a" stroke-width="0.7"/><polygon points="1402.7,355.8 1149.2,-401.1 1144.7,-389.7 1402.1,357.2" fill="#00990b" stroke="#00990b" stroke-width="0.7"/><polygon points="1402.1,357.2 1144.7,-389.7 1140.3,-378.2 1401.5,358.7" fill="#00990c" stroke="#00990c" stroke-width="0.7"/><polygon points="1401.5,358.7 1140.3,-378.2 1135.9,-366.7 1401.0,360.1" fill="#00990c" stroke="#00990c" stroke-width="0.7"/><polygon points="1401.0,360.1 1135.9,-366.7 1131.4,-355.3 1400.4,361.5" fill="#00990d" stroke="#00990d" stroke-width="0.7"/><polygon points="1400.4,361.5 1131.4,-355.3 1127.0,-343.8 1399.9,363.0" fill="#00990d" stroke="#00990d" stroke-width="0.7"/><polygon points="1399.9,363.0 1127.0,-343.8 1122.6,-332.3 1399.3,364.4" fill="#00990e" stroke="#00990e" stroke-width="0.7"/><polygon points="1399.3,364.4 1122.6,-332.3 1118.1,-320.9 1398.8,365.8" fill="#00990f" stroke="#00990f" stroke-width="0.7"/><polygon points="1398.8,365.8 1118.1,-320.9 1113.7,-309.4 1398.2,367.3" fill="#00990f" stroke="#00990f" stroke-width="0.7"/><polygon points="1398.2,367.3 1113.7,-309.4 1109.3,-297.9 1397.7,368.7" fill="#009910" stroke="#009910" stroke-width="0.7"/><polygon points="1397.7,368.7 1109.3,-297.9 1104.8,-286.5 1397.1,370.1" fill="#009911" stroke="#009911" stroke-width="0.7"/><polygon points="1397.1,370.1 1104.8,-286.5 1100.4,-275.0 1396.6,371.6" fill="#009911" stroke="#009911" stroke-width="0.7"/><polygon points="1396.6,371.6 1100.4,-275.0 1096.0,-263.5 1396.0,373.0" fill="#009912" stroke="#009912" stroke-width="0.7"/><polygon points="1396.0,373.0 1096.0,-263.5 1091.5,-252.1 1395.4,374.4" fill="#009913" stroke="#009913" stroke-width="0.7"/><polygon points="1395.4,374.4 1091.5,-252.1 1087.1,-240.6 1394.9,375.9" fill="#009914" stroke="#009914" stroke-width="0.7"/><polygon points="1394.9,375.9 1087.1,-240.6 1082.6,-229.1 1394.3,377.3" fill="#009914" stroke="#009914" stroke-width="0.7"/><polygon points="1394.3,377.3 1082.6,-229.1 1078.2,-217.7 1393.8,378.7" fill="#009915" stroke="#009915" stroke-width="0.7"/><polygon points="1393.8,378.7 1078.2,-217.7 1073.8,-206.2 1393.2,380.2" fill="#009916" stroke="#009916" stroke-width="0.7"/><polygon points="1393.2,380.2 1073.8,-206.2 1069.3,-194.7 1392.7,381.6" fill="#009917" stroke="#009917" stroke-width="0.7"/><polygon points="1392.7,381.6 1069.3,-194.7 1064.9,-183.3 1392.1,383.0" fill="#009918" stroke="#009918" stroke-width="0.7"/><polygon points="1392.1,383.0 1064.9,-183.3 1060.5,-171.8 1391.6,384.5" fill="#009919" stroke="#009919" stroke-width="0.7"/><polygon points="1391.6,384.5 1060.5,-171.8 1056.0,-160.3 1391.0,385.9" fill="#00991a" stroke="#00991a" stroke-width="0.7"/><polygon points="1391.0,385.9 1056.0,-160.3 1051.6,-148.9 1390.5,387.3" fill="#00991b" stroke="#00991b" stroke-width="0.7"/><polygon points="1390.5,387.3 1051.6,-148.9 1047.2,-137.4 1389.9,388.8" fill="#00991c" stroke="#00991c" stroke-width="0.7"/><polygon points="1389.9,388.8 1047.2,-137.4 1042.7,-125.9 1389.3,390.2" fill="#00991d" stroke="#00991d" stroke-width="0.7"/><polygon points="1389.3,390.2 1042.7,-125.9 1038.3,-114.5 1388.8,391.6" fill="#00991e" stroke="#00991e" stroke-width="0.7"/><polygon points="1388.8,391.6 1038.3,-114.5 1033.9,-103.0 1388.2,393.1" fill="#00991f" stroke="#00991f" stroke-width="0.7"/><polygon points="1388.2,393.1 1033.9,-103.0 1029.4,-91.5 1387.7,394.5" fill="#009920" stroke="#009920" stroke-width="0.7"/><polygon points="1387.7,394.5 1029.4,-91.5 1025.0,-80.1 1387.1,395.9" fill="#009921" stroke="#009921" stroke-width="0.7"/><polygon points="1387.1,395.9 1025.0,-80.1 1020.6,-68.6 1386.6,397.4" fill="#009922" stroke="#009922" stroke-width="0.7"/><polygon points="1386.6,397.4 1020.6,-68.6 1016.1,-57.1 1386.0,398.8" fill="#009924" stroke="#009924" stroke-width="0.7"/><polygon points="1386.0,398.8 1016.1,-57.1 1011.7,-45.7 1385.5,400.2" fill="#009925" stroke="#009925" stroke-width="0.7"/><polygon points="1385.5,400.2 1011.7,-45.7 1007.3,-34.2 1384.9,401.7" fill="#009926" stroke="#009926" stroke-width="0.7"/><polygon points="1384.9,401.7 1007.3,-34.2 1002.8,-22.7 1384.4,403.1" fill="#009928" stroke="#009928" stroke-width="0.7"/><polygon points="1384.4,403.1 1002.8,-22.7 998.4,-11.3 1383.8,404.5" fill="#009929" stroke="#009929" stroke-width="0.7"/><polygon points="1383.8,404.5 998.4,-11.3 993.9,0.2 1383.2,406.0" fill="#00992a" stroke="#00992a" stroke-width="0.7"/><polygon points="1383.2,406.0 993.9,0.2 989.5,11.7 1382.7,407.4" fill="#00992c" stroke="#00992c" stroke-width="0.7"/><polygon points="1382.7,407.4 989.5,11.7 985.1,23.1 1382.1,408.8" fill="#00992d" stroke="#00992d" stroke-width="0.7"/><polygon points="1382.1,408.8 985.1,23.1 980.6,34.6 1381.6,410.3" fill="#00992f" stroke="#00992f" stroke-width="0.7"/><polygon points="1381.6,410.3 980.6,34.6 976.2,46.1 1381.0,411.7" fill="#009930" stroke="#009930" stroke-width="0.7"/><polygon points="1381.0,411.7 976.2,46.1 971.8,57.5 1380.5,413.1" fill="#009932" stroke="#009932" stroke-width="0.7"/><polygon points="1380.5,413.1 971.8,57.5 967.3,69.0 1379.9,414.6" fill="#009934" stroke="#009934" stroke-width="0.7"/><polygon points="1379.9,414.6 967.3,69.0 962.9,80.5 1379.4,416.0" fill="#009936" stroke="#009936" stroke-width="0.7"/><polygon points="1379.4,416.0 962.9,80.5 958.5,91.9 1378.8,417.4" fill="#009937" stroke="#009937" stroke-width="0.7"/><polygon points="1378.8,417.4 958.5,91.9 954.0,103.4 1378.3,418.9" fill="#009939" stroke="#009939" stroke-width="0.7"/><polygon points="1378.3,418.9 954.0,103.4 949.6,114.9 1377.7,420.3" fill="#00993b" stroke="#00993b" stroke-width="0.7"/><polygon points="1377.7,420.3 949.6,114.9 945.2,126.3 1377.2,421.7" fill="#00993d" stroke="#00993d" stroke-width="0.7"/><polygon points="1377.2,421.7 945.2,126.3 940.7,137.8 1376.6,423.2" fill="#00993f" stroke="#00993f" stroke-width="0.7"/><polygon points="1376.6,423.2 940.7,137.8 936.3,149.2 1376.0,424.6" fill="#009941" stroke="#009941" stroke-width="0.7"/><polygon points="1376.0,424.6 936.3,149.2 931.9,160.7 1375.5,426.0" fill="#009943" stroke="#009943" stroke-width="0.7"/><polygon points="1375.5,426.0 931.9,160.7 927.4,172.2 1374.9,427.5" fill="#009945" stroke="#009945" stroke-width="0.7"/><polygon points="1374.9,427.5 927.4,172.2 923.0,183.6 1374.4,428.9" fill="#009947" stroke="#009947" stroke-width="0.7"/><polygon points="1374.4,428.9 923.0,183.6 918.6,195.1 1373.8,430.3" fill="#00994a" stroke="#00994a" stroke-width="0.7"/><polygon points="1373.8,430.3 918.6,195.1 914.1,206.6 1373.3,431.8" fill="#00994c" stroke="#00994c" stroke-width="0.7"/><polygon points="1373.3,431.8 914.1,206.6 909.7,218.0 1372.7,433.2" fill="#00994e" stroke="#00994e" stroke-width="0.7"/><polygon points="1372.7,433.2 909.7,218.0 905.2,229.5 1372.2,434.6" fill="#009951" stroke="#009951" stroke-width="0.7"/><polygon points="1372.2,434.6 905.2,229.5 900.8,241.0 1371.6,436.1" fill="#009953" stroke="#009953" stroke-width="0.7"/><polygon points="1371.6,436.1 900.8,241.0 896.4,252.4 1371.1,437.5" fill="#009956" stroke="#009956" stroke-width="0.7"/><polygon points="1371.1,437.5 896.4,252.4 891.9,263.9 1370.5,438.9" fill="#009959" stroke="#009959" stroke-width="0.7"/><polygon points="1370.5,438.9 891.9,263.9 887.5,275.4 1369.9,440.4" fill="#00995b" stroke="#00995b" stroke-width="0.7"/><polygon points="1369.9,440.4 887.5,275.4 883.1,286.8 1369.4,441.8" fill="#00995e" stroke="#00995e" stroke-width="0.7"/><polygon points="1369.4,441.8 883.1,286.8 878.6,298.3 1368.8,443.2" fill="#009961" stroke="#009961" stroke-width="0.7"/><polygon points="1368.8,443.2 878.6,298.3 874.2,309.8 1368.3,444.7" fill="#009964" stroke="#009964" stroke-width="0.7"/><polygon points="1368.3,444.7 874.2,309.8 869.8,321.2 1367.7,446.1" fill="#009967" stroke="#009967" stroke-width="0.7"/><polygon points="1367.7,446.1 869.8,321.2 865.3,332.7 1367.2,447.5" fill="#00996a" stroke="#00996a" stroke-width="0.7"/><polygon points="1367.2,447.5 865.3,332.7 860.9,344.2 1366.6,449.0" fill="#00996e" stroke="#00996e" stroke-width="0.7"/><polygon points="1366.6,449.0 860.9,344.2 856.5,355.6 1366.1,450.4" fill="#009971" stroke="#009971" stroke-width="0.7"/><polygon points="1366.1,450.4 856.5,355.6 852.0,367.1 1365.5,451.8" fill="#009974" stroke="#009974" stroke-width="0.7"/><polygon points="1365.5,451.8 852.0,367.1 847.6,378.6 1365.0,453.3" fill="#009978" stroke="#009978" stroke-width="0.7"/><polygon points="1365.0,453.3 847.6,378.6 843.2,390.0 1364.4,454.7" fill="#00997c" stroke="#00997c" stroke-width="0.7"/><polygon points="1364.4,454.7 843.2,390.0 838.7,401.5 1363.8,456.1" fill="#00997f" stroke="#00997f" stroke-width="0.7"/><polygon points="1363.8,456.1 838.7,401.5 834.3,413.0 1363.3,457.6" fill="#009983" stroke="#009983" stroke-width="0.7"/><polygon points="1363.3,457.6 834.3,413.0 829.9,424.4 1362.7,459.0" fill="#009987" stroke="#009987" stroke-width="0.7"/><polygon points="1362.7,459.0 829.9,424.4 825.4,435.9 1362.2,460.4" fill="#00998b" stroke="#00998b" stroke-width="0.7"/><polygon points="1362.2,460.4 825.4,435.9 821.0,447.4 1361.6,461.9" fill="#009990" stroke="#009990" stroke-width="0.7"/><polygon points="1361.6,461.9 821.0,447.4 816.5,458.8 1361.1,463.3" fill="#009994" stroke="#009994" stroke-width="0.7"/><polygon points="1361.1,463.3 816.5,458.8 812.1,470.3 1360.5,464.7" fill="#009998" stroke="#009998" stroke-width="0.7"/><polygon points="1360.5,464.7 812.1,470.3 807.7,481.8 1360.0,466.2" fill="#009599" stroke="#009599" stroke-width="0.7"/><polygon points="1360.0,466.2 807.7,481.8 803.2,493.2 1359.4,467.6" fill="#009199" stroke="#009199" stroke-width="0.7"/><polygon points="1359.4,467.6 803.2,493.2 798.8,504.7 1358.9,469.0" fill="#008c99" stroke="#008c99" stroke-width="0.7"/><polygon points="1358.9,469.0 798.8,504.7 794.4,516.2 1358.3,470.5" fill="#008899" stroke="#008899" stroke-width="0.7"/><polygon points="1358.3,470.5 794.4,516.2 789.9,527.6 1357.7,471.9" fill="#008499" stroke="#008499" stroke-width="0.7"/><polygon points="1357.7,471.9 789.9,527.6 785.5,539.1 1357.2,473.3" fill="#008099" stroke="#008099" stroke-width="0.7"/><polygon points="1357.2,473.3 785.5,539.1 781.1,550.6 1356.6,474.8" fill="#007c99" stroke="#007c99" stroke-width="0.7"/><polygon points="1356.6,474.8 781.1,550.6 776.6,562.0 1356.1,476.2" fill="#007999" stroke="#007999" stroke-width="0.7"/><polygon points="1356.1,476.2 776.6,562.0 772.2,573.5 1355.5,477.6" fill="#007599" stroke="#007599" stroke-width="0.7"/><polygon points="1355.5,477.6 772.2,573.5 767.8,585.0 1355.0,479.1" fill="#007299" stroke="#007299" stroke-width="0.7"/><polygon points="1355.0,479.1 767.8,585.0 763.3,596.4 1354.4,480.5" fill="#006e99" stroke="#006e99" stroke-width="0.7"/><polygon points="1354.4,480.5 763.3,596.4 758.9,607.9 1353.9,481.9" fill="#006b99" stroke="#006b99" stroke-width="0.7"/><polygon points="1353.9,481.9 758.9,607.9 754.5,619.4 1353.3,483.4" fill="#006899" stroke="#006899" stroke-width="0.7"/><polygon points="1353.3,483.4 754.5,619.4 750.0,630.8 1352.8,484.8" fill="#006599" stroke="#006599" stroke-width="0.7"/><polygon points="1352.8,484.8 750.0,630.8 745.6,642.3 1352.2,486.2" fill="#006299" stroke="#006299" stroke-width="0.7"/><polygon points="1352.2,486.2 745.6,642.3 741.2,653.8 1351.7,487.7" fill="#005f99" stroke="#005f99" stroke-width="0.7"/><polygon points="1351.7,487.7 741.2,653.8 736.7,665.2 1351.1,489.1" fill="#005c99" stroke="#005c99" stroke-width="0.7"/><polygon points="1351.1,489.1 736.7,665.2 732.3,676.7 1350.5,490.5" fill="#005999" stroke="#005999" stroke-width="0.7"/><polygon points="1350.5,490.5 732.3,676.7 727.8,688.2 1350.0,492.0" fill="#005699" stroke="#005699" stroke-width="0.7"/><polygon points="1350.0,492.0 727.8,688.2 723.4,699.6 1349.4,493.4" fill="#005499" stroke="#005499" stroke-width="0.7"/><polygon points="1349.4,493.4 723.4,699.6 719.0,711.1 1348.9,494.8" fill="#005199" stroke="#005199" stroke-width="0.7"/><polygon points="1348.9,494.8 719.0,711.1 714.5,722.5 1348.3,496.3" fill="#004f99" stroke="#004f99" stroke-width="0.7"/><polygon points="1348.3,496.3 714.5,722.5 710.1,734.0 1347.8,497.7" fill="#004c99" stroke="#004c99" stroke-width="0.7"/><polygon points="1347.8,497.7 710.1,734.0 705.7,745.5 1347.2,499.1" fill="#004a99" stroke="#004a99" stroke-width="0.7"/><polygon points="1347.2,499.1 705.7,745.5 701.2,756.9 1346.7,500.6" fill="#004899" stroke="#004899" stroke-width="0.7"/><polygon points="1346.7,500.6 701.2,756.9 696.8,768.4 1346.1,502.0" fill="#004599" stroke="#004599" stroke-width="0.7"/><polygon points="1346.1,502.0 696.8,768.4 692.4,779.9 1345.6,503.4" fill="#004399" stroke="#004399" stroke-width="0.7"/><polygon points="1345.6,503.4 692.4,779.9 687.9,791.3 1345.0,504.9" fill="#004199" stroke="#004199" stroke-width="0.7"/><polygon points="1345.0,504.9 687.9,791.3 683.5,802.8 1344.4,506.3" fill="#003f99" stroke="#003f99" stroke-width="0.7"/><polygon points="1344.4,506.3 683.5,802.8 679.1,814.3 1343.9,507.7" fill="#003d99" stroke="#003d99" stroke-width="0.7"/><polygon points="1343.9,507.7 679.1,814.3 674.6,825.7 1343.3,509.2" fill="#003b99" stroke="#003b99" stroke-width="0.7"/><polygon points="1343.3,509.2 674.6,825.7 670.2,837.2 1342.8,510.6" fill="#003999" stroke="#003999" stroke-width="0.7"/><polygon points="1342.8,510.6 670.2,837.2 665.8,848.7 1342.2,512.0" fill="#003799" stroke="#003799" stroke-width="0.7"/><polygon points="1342.2,512.0 665.8,848.7 661.3,860.1 1341.7,513.5" fill="#003699" stroke="#003699" stroke-width="0.7"/><polygon points="1341.7,513.5 661.3,860.1 656.9,871.6 1341.1,514.9" fill="#003499" stroke="#003499" stroke-width="0.7"/><polygon points="1341.1,514.9 656.9,871.6 652.5,883.1 1340.6,516.3" fill="#003299" stroke="#003299" stroke-width="0.7"/><polygon points="1340.6,516.3 652.5,883.1 648.0,894.5 1340.0,517.8" fill="#003199" stroke="#003199" stroke-width="0.7"/><polygon points="1340.0,517.8 648.0,894.5 643.6,906.0 1339.5,519.2" fill="#002f99" stroke="#002f99" stroke-width="0.7"/><polygon points="1339.5,519.2 643.6,906.0 639.1,917.5 1338.9,520.6" fill="#002e99" stroke="#002e99" stroke-width="0.7"/><polygon points="1338.9,520.6 639.1,917.5 634.7,928.9 1338.3,522.1" fill="#002c99" stroke="#002c99" stroke-width="0.7"/><polygon points="1338.3,522.1 634.7,928.9 630.3,940.4 1337.8,523.5" fill="#002b99" stroke="#002b99" stroke-width="0.7"/><polygon points="1337.8,523.5 630.3,940.4 625.8,951.9 1337.2,524.9" fill="#002999" stroke="#002999" stroke-width="0.7"/><polygon points="1337.2,524.9 625.8,951.9 621.4,963.3 1336.7,526.4" fill="#002899" stroke="#002899" stroke-width="0.7"/><polygon points="1336.7,526.4 621.4,963.3 617.0,974.8 1336.1,527.8" fill="#002699" stroke="#002699" stroke-width="0.7"/><polygon points="1336.1,527.8 617.0,974.8 612.5,986.3 1335.6,529.2" fill="#002599" stroke="#002599" stroke-width="0.7"/><polygon points="1335.6,529.2 612.5,986.3 608.1,997.7 1335.0,530.7" fill="#002499" stroke="#002499" stroke-width="0.7"/><polygon points="1335.0,530.7 608.1,997.7 603.7,1009.2 1334.5,532.1" fill="#002399" stroke="#002399" stroke-width="0.7"/><polygon points="1334.5,532.1 603.7,1009.2 599.2,1020.7 1333.9,533.5" fill="#002199" stroke="#002199" stroke-width="0.7"/><polygon points="1333.9,533.5 599.2,1020.7 594.8,1032.1 1333.4,535.0" fill="#002099" stroke="#002099" stroke-width="0.7"/><polygon points="1333.4,535.0 594.8,1032.1 590.4,1043.6 1332.8,536.4" fill="#001f99" stroke="#001f99" stroke-width="0.7"/><polygon points="1332.8,536.4 590.4,1043.6 585.9,1055.1 1332.2,537.8" fill="#001e99" stroke="#001e99" stroke-width="0.7"/><polygon points="1332.2,537.8 585.9,1055.1 581.5,1066.5 1331.7,539.3" fill="#001d99" stroke="#001d99" stroke-width="0.7"/><polygon points="1331.7,539.3 581.5,1066.5 577.1,1078.0 1331.1,540.7" fill="#001c99" stroke="#001c99" stroke-width="0.7"/><polygon points="1331.1,540.7 577.1,1078.0 572.6,1089.5 1330.6,542.1" fill="#001b99" stroke="#001b99" stroke-width="0.7"/><polygon points="1330.6,542.1 572.6,1089.5 568.2,1100.9 1330.0,543.6" fill="#001a99" stroke="#001a99" stroke-width="0.7"/><polygon points="1330.0,543.6 568.2,1100.9 563.8,1112.4 1329.5,545.0" fill="#001999" stroke="#001999" stroke-width="0.7"/><polygon points="1329.5,545.0 563.8,1112.4 559.3,1123.9 1328.9,546.4" fill="#001899" stroke="#001899" stroke-width="0.7"/><polygon points="1328.9,546.4 559.3,1123.9 554.9,1135.3 1328.4,547.9" fill="#001799" stroke="#001799" stroke-width="0.7"/><polygon points="1328.4,547.9 554.9,1135.3 550.4,1146.8 1327.8,549.3" fill="#001699" stroke="#001699" stroke-width="0.7"/><polygon points="1327.8,549.3 550.4,1146.8 546.0,1158.3 1327.3,550.7" fill="#001599" stroke="#001599" stroke-width="0.7"/><polygon points="1327.3,550.7 546.0,1158.3 541.6,1169.7 1326.7,552.2" fill="#001499" stroke="#001499" stroke-width="0.7"/><polygon points="1326.7,552.2 541.6,1169.7 537.1,1181.2 1326.1,553.6" fill="#001399" stroke="#001399" stroke-width="0.7"/><polygon points="1326.1,553.6 537.1,1181.2 532.7,1192.7 1325.6,555.0" fill="#001399" stroke="#001399" stroke-width="0.7"/><polygon points="1325.6,555.0 532.7,1192.7 528.3,1204.1 1325.0,556.5" fill="#001299" stroke="#001299" stroke-width="0.7"/><polygon points="1325.0,556.5 528.3,1204.1 523.8,1215.6 1324.5,557.9" fill="#001199" stroke="#001199" stroke-width="0.7"/><polygon points="1324.5,557.9 523.8,1215.6 519.4,1227.1 1323.9,559.3" fill="#001099" stroke="#001099" stroke-width="0.7"/><polygon points="1323.9,559.3 519.4,1227.1 515.0,1238.5 1323.4,560.8" fill="#001099" stroke="#001099" stroke-width="0.7"/><polygon points="1323.4,560.8 515.0,1238.5 510.5,1250.0 1322.8,562.2" fill="#000f99" stroke="#000f99" stroke-width="0.7"/><polygon points="1322.8,562.2 510.5,1250.0 506.1,1261.5 1322.3,563.6" fill="#000e99" stroke="#000e99" stroke-width="0.7"/><polygon points="1322.3,563.6 506.1,1261.5 501.7,1272.9 1321.7,565.1" fill="#000e99" stroke="#000e99" stroke-width="0.7"/><polygon points="1321.7,565.1 501.7,1272.9 497.2,1284.4 1321.2,566.5" fill="#000d99" stroke="#000d99" stroke-width="0.7"/><polygon points="1321.2,566.5 497.2,1284.4 492.8,1295.8 1320.6,567.9" fill="#000d99" stroke="#000d99" stroke-width="0.7"/><polygon points="1320.6,567.9 492.8,1295.8 488.4,1307.3 1320.1,569.4" fill="#000c99" stroke="#000c99" stroke-width="0.7"/><polygon points="1320.1,569.4 488.4,1307.3 483.9,1318.8 1319.5,570.8" fill="#000b99" stroke="#000b99" stroke-width="0.7"/><polygon points="1319.5,570.8 483.9,1318.8 479.5,1330.2 1318.9,572.2" fill="#000b99" stroke="#000b99" stroke-width="0.7"/><polygon points="1318.9,572.2 479.5,1330.2 475.1,1341.7 1318.4,573.7" fill="#000a99" stroke="#000a99" stroke-width="0.7"/><polygon points="1318.4,573.7 475.1,1341.7 470.6,1353.2 1317.8,575.1" fill="#000a99" stroke="#000a99" stroke-width="0.7"/><polygon points="1317.8,575.1 470.6,1353.2 466.2,1364.6 1317.3,576.5" fill="#000999" stroke="#000999" stroke-width="0.7"/><polygon points="1317.3,576.5 466.2,1364.6 461.7,1376.1 1316.7,577.9" fill="#000999" stroke="#000999" stroke-width="0.7"/><polygon points="1316.7,577.9 461.7,1376.1 457.3,1387.6 1316.2,579.4" fill="#000899" stroke="#000899" stroke-width="0.7"/><polygon points="1316.2,579.4 457.3,1387.6 452.9,1399.0 1315.6,580.8" fill="#000899" stroke="#000899" stroke-width="0.7"/><polygon points="1315.6,580.8 452.9,1399.0 448.4,1410.5 1315.1,582.2" fill="#000799" stroke="#000799" stroke-width="0.7"/><polygon points="1315.1,582.2 448.4,1410.5 444.0,1422.0 1314.5,583.7" fill="#000799" stroke="#000799" stroke-width="0.7"/><polygon points="1314.5,583.7 444.0,1422.0 439.6,1433.4 1314.0,585.1" fill="#000799" stroke="#000799" stroke-width="0.7"/><polygon points="1314.0,585.1 439.6,1433.4 435.1,1444.9 1313.4,586.5" fill="#000699" stroke="#000699" stroke-width="0.7"/><polygon points="1313.4,586.5 435.1,1444.9 430.7,1456.4 1312.8,588.0" fill="#000699" stroke="#000699" stroke-width="0.7"/><polygon points="1312.8,588.0 430.7,1456.4 426.3,1467.8 1312.3,589.4" fill="#000699" stroke="#000699" stroke-width="0.7"/><polygon points="1312.3,589.4 426.3,1467.8 421.8,1479.3 1311.7,590.8" fill="#000599" stroke="#000599" stroke-width="0.7"/><polygon points="1311.7,590.8 421.8,1479.3 417.4,1490.8 1311.2,592.3" fill="#000599" stroke="#000599" stroke-width="0.7"/><polygon points="1311.2,592.3 417.4,1490.8 413.0,1502.2 1310.6,593.7" fill="#000599" stroke="#000599" stroke-width="0.7"/><polygon points="1310.6,593.7 413.0,1502.2 408.5,1513.7 1310.1,595.1" fill="#000499" stroke="#000499" stroke-width="0.7"/><polygon points="1310.1,595.1 408.5,1513.7 404.1,1525.2 1309.5,596.6" fill="#000499" stroke="#000499" stroke-width="0.7"/><polygon points="1309.5,596.6 404.1,1525.2 399.7,1536.6 1309.0,598.0" fill="#000499" stroke="#000499" stroke-width="0.7"/><polygon points="1309.0,598.0 399.7,1536.6 395.2,1548.1 1308.4,599.4" fill="#000399" stroke="#000399" stroke-width="0.7"/><polygon points="1308.4,599.4 395.2,1548.1 390.8,1559.6 1307.9,600.9" fill="#000399" stroke="#000399" stroke-width="0.7"/><polygon points="1307.9,600.9 390.8,1559.6 386.4,1571.0 1307.3,602.3" fill="#000399" stroke="#000399" stroke-width="0.7"/><polygon points="1307.3,602.3 386.4,1571.0 381.9,1582.5 1306.7,603.7" fill="#000399" stroke="#000399" stroke-width="0.7"/><polygon points="1306.7,603.7 381.9,1582.5 377.5,1594.0 1306.2,605.2" fill="#000299" stroke="#000299" stroke-width="0.7"/><polygon points="1306.2,605.2 377.5,1594.0 373.0,1605.4 1305.6,606.6" fill="#000299" stroke="#000299" stroke-width="0.7"/><polygon points="1305.6,606.6 373.0,1605.4 368.6,1616.9 1305.1,608.0" fill="#000299" stroke="#000299" stroke-width="0.7"/><polygon points="1305.1,608.0 368.6,1616.9 364.2,1628.4 1304.5,609.5" fill="#000299" stroke="#000299" stroke-width="0.7"/><polygon points="1304.5,609.5 364.2,1628.4 359.7,1639.8 1304.0,610.9" fill="#000299" stroke="#000299" stroke-width="0.7"/><polygon points="1304.0,610.9 359.7,1639.8 355.3,1651.3 1303.4,612.3" fill="#000199" stroke="#000199" stroke-width="0.7"/><polygon points="1303.4,612.3 355.3,1651.3 350.9,1662.8 1302.9,613.8" fill="#000199" stroke="#000199" stroke-width="0.7"/><polygon points="1302.9,613.8 350.9,1662.8 346.4,1674.2 1302.3,615.2" fill="#000199" stroke="#000199" stroke-width="0.7"/><polygon points="1302.3,615.2 346.4,1674.2 342.0,1685.7 1301.8,616.6" fill="#000199" stroke="#000199" stroke-width="0.7"/><polygon points="1301.8,616.6 342.0,1685.7 337.6,1697.2 1301.2,618.1" fill="#000199" stroke="#000199" stroke-width="0.7"/><polygon points="1301.2,618.1 337.6,1697.2 333.1,1708.6 1300.6,619.5" fill="#000199" stroke="#000199" stroke-width="0.7"/><polygon points="1300.6,619.5 333.1,1708.6 328.7,1720.1 1300.1,620.9" fill="#000199" stroke="#000199" stroke-width="0.7"/><polygon points="1300.1,620.9 328.7,1720.1 324.3,1731.6 1299.5,622.4" fill="#000199" stroke="#000199" stroke-width="0.7"/><polygon points="1299.5,622.4 324.3,1731.6 319.8,1743.0 1299.0,623.8" fill="#000099" stroke="#000099" stroke-width="0.7"/><polygon points="1299.0,623.8 319.8,1743.0 315.4,1754.5 1298.4,625.2" fill="#000099" stroke="#000099" stroke-width="0.7"/><polygon points="1298.4,625.2 315.4,1754.5 311.0,1766.0 1297.9,626.7" fill="#000099" stroke="#000099" stroke-width="0.7"/><polygon points="1297.9,626.7 311.0,1766.0 306.5,1777.4 1297.3,628.1" fill="#000099" stroke="#000099" stroke-width="0.7"/><polygon points="1297.3,628.1 306.5,1777.4 302.1,1788.9 1296.8,629.5" fill="#000099" stroke="#000099" stroke-width="0.7"/><polygon points="1296.8,629.5 302.1,1788.9 297.7,1800.4 1296.2,631.0" fill="#000099" stroke="#000099" stroke-width="0.7"/><polygon points="1296.2,631.0 297.7,1800.4 293.2,1811.8 1295.7,632.4" fill="#000099" stroke="#000099" stroke-width="0.7"/><polygon points="1295.7,632.4 293.2,1811.8 288.8,1823.3 1295.1,633.8" fill="#000099" stroke="#000099" stroke-width="0.7"/><polygon points="1295.1,633.8 288.8,1823.3 284.3,1834.8 1294.5,635.3" fill="#000099" stroke="#000099" stroke-width="0.7"/><polygon points="1294.5,635.3 284.3,1834.8 298.8,1829.0 1296.4,634.6" fill="#010099" stroke="#010099" stroke-width="0.7"/><polygon points="1296.4,634.6 298.8,1829.0 313.3,1823.3 1298.2,633.8" fill="#020099" stroke="#020099" stroke-width="0.7"/><polygon points="1298.2,633.8 313.3,1823.3 327.8,1817.6 1300.0,633.1" fill="#030099" stroke="#030099" stroke-width="0.7"/><polygon points="1300.0,633.1 327.8,1817.6 342.3,1811.8 1301.8,632.4" fill="#040099" stroke="#040099" stroke-width="0.7"/><polygon points="1301.8,632.4 342.3,1811.8 356.8,1806.1 1303.6,631.7" fill="#050099" stroke="#050099" stroke-width="0.7"/><polygon points="1303.6,631.7 356.8,1806.1 371.3,1800.4 1305.4,631.0" fill="#070099" stroke="#070099" stroke-width="0.7"/><polygon points="1305.4,631.0 371.3,1800.4 385.8,1794.6 1307.2,630.3" fill="#080099" stroke="#080099" stroke-width="0.7"/><polygon points="1307.2,630.3 385.8,1794.6 400.2,1788.9 1309.0,629.5" fill="#090099" stroke="#090099" stroke-width="0.7"/><polygon points="1309.0,629.5 400.2,1788.9 414.7,1783.2 1310.8,628.8" fill="#0a0099" stroke="#0a0099" stroke-width="0.7"/><polygon points="1310.8,628.8 414.7,1783.2 429.2,1777.4 1312.7,628.1" fill="#0c0099" stroke="#0c0099" stroke-width="0.7"/><polygon points="1312.7,628.1 429.2,1777.4 443.7,1771.7 1314.5,627.4" fill="#0d0099" stroke="#0d0099" stroke-width="0.7"/><polygon points="1314.5,627.4 443.7,1771.7 458.2,1766.0 1316.3,626.7" fill="#0e0099" stroke="#0e0099" stroke-width="0.7"/><polygon points="1316.3,626.7 458.2,1766.0 472.7,1760.2 1318.1,626.0" fill="#100099" stroke="#100099" stroke-width="0.7"/><polygon points="1318.1,626.0 472.7,1760.2 487.2,1754.5 1319.9,625.2" fill="#110099" stroke="#110099" stroke-width="0.7"/><polygon points="1319.9,625.2 487.2,1754.5 501.7,1748.8 1321.7,624.5" fill="#120099" stroke="#120099" stroke-width="0.7"/><polygon points="1321.7,624.5 501.7,1748.8 516.1,1743.0 1323.5,623.8" fill="#140099" stroke="#140099" stroke-width="0.7"/><polygon points="1323.5,623.8 516.1,1743.0 530.6,1737.3 1325.3,623.1" fill="#150099" stroke="#150099" stroke-width="0.7"/><polygon points="1325.3,623.1 530.6,1737.3 545.1,1731.6 1327.1,622.4" fill="#160099" stroke="#160099" stroke-width="0.7"/><polygon points="1327.1,622.4 545.1,1731.6 559.6,1725.8 1329.0,621.7" fill="#180099" stroke="#180099" stroke-width="0.7"/><polygon points="1329.0,621.7 559.6,1725.8 574.1,1720.1 1330.8,620.9" fill="#190099" stroke="#190099" stroke-width="0.7"/><polygon points="1330.8,620.9 574.1,1720.1 588.6,1714.4 1332.6,620.2" fill="#1b0099" stroke="#1b0099" stroke-width="0.7"/><polygon points="1332.6,620.2 588.6,1714.4 603.1,1708.6 1334.4,619.5" fill="#1c0099" stroke="#1c0099" stroke-width="0.7"/><polygon points="1334.4,619.5 603.1,1708.6 617.6,1702.9 1336.2,618.8" fill="#1e0099" stroke="#1e0099" stroke-width="0.7"/><polygon points="1336.2,618.8 617.6,1702.9 632.0,1697.2 1338.0,618.1" fill="#1f0099" stroke="#1f0099" stroke-width="0.7"/><polygon points="1338.0,618.1 632.0,1697.2 646.5,1691.4 1339.8,617.4" fill="#200099" stroke="#200099" stroke-width="0.7"/><polygon points="1339.8,617.4 646.5,1691.4 661.0,1685.7 1341.6,616.6" fill="#220099" stroke="#220099" stroke-width="0.7"/><polygon points="1341.6,616.6 661.0,1685.7 675.5,1680.0 1343.4,615.9" fill="#230099" stroke="#230099" stroke-width="0.7"/><polygon points="1343.4,615.9 675.5,1680.0 690.0,1674.2 1345.3,615.2" fill="#250099" stroke="#250099" stroke-width="0.7"/><polygon points="1345.3,615.2 690.0,1674.2 704.5,1668.5 1347.1,614.5" fill="#270099" stroke="#270099" stroke-width="0.7"/><polygon points="1347.1,614.5 704.5,1668.5 719.0,1662.8 1348.9,613.8" fill="#280099" stroke="#280099" stroke-width="0.7"/><polygon points="1348.9,613.8 719.0,1662.8 733.5,1657.0 1350.7,613.1" fill="#2a0099" stroke="#2a0099" stroke-width="0.7"/><polygon points="1350.7,613.1 733.5,1657.0 748.0,1651.3 1352.5,612.3" fill="#2b0099" stroke="#2b0099" stroke-width="0.7"/><polygon points="1352.5,612.3 748.0,1651.3 762.4,1645.6 1354.3,611.6" fill="#2d0099" stroke="#2d0099" stroke-width="0.7"/><polygon points="1354.3,611.6 762.4,1645.6 776.9,1639.8 1356.1,610.9" fill="#2e0099" stroke="#2e0099" stroke-width="0.7"/><polygon points="1356.1,610.9 776.9,1639.8 791.4,1634.1 1357.9,610.2" fill="#300099" stroke="#300099" stroke-width="0.7"/><polygon points="1357.9,610.2 791.4,1634.1 805.9,1628.4 1359.7,609.5" fill="#320099" stroke="#320099" stroke-width="0.7"/><polygon points="1359.7,609.5 805.9,1628.4 820.4,1622.6 1361.6,608.8" fill="#330099" stroke="#330099" stroke-width="0.7"/><polygon points="1361.6,608.8 820.4,1622.6 834.9,1616.9 1363.4,608.0" fill="#350099" stroke="#350099" stroke-width="0.7"/><polygon points="1363.4,608.0 834.9,1616.9 849.4,1611.2 1365.2,607.3" fill="#370099" stroke="#370099" stroke-width="0.7"/><polygon points="1365.2,607.3 849.4,1611.2 863.9,1605.4 1367.0,606.6" fill="#380099" stroke="#380099" stroke-width="0.7"/><polygon points="1367.0,606.6 863.9,1605.4 878.3,1599.7 1368.8,605.9" fill="#3a0099" stroke="#3a0099" stroke-width="0.7"/><polygon points="1368.8,605.9 878.3,1599.7 892.8,1594.0 1370.6,605.2" fill="#3c0099" stroke="#3c0099" stroke-width="0.7"/><polygon points="1370.6,605.2 892.8,1594.0 907.3,1588.2 1372.4,604.5" fill="#3d0099" stroke="#3d0099" stroke-width="0.7"/><polygon points="1372.4,604.5 907.3,1588.2 921.8,1582.5 1374.2,603.7" fill="#3f0099" stroke="#3f0099" stroke-width="0.7"/><polygon points="1374.2,603.7 921.8,1582.5 936.3,1576.8 1376.0,603.0" fill="#410099" stroke="#410099" stroke-width="0.7"/><polygon points="1376.0,603.0 936.3,1576.8 950.8,1571.0 1377.9,602.3" fill="#430099" stroke="#430099" stroke-width="0.7"/><polygon points="1377.9,602.3 950.8,1571.0 965.3,1565.3 1379.7,601.6" fill="#450099" stroke="#450099" stroke-width="0.7"/><polygon points="1379.7,601.6 965.3,1565.3 979.8,1559.6 1381.5,600.9" fill="#470099" stroke="#470099" stroke-width="0.7"/><polygon points="1381.5,600.9 979.8,1559.6 994.2,1553.8 1383.3,600.2" fill="#480099" stroke="#480099" stroke-width="0.7"/><polygon points="1383.3,600.2 994.2,1553.8 1008.7,1548.1 1385.1,599.4" fill="#4a0099" stroke="#4a0099" stroke-width="0.7"/><polygon points="1385.1,599.4 1008.7,1548.1 1023.2,1542.4 1386.9,598.7" fill="#4c0099" stroke="#4c0099" stroke-width="0.7"/><polygon points="1386.9,598.7 1023.2,1542.4 1037.7,1536.6 1388.7,598.0" fill="#4e0099" stroke="#4e0099" stroke-width="0.7"/><polygon points="1388.7,598.0 1037.7,1536.6 1052.2,1530.9 1390.5,597.3" fill="#500099" stroke="#500099" stroke-width="0.7"/><polygon points="1390.5,597.3 1052.2,1530.9 1066.7,1525.2 1392.3,596.6" fill="#520099" stroke="#520099" stroke-width="0.7"/><polygon points="1392.3,596.6 1066.7,1525.2 1081.2,1519.4 1394.2,595.9" fill="#540099" stroke="#540099" stroke-width="0.7"/><polygon points="1394.2,595.9 1081.2,1519.4 1095.7,1513.7 1396.0,595.1" fill="#560099" stroke="#560099" stroke-width="0.7"/><polygon points="1396.0,595.1 1095.7,1513.7 1110.1,1508.0 1397.8,594.4" fill="#580099" stroke="#580099" stroke-width="0.7"/><polygon points="1397.8,594.4 1110.1,1508.0 1124.6,1502.2 1399.6,593.7" fill="#5a0099" stroke="#5a0099" stroke-width="0.7"/><polygon points="1399.6,593.7 1124.6,1502.2 1139.1,1496.5 1401.4,593.0" fill="#5c0099" stroke="#5c0099" stroke-width="0.7"/><polygon points="1401.4,593.0 1139.1,1496.5 1153.6,1490.8 1403.2,592.3" fill="#5e0099" stroke="#5e0099" stroke-width="0.7"/><polygon points="1403.2,592.3 1153.6,1490.8 1168.1,1485.0 1405.0,591.6" fill="#600099" stroke="#600099" stroke-width="0.7"/><polygon points="1405.0,591.6 1168.1,1485.0 1182.6,1479.3 1406.8,590.8" fill="#620099" stroke="#620099" stroke-width="0.7"/><polygon points="1406.8,590.8 1182.6,1479.3 1197.1,1473.6 1408.6,590.1" fill="#650099" stroke="#650099" stroke-width="0.7"/><polygon points="1408.6,590.1 1197.1,1473.6 1211.6,1467.8 1410.5,589.4" fill="#670099" stroke="#670099" stroke-width="0.7"/><polygon points="1410.5,589.4 1211.6,1467.8 1226.0,1462.1 1412.3,588.7" fill="#690099" stroke="#690099" stroke-width="0.7"/><polygon points="1412.3,588.7 1226.0,1462.1 1240.5,1456.4 1414.1,588.0" fill="#6b0099" stroke="#6b0099" stroke-width="0.7"/><polygon points="1414.1,588.0 1240.5,1456.4 1255.0,1450.6 1415.9,587.3" fill="#6e0099" stroke="#6e0099" stroke-width="0.7"/><polygon points="1415.9,587.3 1255.0,1450.6 1269.5,1444.9 1417.7,586.5" fill="#700099" stroke="#700099" stroke-width="0.7"/><polygon points="1417.7,586.5 1269.5,1444.9 1284.0,1439.2 1419.5,585.8" fill="#720099" stroke="#720099" stroke-width="0.7"/><polygon points="1419.5,585.8 1284.0,1439.2 1298.5,1433.4 1421.3,585.1" fill="#740099" stroke="#740099" stroke-width="0.7"/><polygon points="1421.3,585.1 1298.5,1433.4 1313.0,1427.7 1423.1,584.4" fill="#770099" stroke="#770099" stroke-width="0.7"/><polygon points="1423.1,584.4 1313.0,1427.7 1327.5,1422.0 1424.9,583.7" fill="#790099" stroke="#790099" stroke-width="0.7"/><polygon points="1424.9,583.7 1327.5,1422.0 1341.9,1416.2 1426.7,583.0" fill="#7c0099" stroke="#7c0099" stroke-width="0.7"/><polygon points="1426.7,583.0 1341.9,1416.2 1356.4,1410.5 1428.6,582.2" fill="#7e0099" stroke="#7e0099" stroke-width="0.7"/><polygon points="1428.6,582.2 1356.4,1410.5 1370.9,1404.8 1430.4,581.5" fill="#810099" stroke="#810099" stroke-width="0.7"/><polygon points="1430.4,581.5 1370.9,1404.8 1385.4,1399.0 1432.2,580.8" fill="#830099" stroke="#830099" stroke-width="0.7"/><polygon points="1432.2,580.8 1385.4,1399.0 1399.9,1393.3 1434.0,580.1" fill="#860099" stroke="#860099" stroke-width="0.7"/><polygon points="1434.0,580.1 1399.9,1393.3 1414.4,1387.6 1435.8,579.4" fill="#880099" stroke="#880099" stroke-width="0.7"/><polygon points="1435.8,579.4 1414.4,1387.6 1428.9,1381.8 1437.6,578.7" fill="#8b0099" stroke="#8b0099" stroke-width="0.7"/><polygon points="1437.6,578.7 1428.9,1381.8 1443.4,1376.1 1439.4,578.0" fill="#8e0099" stroke="#8e0099" stroke-width="0.7"/><polygon points="1439.4,578.0 1443.4,1376.1 1457.8,1370.4 1441.2,577.2" fill="#900099" stroke="#900099" stroke-width="0.7"/><polygon points="1441.2,577.2 1457.8,1370.4 1472.3,1364.6 1443.0,576.5" fill="#930099" stroke="#930099" stroke-width="0.7"/><polygon points="1443.0,576.5 1472.3,1364.6 1486.8,1358.9 1444.9,575.8" fill="#960099" stroke="#960099" stroke-width="0.7"/><polygon points="1444.9,575.8 1486.8,1358.9 1501.3,1353.2 1446.7,575.1" fill="#980099" stroke="#980099" stroke-width="0.7"/><polygon points="1446.7,575.1 1501.3,1353.2 1515.8,1347.4 1448.5,574.4" fill="#990097" stroke="#990097" stroke-width="0.7"/><polygon points="1448.5,574.4 1515.8,1347.4 1530.3,1341.7 1450.3,573.7" fill="#990094" stroke="#990094" stroke-width="0.7"/><polygon points="1450.3,573.7 1530.3,1341.7 1544.8,1336.0 1452.1,572.9" fill="#990091" stroke="#990091" stroke-width="0.7"/><polygon points="1452.1,572.9 1544.8,1336.0 1559.3,1330.2 1453.9,572.2" fill="#99008f" stroke="#99008f" stroke-width="0.7"/><polygon points="1453.9,572.2 1559.3,1330.2 1573.7,1324.5 1455.7,571.5" fill="#99008c" stroke="#99008c" stroke-width="0.7"/><polygon points="1455.7,571.5 1573.7,1324.5 1588.2,1318.8 1457.5,570.8" fill="#99008a" stroke="#99008a" stroke-width="0.7"/><polygon points="1457.5,570.8 1588.2,1318.8 1602.7,1313.0 1459.3,570.1" fill="#990087" stroke="#990087" stroke-width="0.7"/><polygon points="1459.3,570.1 1602.7,1313.0 1617.2,1307.3 1461.2,569.4" fill="#990085" stroke="#990085" stroke-width="0.7"/><polygon points="1461.2,569.4 1617.2,1307.3 1631.7,1301.6 1463.0,568.6" fill="#990083" stroke="#990083" stroke-width="0.7"/><polygon points="1463.0,568.6 1631.7,1301.6 1646.2,1295.8 1464.8,567.9" fill="#990080" stroke="#990080" stroke-width="0.7"/><polygon points="1464.8,567.9 1646.2,1295.8 1660.7,1290.1 1466.6,567.2" fill="#99007e" stroke="#99007e" stroke-width="0.7"/><polygon points="1466.6,567.2 1660.7,1290.1 1675.2,1284.4 1468.4,566.5" fill="#99007c" stroke="#99007c" stroke-width="0.7"/><polygon points="1468.4,566.5 1675.2,1284.4 1689.6,1278.6 1470.2,565.8" fill="#99007a" stroke="#99007a" stroke-width="0.7"/><polygon points="1470.2,565.8 1689.6,1278.6 1704.1,1272.9 1472.0,565.1" fill="#990078" stroke="#990078" stroke-width="0.7"/><polygon points="1472.0,565.1 1704.1,1272.9 1718.6,1267.2 1473.8,564.3" fill="#990076" stroke="#990076" stroke-width="0.7"/><polygon points="1473.8,564.3 1718.6,1267.2 1733.1,1261.5 1475.6,563.6" fill="#990074" stroke="#990074" stroke-width="0.7"/><polygon points="1475.6,563.6 1733.1,1261.5 1747.6,1255.7 1477.5,562.9" fill="#990072" stroke="#990072" stroke-width="0.7"/><polygon points="1477.5,562.9 1747.6,1255.7 1762.1,1250.0 1479.3,562.2" fill="#990070" stroke="#990070" stroke-width="0.7"/><polygon points="1479.3,562.2 1762.1,1250.0 1776.6,1244.3 1481.1,561.5" fill="#99006e" stroke="#99006e" stroke-width="0.7"/><polygon points="1481.1,561.5 1776.6,1244.3 1791.1,1238.5 1482.9,560.8" fill="#99006c" stroke="#99006c" stroke-width="0.7"/><polygon points="1482.9,560.8 1791.1,1238.5 1805.6,1232.8 1484.7,560.0" fill="#99006a" stroke="#99006a" stroke-width="0.7"/><polygon points="1484.7,560.0 1805.6,1232.8 1820.0,1227.1 1486.5,559.3" fill="#990068" stroke="#990068" stroke-width="0.7"/><polygon points="1486.5,559.3 1820.0,1227.1 1834.5,1221.3 1488.3,558.6" fill="#990067" stroke="#990067" stroke-width="0.7"/><polygon points="1488.3,558.6 1834.5,1221.3 1849.0,1215.6 1490.1,557.9" fill="#990065" stroke="#990065" stroke-width="0.7"/><polygon points="1490.1,557.9 1849.0,1215.6 1863.5,1209.9 1491.9,557.2" fill="#990063" stroke="#990063" stroke-width="0.7"/><polygon points="1491.9,557.2 1863.5,1209.9 1878.0,1204.1 1493.8,556.5" fill="#990062" stroke="#990062" stroke-width="0.7"/><polygon points="1493.8,556.5 1878.0,1204.1 1892.5,1198.4 1495.6,555.7" fill="#990060" stroke="#990060" stroke-width="0.7"/><polygon points="1495.6,555.7 1892.5,1198.4 1907.0,1192.7 1497.4,555.0" fill="#99005e" stroke="#99005e" stroke-width="0.7"/><polygon points="1497.4,555.0 1907.0,1192.7 1921.5,1186.9 1499.2,554.3" fill="#99005d" stroke="#99005d" stroke-width="0.7"/><polygon points="1499.2,554.3 1921.5,1186.9 1935.9,1181.2 1501.0,553.6" fill="#99005b" stroke="#99005b" stroke-width="0.7"/><polygon points="1501.0,553.6 1935.9,1181.2 1950.4,1175.5 1502.8,552.9" fill="#99005a" stroke="#99005a" stroke-width="0.7"/><polygon points="1502.8,552.9 1950.4,1175.5 1964.9,1169.7 1504.6,552.2" fill="#990058" stroke="#990058" stroke-width="0.7"/><polygon points="1504.6,552.2 1964.9,1169.7 1979.4,1164.0 1506.4,551.4" fill="#990057" stroke="#990057" stroke-width="0.7"/><polygon points="1506.4,551.4 1979.4,1164.0 1993.9,1158.3 1508.2,550.7" fill="#990055" stroke="#990055" stroke-width="0.7"/><polygon points="1508.2,550.7 1993.9,1158.3 2008.4,1152.5 1510.1,550.0" fill="#990054" stroke="#990054" stroke-width="0.7"/><polygon points="1510.1,550.0 2008.4,1152.5 2022.9,1146.8 1511.9,549.3" fill="#990053" stroke="#990053" stroke-width="0.7"/><polygon points="1511.9,549.3 2022.9,1146.8 2037.4,1141.1 1513.7,548.6" fill="#990051" stroke="#990051" stroke-width="0.7"/><polygon points="1513.7,548.6 2037.4,1141.1 2051.8,1135.3 1515.5,547.9" fill="#990050" stroke="#990050" stroke-width="0.7"/><polygon points="1515.5,547.9 2051.8,1135.3 2066.3,1129.6 1517.3,547.1" fill="#99004f" stroke="#99004f" stroke-width="0.7"/><polygon points="1517.3,547.1 2066.3,1129.6 2080.8,1123.9 1519.1,546.4" fill="#99004d" stroke="#99004d" stroke-width="0.7"/><polygon points="1519.1,546.4 2080.8,1123.9 2095.3,1118.1 1520.9,545.7" fill="#99004c" stroke="#99004c" stroke-width="0.7"/><polygon points="1520.9,545.7 2095.3,1118.1 2109.8,1112.4 1522.7,545.0" fill="#99004b" stroke="#99004b" stroke-width="0.7"/><polygon points="1522.7,545.0 2109.8,1112.4 2124.3,1106.7 1524.5,544.3" fill="#990049" stroke="#990049" stroke-width="0.7"/><polygon points="1524.5,544.3 2124.3,1106.7 2138.8,1100.9 1526.4,543.6" fill="#990048" stroke="#990048" stroke-width="0.7"/><polygon points="1526.4,543.6 2138.8,1100.9 2153.3,1095.2 1528.2,542.8" fill="#990047" stroke="#990047" stroke-width="0.7"/><polygon points="1528.2,542.8 2153.3,1095.2 2167.7,1089.5 1530.0,542.1" fill="#990046" stroke="#990046" stroke-width="0.7"/><polygon points="1530.0,542.1 2167.7,1089.5 2182.2,1083.7 1531.8,541.4" fill="#990045" stroke="#990045" stroke-width="0.7"/><polygon points="1531.8,541.4 2182.2,1083.7 2196.7,1078.0 1533.6,540.7" fill="#990044" stroke="#990044" stroke-width="0.7"/><polygon points="1533.6,540.7 2196.7,1078.0 2211.2,1072.3 1535.4,540.0" fill="#990042" stroke="#990042" stroke-width="0.7"/><polygon points="1535.4,540.0 2211.2,1072.3 2225.7,1066.5 1537.2,539.3" fill="#990041" stroke="#990041" stroke-width="0.7"/><polygon points="1537.2,539.3 2225.7,1066.5 2240.2,1060.8 1539.0,538.5" fill="#990040" stroke="#990040" stroke-width="0.7"/><polygon points="1539.0,538.5 2240.2,1060.8 2254.7,1055.1 1540.8,537.8" fill="#99003f" stroke="#99003f" stroke-width="0.7"/><polygon points="1540.8,537.8 2254.7,1055.1 2269.2,1049.3 1542.7,537.1" fill="#99003e" stroke="#99003e" stroke-width="0.7"/><polygon points="1542.7,537.1 2269.2,1049.3 2283.6,1043.6 1544.5,536.4" fill="#99003d" stroke="#99003d" stroke-width="0.7"/><polygon points="1544.5,536.4 2283.6,1043.6 2298.1,1037.9 1546.3,535.7" fill="#99003c" stroke="#99003c" stroke-width="0.7"/><polygon points="1546.3,535.7 2298.1,1037.9 2312.6,1032.1 1548.1,535.0" fill="#99003b" stroke="#99003b" stroke-width="0.7"/><polygon points="1548.1,535.0 2312.6,1032.1 2327.1,1026.4 1549.9,534.2" fill="#99003a" stroke="#99003a" stroke-width="0.7"/><polygon points="1549.9,534.2 2327.1,1026.4 2341.6,1020.7 1551.7,533.5" fill="#990039" stroke="#990039" stroke-width="0.7"/><polygon points="1551.7,533.5 2341.6,1020.7 2356.1,1014.9 1553.5,532.8" fill="#990038" stroke="#990038" stroke-width="0.7"/><polygon points="1553.5,532.8 2356.1,1014.9 2370.6,1009.2 1555.3,532.1" fill="#990037" stroke="#990037" stroke-width="0.7"/><polygon points="1555.3,532.1 2370.6,1009.2 2385.1,1003.5 1557.1,531.4" fill="#990036" stroke="#990036" stroke-width="0.7"/><polygon points="1557.1,531.4 2385.1,1003.5 2399.5,997.7 1558.9,530.7" fill="#990035" stroke="#990035" stroke-width="0.7"/><polygon points="1558.9,530.7 2399.5,997.7 2414.0,992.0 1560.8,529.9" fill="#990034" stroke="#990034" stroke-width="0.7"/><polygon points="1560.8,529.9 2414.0,992.0 2428.5,986.3 1562.6,529.2" fill="#990033" stroke="#990033" stroke-width="0.7"/><polygon points="1562.6,529.2 2428.5,986.3 2443.0,980.5 1564.4,528.5" fill="#990032" stroke="#990032" stroke-width="0.7"/><polygon points="1564.4,528.5 2443.0,980.5 2457.5,974.8 1566.2,527.8" fill="#990032" stroke="#990032" stroke-width="0.7"/><polygon points="1566.2,527.8 2457.5,974.8 2472.0,969.1 1568.0,527.1" fill="#990031" stroke="#990031" stroke-width="0.7"/><polygon points="1568.0,527.1 2472.0,969.1 2486.5,963.3 1569.8,526.4" fill="#990030" stroke="#990030" stroke-width="0.7"/><polygon points="1569.8,526.4 2486.5,963.3 2501.0,957.6 1571.6,525.6" fill="#99002f" stroke="#99002f" stroke-width="0.7"/><polygon points="1571.6,525.6 2501.0,957.6 2515.4,951.9 1573.4,524.9" fill="#99002e" stroke="#99002e" stroke-width="0.7"/><polygon points="1573.4,524.9 2515.4,951.9 2529.9,946.1 1575.2,524.2" fill="#99002d" stroke="#99002d" stroke-width="0.7"/><polygon points="1575.2,524.2 2529.9,946.1 2544.4,940.4 1577.1,523.5" fill="#99002d" stroke="#99002d" stroke-width="0.7"/><polygon points="1577.1,523.5 2544.4,940.4 2558.9,934.7 1578.9,522.8" fill="#99002c" stroke="#99002c" stroke-width="0.7"/><polygon points="1578.9,522.8 2558.9,934.7 2573.4,928.9 1580.7,522.1" fill="#99002b" stroke="#99002b" stroke-width="0.7"/><polygon points="1580.7,522.1 2573.4,928.9 2587.9,923.2 1582.5,521.3" fill="#99002a" stroke="#99002a" stroke-width="0.7"/><polygon points="1582.5,521.3 2587.9,923.2 2602.4,917.5 1584.3,520.6" fill="#990029" stroke="#990029" stroke-width="0.7"/><polygon points="1584.3,520.6 2602.4,917.5 2616.9,911.7 1586.1,519.9" fill="#990029" stroke="#990029" stroke-width="0.7"/><polygon points="1586.1,519.9 2616.9,911.7 2631.3,906.0 1587.9,519.2" fill="#990028" stroke="#990028" stroke-width="0.7"/><polygon points="1587.9,519.2 2631.3,906.0 2645.8,900.3 1589.7,518.5" fill="#990027" stroke="#990027" stroke-width="0.7"/><polygon points="1589.7,518.5 2645.8,900.3 2660.3,894.5 1591.5,517.8" fill="#990026" stroke="#990026" stroke-width="0.7"/><polygon points="1591.5,517.8 2660.3,894.5 2674.8,888.8 1593.4,517.0" fill="#990026" stroke="#990026" stroke-width="0.7"/><polygon points="1593.4,517.0 2674.8,888.8 2689.3,883.1 1595.2,516.3" fill="#990025" stroke="#990025" stroke-width="0.7"/><polygon points="1595.2,516.3 2689.3,883.1 2703.8,877.3 1597.0,515.6" fill="#990024" stroke="#990024" stroke-width="0.7"/><polygon points="1597.0,515.6 2703.8,877.3 2718.3,871.6 1598.8,514.9" fill="#990023" stroke="#990023" stroke-width="0.7"/><polygon points="1598.8,514.9 2718.3,871.6 2732.8,865.9 1600.6,514.2" fill="#990023" stroke="#990023" stroke-width="0.7"/><polygon points="1600.6,514.2 2732.8,865.9 2747.2,860.1 1602.4,513.5" fill="#990022" stroke="#990022" stroke-width="0.7"/><polygon points="1602.4,513.5 2747.2,860.1 2761.7,854.4 1604.2,512.7" fill="#990021" stroke="#990021" stroke-width="0.7"/><polygon points="1604.2,512.7 2761.7,854.4 2776.2,848.7 1606.0,512.0" fill="#990021" stroke="#990021" stroke-width="0.7"/><polygon points="1606.0,512.0 2776.2,848.7 2790.7,842.9 1607.8,511.3" fill="#990020" stroke="#990020" stroke-width="0.7"/><polygon points="1607.8,511.3 2790.7,842.9 2805.2,837.2 1609.7,510.6" fill="#99001f" stroke="#99001f" stroke-width="0.7"/><polygon points="1609.7,510.6 2805.2,837.2 2819.7,831.5 1611.5,509.9" fill="#99001f" stroke="#99001f" stroke-width="0.7"/><polygon points="1611.5,509.9 2819.7,831.5 2834.2,825.7 1613.3,509.2" fill="#99001e" stroke="#99001e" stroke-width="0.7"/><polygon points="1613.3,509.2 2834.2,825.7 2848.7,820.0 1615.1,508.4" fill="#99001d" stroke="#99001d" stroke-width="0.7"/><polygon points="1615.1,508.4 2848.7,820.0 2863.2,814.3 1616.9,507.7" fill="#99001d" stroke="#99001d" stroke-width="0.7"/><polygon points="1616.9,507.7 2863.2,814.3 2877.6,808.5 1618.7,507.0" fill="#99001c" stroke="#99001c" stroke-width="0.7"/><polygon points="1618.7,507.0 2877.6,808.5 2892.1,802.8 1620.5,506.3" fill="#99001c" stroke="#99001c" stroke-width="0.7"/><polygon points="1620.5,506.3 2892.1,802.8 2906.6,797.1 1622.3,505.6" fill="#99001b" stroke="#99001b" stroke-width="0.7"/><polygon points="1622.3,505.6 2906.6,797.1 2921.1,791.3 1624.1,504.9" fill="#99001a" stroke="#99001a" stroke-width="0.7"/><polygon points="1624.1,504.9 2921.1,791.3 2935.6,785.6 1626.0,504.1" fill="#99001a" stroke="#99001a" stroke-width="0.7"/><polygon points="1626.0,504.1 2935.6,785.6 2950.1,779.9 1627.8,503.4" fill="#990019" stroke="#990019" stroke-width="0.7"/><polygon points="1627.8,503.4 2950.1,779.9 2964.6,774.1 1629.6,502.7" fill="#990019" stroke="#990019" stroke-width="0.7"/><polygon points="1629.6,502.7 2964.6,774.1 2979.1,768.4 1631.4,502.0" fill="#990018" stroke="#990018" stroke-width="0.7"/><polygon points="1631.4,502.0 2979.1,768.4 2993.5,762.7 1633.2,501.3" fill="#990017" stroke="#990017" stroke-width="0.7"/><polygon points="1633.2,501.3 2993.5,762.7 3008.0,756.9 1635.0,500.6" fill="#990017" stroke="#990017" stroke-width="0.7"/><polygon points="1635.0,500.6 3008.0,756.9 3022.5,751.2 1636.8,499.8" fill="#990016" stroke="#990016" stroke-width="0.7"/><polygon points="1636.8,499.8 3022.5,751.2 3037.0,745.5 1638.6,499.1" fill="#990016" stroke="#990016" stroke-width="0.7"/><polygon points="1638.6,499.1 3037.0,745.5 3051.5,739.7 1640.4,498.4" fill="#990015" stroke="#990015" stroke-width="0.7"/><polygon points="1640.4,498.4 3051.5,739.7 3066.0,734.0 1642.3,497.7" fill="#990015" stroke="#990015" stroke-width="0.7"/><polygon points="1642.3,497.7 3066.0,734.0 3080.5,728.3 1644.1,497.0" fill="#990014" stroke="#990014" stroke-width="0.7"/><polygon points="1644.1,497.0 3080.5,728.3 3095.0,722.5 1645.9,496.3" fill="#990014" stroke="#990014" stroke-width="0.7"/><polygon points="1645.9,496.3 3095.0,722.5 3109.4,716.8 1647.7,495.5" fill="#990013" stroke="#990013" stroke-width="0.7"/><polygon points="1647.7,495.5 3109.4,716.8 3123.9,711.1 1649.5,494.8" fill="#990013" stroke="#990013" stroke-width="0.7"/><polygon points="1649.5,494.8 3123.9,711.1 3138.4,705.3 1651.3,494.1" fill="#990012" stroke="#990012" stroke-width="0.7"/><polygon points="1651.3,494.1 3138.4,705.3 3152.9,699.6 1653.1,493.4" fill="#990012" stroke="#990012" stroke-width="0.7"/><polygon points="1653.1,493.4 3152.9,699.6 3167.4,693.9 1654.9,492.7" fill="#990011" stroke="#990011" stroke-width="0.7"/><polygon points="1654.9,492.7 3167.4,693.9 3181.9,688.2 1656.7,492.0" fill="#990011" stroke="#990011" stroke-width="0.7"/><polygon points="1656.7,492.0 3181.9,688.2 3196.4,682.4 1658.6,491.2" fill="#990010" stroke="#990010" stroke-width="0.7"/><polygon points="1658.6,491.2 3196.4,682.4 3210.9,676.7 1660.4,490.5" fill="#990010" stroke="#990010" stroke-width="0.7"/><polygon points="1660.4,490.5 3210.9,676.7 3225.3,671.0 1662.2,489.8" fill="#99000f" stroke="#99000f" stroke-width="0.7"/><polygon points="1662.2,489.8 3225.3,671.0 3239.8,665.2 1664.0,489.1" fill="#99000f" stroke="#99000f" stroke-width="0.7"/><polygon points="1664.0,489.1 3239.8,665.2 3254.3,659.5 1665.8,488.4" fill="#99000e" stroke="#99000e" stroke-width="0.7"/><polygon points="1665.8,488.4 3254.3,659.5 3268.8,653.8 1667.6,487.7" fill="#99000e" stroke="#99000e" stroke-width="0.7"/><polygon points="1667.6,487.7 3268.8,653.8 3283.3,648.0 1669.4,486.9" fill="#99000d" stroke="#99000d" stroke-width="0.7"/><polygon points="1669.4,486.9 3283.3,648.0 3297.8,642.3 1671.2,486.2" fill="#99000d" stroke="#99000d" stroke-width="0.7"/><polygon points="1671.2,486.2 3297.8,642.3 3312.3,636.6 1673.0,485.5" fill="#99000c" stroke="#99000c" stroke-width="0.7"/><polygon points="1673.0,485.5 3312.3,636.6 3326.8,630.8 1674.9,484.8" fill="#99000c" stroke="#99000c" stroke-width="0.7"/><polygon points="1674.9,484.8 3326.8,630.8 3341.2,625.1 1676.7,484.1" fill="#99000b" stroke="#99000b" stroke-width="0.7"/><polygon points="1676.7,484.1 3341.2,625.1 3355.7,619.4 1678.5,483.4" fill="#99000b" stroke="#99000b" stroke-width="0.7"/><polygon points="1678.5,483.4 3355.7,619.4 3370.2,613.6 1680.3,482.6" fill="#99000b" stroke="#99000b" stroke-width="0.7"/><polygon points="1680.3,482.6 3370.2,613.6 3384.7,607.9 1682.1,481.9" fill="#99000a" stroke="#99000a" stroke-width="0.7"/><polygon points="1682.1,481.9 3384.7,607.9 3399.2,602.2 1683.9,481.2" fill="#99000a" stroke="#99000a" stroke-width="0.7"/><polygon points="1683.9,481.2 3399.2,602.2 3413.7,596.4 1685.7,480.5" fill="#990009" stroke="#990009" stroke-width="0.7"/><polygon points="1685.7,480.5 3413.7,596.4 3428.2,590.7 1687.5,479.8" fill="#990009" stroke="#990009" stroke-width="0.7"/><polygon points="1687.5,479.8 3428.2,590.7 3442.7,585.0 1689.3,479.1" fill="#990008" stroke="#990008" stroke-width="0.7"/><polygon points="1689.3,479.1 3442.7,585.0 3457.1,579.2 1691.1,478.3" fill="#990008" stroke="#990008" stroke-width="0.7"/><polygon points="1691.1,478.3 3457.1,579.2 3471.6,573.5 1693.0,477.6" fill="#990008" stroke="#990008" stroke-width="0.7"/><polygon points="1693.0,477.6 3471.6,573.5 3486.1,567.8 1694.8,476.9" fill="#990007" stroke="#990007" stroke-width="0.7"/><polygon points="1694.8,476.9 3486.1,567.8 3500.6,562.0 1696.6,476.2" fill="#990007" stroke="#990007" stroke-width="0.7"/><polygon points="1696.6,476.2 3500.6,562.0 3515.1,556.3 1698.4,475.5" fill="#990006" stroke="#990006" stroke-width="0.7"/><polygon points="1698.4,475.5 3515.1,556.3 3529.6,550.6 1700.2,474.8" fill="#990006" stroke="#990006" stroke-width="0.7"/><polygon points="1700.2,474.8 3529.6,550.6 3544.1,544.8 1702.0,474.0" fill="#990006" stroke="#990006" stroke-width="0.7"/><polygon points="1702.0,474.0 3544.1,544.8 3558.6,539.1 1703.8,473.3" fill="#990005" stroke="#990005" stroke-width="0.7"/><polygon points="1703.8,473.3 3558.6,539.1 3573.0,533.4 1705.6,472.6" fill="#990005" stroke="#990005" stroke-width="0.7"/><polygon points="1705.6,472.6 3573.0,533.4 3587.5,527.6 1707.4,471.9" fill="#990005" stroke="#990005" stroke-width="0.7"/><polygon points="1707.4,471.9 3587.5,527.6 3602.0,521.9 1709.3,471.2" fill="#990004" stroke="#990004" stroke-width="0.7"/><polygon points="1709.3,471.2 3602.0,521.9 3616.5,516.2 1711.1,470.5" fill="#990004" stroke="#990004" stroke-width="0.7"/><polygon points="1711.1,470.5 3616.5,516.2 3631.0,510.4 1712.9,469.7" fill="#990003" stroke="#990003" stroke-width="0.7"/><polygon points="1712.9,469.7 3631.0,510.4 3645.5,504.7 1714.7,469.0" fill="#990003" stroke="#990003" stroke-width="0.7"/><polygon points="1714.7,469.0 3645.5,504.7 3660.0,499.0 1716.5,468.3" fill="#990003" stroke="#990003" stroke-width="0.7"/><polygon points="1716.5,468.3 3660.0,499.0 3674.5,493.2 1718.3,467.6" fill="#990002" stroke="#990002" stroke-width="0.7"/><polygon points="1718.3,467.6 3674.5,493.2 3688.9,487.5 1720.1,466.9" fill="#990002" stroke="#990002" stroke-width="0.7"/><polygon points="1720.1,466.9 3688.9,487.5 3703.4,481.8 1721.9,466.2" fill="#990002" stroke="#990002" stroke-width="0.7"/><polygon points="1721.9,466.2 3703.4,481.8 3717.9,476.0 1723.7,465.4" fill="#990001" stroke="#990001" stroke-width="0.7"/><polygon points="1723.7,465.4 3717.9,476.0 3732.4,470.3 1725.6,464.7" fill="#990001" stroke="#990001" stroke-width="0.7"/><polygon points="1725.6,464.7 3732.4,470.3 3746.9,464.6 1727.4,464.0" fill="#990001" stroke="#990001" stroke-width="0.7"/><polygon points="1727.4,464.0 3746.9,464.6 3761.4,458.8 1729.2,463.3" fill="#990000" stroke="#990000" stroke-width="0.7"/></g>
<g><polygon points="1438.9,463.9 1729.2,463.3 1724.2,460.4" fill="url(#fz0)" stroke="url(#fz0)" stroke-width="0.8"/><polygon points="1438.9,463.9 1724.2,460.4 1719.1,457.6" fill="url(#fz1)" stroke="url(#fz1)" stroke-width="0.8"/><polygon points="1438.9,463.9 1719.1,457.6 1714.1,454.7" fill="url(#fz2)" stroke="url(#fz2)" stroke-width="0.8"/><polygon points="1438.9,463.9 1714.1,454.7 1709.1,451.8" fill="url(#fz3)" stroke="url(#fz3)" stroke-width="0.8"/><polygon points="1438.9,463.9 1709.1,451.8 1704.0,449.0" fill="url(#fz4)" stroke="url(#fz4)" stroke-width="0.8"/><polygon points="1438.9,463.9 1704.0,449.0 1699.0,446.1" fill="url(#fz5)" stroke="url(#fz5)" stroke-width="0.8"/><polygon points="1438.9,463.9 1699.0,446.1 1694.0,443.2" fill="url(#fz6)" stroke="url(#fz6)" stroke-width="0.8"/><polygon points="1438.9,463.9 1694.0,443.2 1689.0,440.4" fill="url(#fz7)" stroke="url(#fz7)" stroke-width="0.8"/><polygon points="1438.9,463.9 1689.0,440.4 1683.9,437.5" fill="url(#fz8)" stroke="url(#fz8)" stroke-width="0.8"/><polygon points="1438.9,463.9 1683.9,437.5 1678.9,434.6" fill="url(#fz9)" stroke="url(#fz9)" stroke-width="0.8"/><polygon points="1438.9,463.9 1678.9,434.6 1673.9,431.8" fill="url(#fz10)" stroke="url(#fz10)" stroke-width="0.8"/><polygon points="1438.9,463.9 1673.9,431.8 1668.9,428.9" fill="url(#fz11)" stroke="url(#fz11)" stroke-width="0.8"/><polygon points="1438.9,463.9 1668.9,428.9 1663.8,426.0" fill="url(#fz12)" stroke="url(#fz12)" stroke-width="0.8"/><polygon points="1438.9,463.9 1663.8,426.0 1658.8,423.2" fill="url(#fz13)" stroke="url(#fz13)" stroke-width="0.8"/><polygon points="1438.9,463.9 1658.8,423.2 1653.8,420.3" fill="url(#fz14)" stroke="url(#fz14)" stroke-width="0.8"/><polygon points="1438.9,463.9 1653.8,420.3 1648.8,417.4" fill="url(#fz15)" stroke="url(#fz15)" stroke-width="0.8"/><polygon points="1438.9,463.9 1648.8,417.4 1643.7,414.6" fill="url(#fz16)" stroke="url(#fz16)" stroke-width="0.8"/><polygon points="1438.9,463.9 1643.7,414.6 1638.7,411.7" fill="url(#fz17)" stroke="url(#fz17)" stroke-width="0.8"/><polygon points="1438.9,463.9 1638.7,411.7 1633.7,408.8" fill="url(#fz18)" stroke="url(#fz18)" stroke-width="0.8"/><polygon points="1438.9,463.9 1633.7,408.8 1628.7,406.0" fill="url(#fz19)" stroke="url(#fz19)" stroke-width="0.8"/><polygon points="1438.9,463.9 1628.7,406.0 1623.6,403.1" fill="url(#fz20)" stroke="url(#fz20)" stroke-width="0.8"/><polygon points="1438.9,463.9 1623.6,403.1 1618.6,400.2" fill="url(#fz21)" stroke="url(#fz21)" stroke-width="0.8"/><polygon points="1438.9,463.9 1618.6,400.2 1613.6,397.4" fill="url(#fz22)" stroke="url(#fz22)" stroke-width="0.8"/><polygon points="1438.9,463.9 1613.6,397.4 1608.5,394.5" fill="url(#fz23)" stroke="url(#fz23)" stroke-width="0.8"/><polygon points="1438.9,463.9 1608.5,394.5 1603.5,391.6" fill="url(#fz24)" stroke="url(#fz24)" stroke-width="0.8"/><polygon points="1438.9,463.9 1603.5,391.6 1598.5,388.8" fill="url(#fz25)" stroke="url(#fz25)" stroke-width="0.8"/><polygon points="1438.9,463.9 1598.5,388.8 1593.5,385.9" fill="url(#fz26)" stroke="url(#fz26)" stroke-width="0.8"/><polygon points="1438.9,463.9 1593.5,385.9 1588.4,383.0" fill="url(#fz27)" stroke="url(#fz27)" stroke-width="0.8"/><polygon points="1438.9,463.9 1588.4,383.0 1583.4,380.2" fill="url(#fz28)" stroke="url(#fz28)" stroke-width="0.8"/><polygon points="1438.9,463.9 1583.4,380.2 1578.4,377.3" fill="url(#fz29)" stroke="url(#fz29)" stroke-width="0.8"/><polygon points="1438.9,463.9 1578.4,377.3 1573.4,374.4" fill="url(#fz30)" stroke="url(#fz30)" stroke-width="0.8"/><polygon points="1438.9,463.9 1573.4,374.4 1568.3,371.6" fill="url(#fz31)" stroke="url(#fz31)" stroke-width="0.8"/><polygon points="1438.9,463.9 1568.3,371.6 1563.3,368.7" fill="url(#fz32)" stroke="url(#fz32)" stroke-width="0.8"/><polygon points="1438.9,463.9 1563.3,368.7 1558.3,365.8" fill="url(#fz33)" stroke="url(#fz33)" stroke-width="0.8"/><polygon points="1438.9,463.9 1558.3,365.8 1553.3,363.0" fill="url(#fz34)" stroke="url(#fz34)" stroke-width="0.8"/><polygon points="1438.9,463.9 1553.3,363.0 1548.2,360.1" fill="url(#fz35)" stroke="url(#fz35)" stroke-width="0.8"/><polygon points="1438.9,463.9 1548.2,360.1 1543.2,357.2" fill="url(#fz36)" stroke="url(#fz36)" stroke-width="0.8"/><polygon points="1438.9,463.9 1543.2,357.2 1538.2,354.4" fill="url(#fz37)" stroke="url(#fz37)" stroke-width="0.8"/><polygon points="1438.9,463.9 1538.2,354.4 1533.2,351.5" fill="url(#fz38)" stroke="url(#fz38)" stroke-width="0.8"/><polygon points="1438.9,463.9 1533.2,351.5 1528.1,348.6" fill="url(#fz39)" stroke="url(#fz39)" stroke-width="0.8"/><polygon points="1438.9,463.9 1528.1,348.6 1523.1,345.8" fill="url(#fz40)" stroke="url(#fz40)" stroke-width="0.8"/><polygon points="1438.9,463.9 1523.1,345.8 1518.1,342.9" fill="url(#fz41)" stroke="url(#fz41)" stroke-width="0.8"/><polygon points="1438.9,463.9 1518.1,342.9 1513.0,340.0" fill="url(#fz42)" stroke="url(#fz42)" stroke-width="0.8"/><polygon points="1438.9,463.9 1513.0,340.0 1508.0,337.2" fill="url(#fz43)" stroke="url(#fz43)" stroke-width="0.8"/><polygon points="1438.9,463.9 1508.0,337.2 1503.0,334.3" fill="url(#fz44)" stroke="url(#fz44)" stroke-width="0.8"/><polygon points="1438.9,463.9 1503.0,334.3 1498.0,331.4" fill="url(#fz45)" stroke="url(#fz45)" stroke-width="0.8"/><polygon points="1438.9,463.9 1498.0,331.4 1492.9,328.6" fill="url(#fz46)" stroke="url(#fz46)" stroke-width="0.8"/><polygon points="1438.9,463.9 1492.9,328.6 1487.9,325.7" fill="url(#fz47)" stroke="url(#fz47)" stroke-width="0.8"/><polygon points="1438.9,463.9 1487.9,325.7 1482.9,322.8" fill="url(#fz48)" stroke="url(#fz48)" stroke-width="0.8"/><polygon points="1438.9,463.9 1482.9,322.8 1477.9,320.0" fill="url(#fz49)" stroke="url(#fz49)" stroke-width="0.8"/><polygon points="1438.9,463.9 1477.9,320.0 1472.8,317.1" fill="url(#fz50)" stroke="url(#fz50)" stroke-width="0.8"/><polygon points="1438.9,463.9 1472.8,317.1 1467.8,314.2" fill="url(#fz51)" stroke="url(#fz51)" stroke-width="0.8"/><polygon points="1438.9,463.9 1467.8,314.2 1462.8,311.4" fill="url(#fz52)" stroke="url(#fz52)" stroke-width="0.8"/><polygon points="1438.9,463.9 1462.8,311.4 1457.8,308.5" fill="url(#fz53)" stroke="url(#fz53)" stroke-width="0.8"/><polygon points="1438.9,463.9 1457.8,308.5 1452.7,305.6" fill="url(#fz54)" stroke="url(#fz54)" stroke-width="0.8"/><polygon points="1438.9,463.9 1452.7,305.6 1447.7,302.8" fill="url(#fz55)" stroke="url(#fz55)" stroke-width="0.8"/><polygon points="1438.9,463.9 1447.7,302.8 1442.7,299.9" fill="url(#fz56)" stroke="url(#fz56)" stroke-width="0.8"/><polygon points="1438.9,463.9 1442.7,299.9 1437.7,297.0" fill="url(#fz57)" stroke="url(#fz57)" stroke-width="0.8"/><polygon points="1438.9,463.9 1437.7,297.0 1432.6,294.2" fill="url(#fz58)" stroke="url(#fz58)" stroke-width="0.8"/><polygon points="1438.9,463.9 1432.6,294.2 1427.6,291.3" fill="url(#fz59)" stroke="url(#fz59)" stroke-width="0.8"/><polygon points="1438.9,463.9 1427.6,291.3 1425.4,297.0" fill="url(#fz60)" stroke="url(#fz60)" stroke-width="0.8"/><polygon points="1438.9,463.9 1425.4,297.0 1423.2,302.8" fill="url(#fz61)" stroke="url(#fz61)" stroke-width="0.8"/><polygon points="1438.9,463.9 1423.2,302.8 1420.9,308.5" fill="url(#fz62)" stroke="url(#fz62)" stroke-width="0.8"/><polygon points="1438.9,463.9 1420.9,308.5 1418.7,314.2" fill="url(#fz63)" stroke="url(#fz63)" stroke-width="0.8"/><polygon points="1438.9,463.9 1418.7,314.2 1416.5,320.0" fill="url(#fz64)" stroke="url(#fz64)" stroke-width="0.8"/><polygon points="1438.9,463.9 1416.5,320.0 1414.3,325.7" fill="url(#fz65)" stroke="url(#fz65)" stroke-width="0.8"/><polygon points="1438.9,463.9 1414.3,325.7 1412.1,331.4" fill="url(#fz66)" stroke="url(#fz66)" stroke-width="0.8"/><polygon points="1438.9,463.9 1412.1,331.4 1409.9,337.2" fill="url(#fz67)" stroke="url(#fz67)" stroke-width="0.8"/><polygon points="1438.9,463.9 1409.9,337.2 1407.6,342.9" fill="url(#fz68)" stroke="url(#fz68)" stroke-width="0.8"/><polygon points="1438.9,463.9 1407.6,342.9 1405.4,348.6" fill="url(#fz69)" stroke="url(#fz69)" stroke-width="0.8"/><polygon points="1438.9,463.9 1405.4,348.6 1403.2,354.4" fill="url(#fz70)" stroke="url(#fz70)" stroke-width="0.8"/><polygon points="1438.9,463.9 1403.2,354.4 1401.0,360.1" fill="url(#fz71)" stroke="url(#fz71)" stroke-width="0.8"/><polygon points="1438.9,463.9 1401.0,360.1 1398.8,365.8" fill="url(#fz72)" stroke="url(#fz72)" stroke-width="0.8"/><polygon points="1438.9,463.9 1398.8,365.8 1396.6,371.6" fill="url(#fz73)" stroke="url(#fz73)" stroke-width="0.8"/><polygon points="1438.9,463.9 1396.6,371.6 1394.3,377.3" fill="url(#fz74)" stroke="url(#fz74)" stroke-width="0.8"/><polygon points="1438.9,463.9 1394.3,377.3 1392.1,383.0" fill="url(#fz75)" stroke="url(#fz75)" stroke-width="0.8"/><polygon points="1438.9,463.9 1392.1,383.0 1389.9,388.8" fill="url(#fz76)" stroke="url(#fz76)" stroke-width="0.8"/><polygon points="1438.9,463.9 1389.9,388.8 1387.7,394.5" fill="url(#fz77)" stroke="url(#fz77)" stroke-width="0.8"/><polygon points="1438.9,463.9 1387.7,394.5 1385.5,400.2" fill="url(#fz78)" stroke="url(#fz78)" stroke-width="0.8"/><polygon points="1438.9,463.9 1385.5,400.2 1383.2,406.0" fill="url(#fz79)" stroke="url(#fz79)" stroke-width="0.8"/><polygon points="1438.9,463.9 1383.2,406.0 1381.0,411.7" fill="url(#fz80)" stroke="url(#fz80)" stroke-width="0.8"/><polygon points="1438.9,463.9 1381.0,411.7 1378.8,417.4" fill="url(#fz81)" stroke="url(#fz81)" stroke-width="0.8"/><polygon points="1438.9,463.9 1378.8,417.4 1376.6,423.2" fill="url(#fz82)" stroke="url(#fz82)" stroke-width="0.8"/><polygon points="1438.9,463.9 1376.6,423.2 1374.4,428.9" fill="url(#fz83)" stroke="url(#fz83)" stroke-width="0.8"/><polygon points="1438.9,463.9 1374.4,428.9 1372.2,434.6" fill="url(#fz84)" stroke="url(#fz84)" stroke-width="0.8"/><polygon points="1438.9,463.9 1372.2,434.6 1369.9,440.4" fill="url(#fz85)" stroke="url(#fz85)" stroke-width="0.8"/><polygon points="1438.9,463.9 1369.9,440.4 1367.7,446.1" fill="url(#fz86)" stroke="url(#fz86)" stroke-width="0.8"/><polygon points="1438.9,463.9 1367.7,446.1 1365.5,451.8" fill="url(#fz87)" stroke="url(#fz87)" stroke-width="0.8"/><polygon points="1438.9,463.9 1365.5,451.8 1363.3,457.6" fill="url(#fz88)" stroke="url(#fz88)" stroke-width="0.8"/><polygon points="1438.9,463.9 1363.3,457.6 1361.1,463.3" fill="url(#fz89)" stroke="url(#fz89)" stroke-width="0.8"/><polygon points="1438.9,463.9 1361.1,463.3 1358.9,469.0" fill="url(#fz90)" stroke="url(#fz90)" stroke-width="0.8"/><polygon points="1438.9,463.9 1358.9,469.0 1356.6,474.8" fill="url(#fz91)" stroke="url(#fz91)" stroke-width="0.8"/><polygon points="1438.9,463.9 1356.6,474.8 1354.4,480.5" fill="url(#fz92)" stroke="url(#fz92)" stroke-width="0.8"/><polygon points="1438.9,463.9 1354.4,480.5 1352.2,486.2" fill="url(#fz93)" stroke="url(#fz93)" stroke-width="0.8"/><polygon points="1438.9,463.9 1352.2,486.2 1350.0,492.0" fill="url(#fz94)" stroke="url(#fz94)" stroke-width="0.8"/><polygon points="1438.9,463.9 1350.0,492.0 1347.8,497.7" fill="url(#fz95)" stroke="url(#fz95)" stroke-width="0.8"/><polygon points="1438.9,463.9 1347.8,497.7 1345.6,503.4" fill="url(#fz96)" stroke="url(#fz96)" stroke-width="0.8"/><polygon points="1438.9,463.9 1345.6,503.4 1343.3,509.2" fill="url(#fz97)" stroke="url(#fz97)" stroke-width="0.8"/><polygon points="1438.9,463.9 1343.3,509.2 1341.1,514.9" fill="url(#fz98)" stroke="url(#fz98)" stroke-width="0.8"/><polygon points="1438.9,463.9 1341.1,514.9 1338.9,520.6" fill="url(#fz99)" stroke="url(#fz99)" stroke-width="0.8"/><polygon points="1438.9,463.9 1338.9,520.6 1336.7,526.4" fill="url(#fz100)" stroke="url(#fz100)" stroke-width="0.8"/><polygon points="1438.9,463.9 1336.7,526.4 1334.5,532.1" fill="url(#fz101)" stroke="url(#fz101)" stroke-width="0.8"/><polygon points="1438.9,463.9 1334.5,532.1 1332.2,537.8" fill="url(#fz102)" stroke="url(#fz102)" stroke-width="0.8"/><polygon points="1438.9,463.9 1332.2,537.8 1330.0,543.6" fill="url(#fz103)" stroke="url(#fz103)" stroke-width="0.8"/><polygon points="1438.9,463.9 1330.0,543.6 1327.8,549.3" fill="url(#fz104)" stroke="url(#fz104)" stroke-width="0.8"/><polygon points="1438.9,463.9 1327.8,549.3 1325.6,555.0" fill="url(#fz105)" stroke="url(#fz105)" stroke-width="0.8"/><polygon points="1438.9,463.9 1325.6,555.0 1323.4,560.8" fill="url(#fz106)" stroke="url(#fz106)" stroke-width="0.8"/><polygon points="1438.9,463.9 1323.4,560.8 1321.2,566.5" fill="url(#fz107)" stroke="url(#fz107)" stroke-width="0.8"/><polygon points="1438.9,463.9 1321.2,566.5 1318.9,572.2" fill="url(#fz108)" stroke="url(#fz108)" stroke-width="0.8"/><polygon points="1438.9,463.9 1318.9,572.2 1316.7,577.9" fill="url(#fz109)" stroke="url(#fz109)" stroke-width="0.8"/><polygon points="1438.9,463.9 1316.7,577.9 1314.5,583.7" fill="url(#fz110)" stroke="url(#fz110)" stroke-width="0.8"/><polygon points="1438.9,463.9 1314.5,583.7 1312.3,589.4" fill="url(#fz111)" stroke="url(#fz111)" stroke-width="0.8"/><polygon points="1438.9,463.9 1312.3,589.4 1310.1,595.1" fill="url(#fz112)" stroke="url(#fz112)" stroke-width="0.8"/><polygon points="1438.9,463.9 1310.1,595.1 1307.9,600.9" fill="url(#fz113)" stroke="url(#fz113)" stroke-width="0.8"/><polygon points="1438.9,463.9 1307.9,600.9 1305.6,606.6" fill="url(#fz114)" stroke="url(#fz114)" stroke-width="0.8"/><polygon points="1438.9,463.9 1305.6,606.6 1303.4,612.3" fill="url(#fz115)" stroke="url(#fz115)" stroke-width="0.8"/><polygon points="1438.9,463.9 1303.4,612.3 1301.2,618.1" fill="url(#fz116)" stroke="url(#fz116)" stroke-width="0.8"/><polygon points="1438.9,463.9 1301.2,618.1 1299.0,623.8" fill="url(#fz117)" stroke="url(#fz117)" stroke-width="0.8"/><polygon points="1438.9,463.9 1299.0,623.8 1296.8,629.5" fill="url(#fz118)" stroke="url(#fz118)" stroke-width="0.8"/><polygon points="1438.9,463.9 1296.8,629.5 1294.5,635.3" fill="url(#fz119)" stroke="url(#fz119)" stroke-width="0.8"/><polygon points="1438.9,463.9 1294.5,635.3 1301.8,632.4" fill="url(#fz120)" stroke="url(#fz120)" stroke-width="0.8"/><polygon points="1438.9,463.9 1301.8,632.4 1309.0,629.5" fill="url(#fz121)" stroke="url(#fz121)" stroke-width="0.8"/><polygon points="1438.9,463.9 1309.0,629.5 1316.3,626.7" fill="url(#fz122)" stroke="url(#fz122)" stroke-width="0.8"/><polygon points="1438.9,463.9 1316.3,626.7 1323.5,623.8" fill="url(#fz123)" stroke="url(#fz123)" stroke-width="0.8"/><polygon points="1438.9,463.9 1323.5,623.8 1330.8,620.9" fill="url(#fz124)" stroke="url(#fz124)" stroke-width="0.8"/><polygon points="1438.9,463.9 1330.8,620.9 1338.0,618.1" fill="url(#fz125)" stroke="url(#fz125)" stroke-width="0.8"/><polygon points="1438.9,463.9 1338.0,618.1 1345.3,615.2" fill="url(#fz126)" stroke="url(#fz126)" stroke-width="0.8"/><polygon points="1438.9,463.9 1345.3,615.2 1352.5,612.3" fill="url(#fz127)" stroke="url(#fz127)" stroke-width="0.8"/><polygon points="1438.9,463.9 1352.5,612.3 1359.7,609.5" fill="url(#fz128)" stroke="url(#fz128)" stroke-width="0.8"/><polygon points="1438.9,463.9 1359.7,609.5 1367.0,606.6" fill="url(#fz129)" stroke="url(#fz129)" stroke-width="0.8"/><polygon points="1438.9,463.9 1367.0,606.6 1374.2,603.7" fill="url(#fz130)" stroke="url(#fz130)" stroke-width="0.8"/><polygon points="1438.9,463.9 1374.2,603.7 1381.5,600.9" fill="url(#fz131)" stroke="url(#fz131)" stroke-width="0.8"/><polygon points="1438.9,463.9 1381.5,600.9 1388.7,598.0" fill="url(#fz132)" stroke="url(#fz132)" stroke-width="0.8"/><polygon points="1438.9,463.9 1388.7,598.0 1396.0,595.1" fill="url(#fz133)" stroke="url(#fz133)" stroke-width="0.8"/><polygon points="1438.9,463.9 1396.0,595.1 1403.2,592.3" fill="url(#fz134)" stroke="url(#fz134)" stroke-width="0.8"/><polygon points="1438.9,463.9 1403.2,592.3 1410.5,589.4" fill="url(#fz135)" stroke="url(#fz135)" stroke-width="0.8"/><polygon points="1438.9,463.9 1410.5,589.4 1417.7,586.5" fill="url(#fz136)" stroke="url(#fz136)" stroke-width="0.8"/><polygon points="1438.9,463.9 1417.7,586.5 1424.9,583.7" fill="url(#fz137)" stroke="url(#fz137)" stroke-width="0.8"/><polygon points="1438.9,463.9 1424.9,583.7 1432.2,580.8" fill="url(#fz138)" stroke="url(#fz138)" stroke-width="0.8"/><polygon points="1438.9,463.9 1432.2,580.8 1439.4,578.0" fill="url(#fz139)" stroke="url(#fz139)" stroke-width="0.8"/><polygon points="1438.9,463.9 1439.4,578.0 1446.7,575.1" fill="url(#fz140)" stroke="url(#fz140)" stroke-width="0.8"/><polygon points="1438.9,463.9 1446.7,575.1 1453.9,572.2" fill="url(#fz141)" stroke="url(#fz141)" stroke-width="0.8"/><polygon points="1438.9,463.9 1453.9,572.2 1461.2,569.4" fill="url(#fz142)" stroke="url(#fz142)" stroke-width="0.8"/><polygon points="1438.9,463.9 1461.2,569.4 1468.4,566.5" fill="url(#fz143)" stroke="url(#fz143)" stroke-width="0.8"/><polygon points="1438.9,463.9 1468.4,566.5 1475.6,563.6" fill="url(#fz144)" stroke="url(#fz144)" stroke-width="0.8"/><polygon points="1438.9,463.9 1475.6,563.6 1482.9,560.8" fill="url(#fz145)" stroke="url(#fz145)" stroke-width="0.8"/><polygon points="1438.9,463.9 1482.9,560.8 1490.1,557.9" fill="url(#fz146)" stroke="url(#fz146)" stroke-width="0.8"/><polygon points="1438.9,463.9 1490.1,557.9 1497.4,555.0" fill="url(#fz147)" stroke="url(#fz147)" stroke-width="0.8"/><polygon points="1438.9,463.9 1497.4,555.0 1504.6,552.2" fill="url(#fz148)" stroke="url(#fz148)" stroke-width="0.8"/><polygon points="1438.9,463.9 1504.6,552.2 1511.9,549.3" fill="url(#fz149)" stroke="url(#fz149)" stroke-width="0.8"/><polygon points="1438.9,463.9 1511.9,549.3 1519.1,546.4" fill="url(#fz150)" stroke="url(#fz150)" stroke-width="0.8"/><polygon points="1438.9,463.9 1519.1,546.4 1526.4,543.6" fill="url(#fz151)" stroke="url(#fz151)" stroke-width="0.8"/><polygon points="1438.9,463.9 1526.4,543.6 1533.6,540.7" fill="url(#fz152)" stroke="url(#fz152)" stroke-width="0.8"/><polygon points="1438.9,463.9 1533.6,540.7 1540.8,537.8" fill="url(#fz153)" stroke="url(#fz153)" stroke-width="0.8"/><polygon points="1438.9,463.9 1540.8,537.8 1548.1,535.0" fill="url(#fz154)" stroke="url(#fz154)" stroke-width="0.8"/><polygon points="1438.9,463.9 1548.1,535.0 1555.3,532.1" fill="url(#fz155)" stroke="url(#fz155)" stroke-width="0.8"/><polygon points="1438.9,463.9 1555.3,532.1 1562.6,529.2" fill="url(#fz156)" stroke="url(#fz156)" stroke-width="0.8"/><polygon points="1438.9,463.9 1562.6,529.2 1569.8,526.4" fill="url(#fz157)" stroke="url(#fz157)" stroke-width="0.8"/><polygon points="1438.9,463.9 1569.8,526.4 1577.1,523.5" fill="url(#fz158)" stroke="url(#fz158)" stroke-width="0.8"/><polygon points="1438.9,463.9 1577.1,523.5 1584.3,520.6" fill="url(#fz159)" stroke="url(#fz159)" stroke-width="0.8"/><polygon points="1438.9,463.9 1584.3,520.6 1591.5,517.8" fill="url(#fz160)" stroke="url(#fz160)" stroke-width="0.8"/><polygon points="1438.9,463.9 1591.5,517.8 1598.8,514.9" fill="url(#fz161)" stroke="url(#fz161)" stroke-width="0.8"/><polygon points="1438.9,463.9 1598.8,514.9 1606.0,512.0" fill="url(#fz162)" stroke="url(#fz162)" stroke-width="0.8"/><polygon points="1438.9,463.9 1606.0,512.0 1613.3,509.2" fill="url(#fz163)" stroke="url(#fz163)" stroke-width="0.8"/><polygon points="1438.9,463.9 1613.3,509.2 1620.5,506.3" fill="url(#fz164)" stroke="url(#fz164)" stroke-width="0.8"/><polygon points="1438.9,463.9 1620.5,506.3 1627.8,503.4" fill="url(#fz165)" stroke="url(#fz165)" stroke-width="0.8"/><polygon points="1438.9,463.9 1627.8,503.4 1635.0,500.6" fill="url(#fz166)" stroke="url(#fz166)" stroke-width="0.8"/><polygon points="1438.9,463.9 1635.0,500.6 1642.3,497.7" fill="url(#fz167)" stroke="url(#fz167)" stroke-width="0.8"/><polygon points="1438.9,463.9 1642.3,497.7 1649.5,494.8" fill="url(#fz168)" stroke="url(#fz168)" stroke-width="0.8"/><polygon points="1438.9,463.9 1649.5,494.8 1656.7,492.0" fill="url(#fz169)" stroke="url(#fz169)" stroke-width="0.8"/><polygon points="1438.9,463.9 1656.7,492.0 1664.0,489.1" fill="url(#fz170)" stroke="url(#fz170)" stroke-width="0.8"/><polygon points="1438.9,463.9 1664.0,489.1 1671.2,486.2" fill="url(#fz171)" stroke="url(#fz171)" stroke-width="0.8"/><polygon points="1438.9,463.9 1671.2,486.2 1678.5,483.4" fill="url(#fz172)" stroke="url(#fz172)" stroke-width="0.8"/><polygon points="1438.9,463.9 1678.5,483.4 1685.7,480.5" fill="url(#fz173)" stroke="url(#fz173)" stroke-width="0.8"/><polygon points="1438.9,463.9 1685.7,480.5 1693.0,477.6" fill="url(#fz174)" stroke="url(#fz174)" stroke-width="0.8"/><polygon points="1438.9,463.9 1693.0,477.6 1700.2,474.8" fill="url(#fz175)" stroke="url(#fz175)" stroke-width="0.8"/><polygon points="1438.9,463.9 1700.2,474.8 1707.4,471.9" fill="url(#fz176)" stroke="url(#fz176)" stroke-width="0.8"/><polygon points="1438.9,463.9 1707.4,471.9 1714.7,469.0" fill="url(#fz177)" stroke="url(#fz177)" stroke-width="0.8"/><polygon points="1438.9,463.9 1714.7,469.0 1721.9,466.2" fill="url(#fz178)" stroke="url(#fz178)" stroke-width="0.8"/><polygon points="1438.9,463.9 1721.9,466.2 1729.2,463.3" fill="url(#fz179)" stroke="url(#fz179)" stroke-width="0.8"/></g>
<path d="M1161.5 673 V136.5 H1907 V673 Z" fill="none" stroke="#9a9a9a" stroke-width="2"/>
<rect x="1155" y="672.5" width="6" height="2" fill="#d8d8d8"/>
<text x="1154.5" y="679.5" font-size="16.5" fill="#d8d8d8" text-anchor="end">0</text>
<rect x="1160.5" y="673" width="2" height="7" fill="#d8d8d8"/>
<text x="1161.5" y="696" font-size="16.5" fill="#d8d8d8" text-anchor="middle">0</text>
<rect x="1155" y="608.8" width="6" height="2" fill="#d8d8d8"/>
<text x="1154.5" y="615.8" font-size="16.5" fill="#d8d8d8" text-anchor="end">0,1</text>
<rect x="1249.2" y="673" width="2" height="7" fill="#d8d8d8"/>
<text x="1250.2" y="696" font-size="16.5" fill="#d8d8d8" text-anchor="middle">0,1</text>
<rect x="1155" y="545.1" width="6" height="2" fill="#d8d8d8"/>
<text x="1154.5" y="552.1" font-size="16.5" fill="#d8d8d8" text-anchor="end">0,2</text>
<rect x="1337.9" y="673" width="2" height="7" fill="#d8d8d8"/>
<text x="1338.9" y="696" font-size="16.5" fill="#d8d8d8" text-anchor="middle">0,2</text>
<rect x="1155" y="481.4" width="6" height="2" fill="#d8d8d8"/>
<text x="1154.5" y="488.4" font-size="16.5" fill="#d8d8d8" text-anchor="end">0,3</text>
<rect x="1426.6" y="673" width="2" height="7" fill="#d8d8d8"/>
<text x="1427.6" y="696" font-size="16.5" fill="#d8d8d8" text-anchor="middle">0,3</text>
<rect x="1155" y="417.7" width="6" height="2" fill="#d8d8d8"/>
<text x="1154.5" y="424.7" font-size="16.5" fill="#d8d8d8" text-anchor="end">0,4</text>
<rect x="1515.3" y="673" width="2" height="7" fill="#d8d8d8"/>
<text x="1516.3" y="696" font-size="16.5" fill="#d8d8d8" text-anchor="middle">0,4</text>
<rect x="1155" y="354.0" width="6" height="2" fill="#d8d8d8"/>
<text x="1154.5" y="361.0" font-size="16.5" fill="#d8d8d8" text-anchor="end">0,5</text>
<rect x="1604.0" y="673" width="2" height="7" fill="#d8d8d8"/>
<text x="1605.0" y="696" font-size="16.5" fill="#d8d8d8" text-anchor="middle">0,5</text>
<rect x="1155" y="290.3" width="6" height="2" fill="#d8d8d8"/>
<text x="1154.5" y="297.3" font-size="16.5" fill="#d8d8d8" text-anchor="end">0,6</text>
<rect x="1692.7" y="673" width="2" height="7" fill="#d8d8d8"/>
<text x="1693.7" y="696" font-size="16.5" fill="#d8d8d8" text-anchor="middle">0,6</text>
<rect x="1155" y="226.6" width="6" height="2" fill="#d8d8d8"/>
<text x="1154.5" y="233.6" font-size="16.5" fill="#d8d8d8" text-anchor="end">0,7</text>
<rect x="1781.4" y="673" width="2" height="7" fill="#d8d8d8"/>
<text x="1782.4" y="696" font-size="16.5" fill="#d8d8d8" text-anchor="middle">0,7</text>
<rect x="1155" y="162.9" width="6" height="2" fill="#d8d8d8"/>
<text x="1154.5" y="169.9" font-size="16.5" fill="#d8d8d8" text-anchor="end">0,8</text>
<rect x="1870.1" y="673" width="2" height="7" fill="#d8d8d8"/>
<text x="1871.1" y="696" font-size="16.5" fill="#d8d8d8" text-anchor="middle">0,8</text>
<rect x="1418.3" y="281.5" width="15" height="15" fill="none" stroke="#fff" stroke-width="1.6"/>
<rect x="1422.3" y="317.8" width="15" height="15" fill="none" stroke="#fff" stroke-width="1.6"/>
<rect x="1424.0" y="352.4" width="15" height="15" fill="none" stroke="#fff" stroke-width="1.6"/>
<rect x="1427.0" y="385.2" width="15" height="15" fill="none" stroke="#fff" stroke-width="1.6"/>
<rect x="1429.4" y="419.2" width="15" height="15" fill="none" stroke="#fff" stroke-width="1.6"/>
<rect x="1721.5" y="453.2" width="15" height="15" fill="none" stroke="#fff" stroke-width="1.6"/>
<rect x="1657.1" y="453.2" width="15" height="15" fill="none" stroke="#fff" stroke-width="1.6"/>
<rect x="1600.5" y="453.2" width="15" height="15" fill="none" stroke="#fff" stroke-width="1.6"/>
<rect x="1547.4" y="453.2" width="15" height="15" fill="none" stroke="#fff" stroke-width="1.6"/>
<rect x="1487.8" y="453.2" width="15" height="15" fill="none" stroke="#fff" stroke-width="1.6"/>
<rect x="1285.1" y="624.8" width="15" height="15" fill="none" stroke="#fff" stroke-width="1.6"/>
<rect x="1316.7" y="587.9" width="15" height="15" fill="none" stroke="#fff" stroke-width="1.6"/>
<rect x="1345.4" y="555.7" width="15" height="15" fill="none" stroke="#fff" stroke-width="1.6"/>
<rect x="1374.1" y="522.9" width="15" height="15" fill="none" stroke="#fff" stroke-width="1.6"/>
<rect x="1401.4" y="488.9" width="15" height="15" fill="none" stroke="#fff" stroke-width="1.6"/>
<rect x="1351.9" y="454.3" width="15" height="15" fill="none" stroke="#fff" stroke-width="1.6"/>
<rect x="1368.0" y="454.3" width="15" height="15" fill="none" stroke="#fff" stroke-width="1.6"/>
<rect x="1383.6" y="454.3" width="15" height="15" fill="none" stroke="#fff" stroke-width="1.6"/>
<rect x="1399.6" y="454.3" width="15" height="15" fill="none" stroke="#fff" stroke-width="1.6"/>
<rect x="1415.1" y="454.3" width="15" height="15" fill="none" stroke="#fff" stroke-width="1.6"/>
<rect x="1437.8" y="565.8" width="15" height="15" fill="none" stroke="#fff" stroke-width="1.6"/>
<rect x="1436.1" y="541.4" width="15" height="15" fill="none" stroke="#fff" stroke-width="1.6"/>
<rect x="1434.8" y="519.9" width="15" height="15" fill="none" stroke="#fff" stroke-width="1.6"/>
<rect x="1434.2" y="500.8" width="15" height="15" fill="none" stroke="#fff" stroke-width="1.6"/>
<rect x="1433.0" y="477.0" width="15" height="15" fill="none" stroke="#fff" stroke-width="1.6"/>
<rect x="1526.0" y="341.7" width="15" height="15" fill="none" stroke="#fff" stroke-width="1.6"/>
<rect x="1505.1" y="366.1" width="15" height="15" fill="none" stroke="#fff" stroke-width="1.6"/>
<rect x="1487.8" y="386.4" width="15" height="15" fill="none" stroke="#fff" stroke-width="1.6"/>
<rect x="1468.7" y="406.7" width="15" height="15" fill="none" stroke="#fff" stroke-width="1.6"/>
<rect x="1450.9" y="430.5" width="15" height="15" fill="none" stroke="#fff" stroke-width="1.6"/>
<rect x="1431.8" y="454.3" width="15" height="15" fill="none" stroke="#000" stroke-width="1.6"/>
<circle cx="1445.3" cy="317.6" r="4.7" fill="#28a028" stroke="#000" stroke-width="1.2"/>
<circle cx="1444.7" cy="348.6" r="4.7" fill="#4aa84a" stroke="#000" stroke-width="1.2"/>
<circle cx="1442.3" cy="377.8" r="4.7" fill="#6eae6e" stroke="#000" stroke-width="1.2"/>
<circle cx="1440.5" cy="408.2" r="4.7" fill="#88b488" stroke="#000" stroke-width="1.2"/>
<circle cx="1438.7" cy="434.4" r="4.7" fill="#a0b8a0" stroke="#000" stroke-width="1.2"/>
<circle cx="1674.2" cy="445.8" r="4.7" fill="#c00808" stroke="#000" stroke-width="1.2"/>
<circle cx="1631.2" cy="448.6" r="4.7" fill="#c03838" stroke="#000" stroke-width="1.2"/>
<circle cx="1583.6" cy="451.7" r="4.7" fill="#b85050" stroke="#000" stroke-width="1.2"/>
<circle cx="1537.7" cy="455.9" r="4.7" fill="#b86868" stroke="#000" stroke-width="1.2"/>
<circle cx="1486.4" cy="459.5" r="4.7" fill="#b88888" stroke="#000" stroke-width="1.2"/>
<circle cx="1298.0" cy="599.0" r="4.7" fill="#2020a8" stroke="#000" stroke-width="1.2"/>
<circle cx="1326.0" cy="572.1" r="4.7" fill="#4848b0" stroke="#000" stroke-width="1.2"/>
<circle cx="1354.0" cy="544.1" r="4.7" fill="#6464b0" stroke="#000" stroke-width="1.2"/>
<circle cx="1381.5" cy="517.3" r="4.7" fill="#8080b8" stroke="#000" stroke-width="1.2"/>
<circle cx="1408.9" cy="488.7" r="4.7" fill="#9c9cc0" stroke="#000" stroke-width="1.2"/>
<circle cx="1368.4" cy="464.8" r="4.7" fill="#20b0b0" stroke="#000" stroke-width="1.2"/>
<circle cx="1382.7" cy="464.8" r="4.7" fill="#50b0b0" stroke="#000" stroke-width="1.2"/>
<circle cx="1397.6" cy="463.6" r="4.7" fill="#70b0b0" stroke="#000" stroke-width="1.2"/>
<circle cx="1411.3" cy="463.0" r="4.7" fill="#8cb4b4" stroke="#000" stroke-width="1.2"/>
<circle cx="1425.0" cy="461.8" r="4.7" fill="#a4bcbc" stroke="#000" stroke-width="1.2"/>
<circle cx="1434.5" cy="544.1" r="4.7" fill="#b020b0" stroke="#000" stroke-width="1.2"/>
<circle cx="1434.5" cy="528.0" r="4.7" fill="#b048b0" stroke="#000" stroke-width="1.2"/>
<circle cx="1436.3" cy="509.5" r="4.7" fill="#b468b4" stroke="#000" stroke-width="1.2"/>
<circle cx="1436.9" cy="496.4" r="4.7" fill="#b888b8" stroke="#000" stroke-width="1.2"/>
<circle cx="1437.5" cy="479.7" r="4.7" fill="#bca4bc" stroke="#000" stroke-width="1.2"/>
<circle cx="1535.6" cy="369.3" r="4.7" fill="#bcbc28" stroke="#000" stroke-width="1.2"/>
<circle cx="1515.4" cy="389.0" r="4.7" fill="#b8b860" stroke="#000" stroke-width="1.2"/>
<circle cx="1496.8" cy="407.2" r="4.7" fill="#b0b07c" stroke="#000" stroke-width="1.2"/>
<circle cx="1476.8" cy="426.6" r="4.7" fill="#b0b090" stroke="#000" stroke-width="1.2"/>
<circle cx="1458.6" cy="444.5" r="4.7" fill="#b4b4a4" stroke="#000" stroke-width="1.2"/>
<circle cx="1439.3" cy="461.8" r="4.7" fill="#fff" stroke="#000" stroke-width="1.2"/>
<defs><clipPath id="inset"><rect x="1649" y="145" width="250" height="198"/></clipPath><linearGradient id="insOut" x1="0" y1="0" x2="1" y2="1"><stop offset="0" stop-color="#5e9000"/><stop offset="0.5" stop-color="#8a8a00"/><stop offset="1" stop-color="#8a5a00"/></linearGradient><linearGradient id="insIn" gradientUnits="userSpaceOnUse" x1="1649" y1="180" x2="1899" y2="388"><stop offset="0" stop-color="#a0ff00"/><stop offset="0.2" stop-color="#ccff00"/><stop offset="0.42" stop-color="#ffff10"/><stop offset="0.7" stop-color="#ffc800"/><stop offset="0.913" stop-color="#ffa400"/></linearGradient></defs>
<rect x="1645" y="141" width="258" height="206" fill="none" stroke="#3a3a3a" stroke-width="3"/>
<g clip-path="url(#inset)"><rect x="1649" y="145" width="250" height="198" fill="url(#insOut)"/><polygon points="1649,165 1899,322 1899,343 1649,343" fill="url(#insIn)"/></g><rect x="1648.5" y="144.5" width="251" height="199" fill="none" stroke="#a0a0a0" stroke-width="1.2"/>
<rect x="1764.5" y="236.5" width="15" height="15" fill="none" stroke="#fff" stroke-width="1.6"/>
<circle cx="1783.5" cy="328" r="4.7" fill="#bcbc28" stroke="#000" stroke-width="1.2"/>
<text x="17" y="775.6" font-size="32.5" fill="#f0f0f0" textLength="251" lengthAdjust="spacingAndGlyphs">Current Reading</text>
<text x="17" y="821.7" font-size="26.5" fill="#f0f0f0" textLength="119" lengthAdjust="spacingAndGlyphs">x: 0,4218</text>
<text x="17" y="865.9" font-size="26.5" fill="#f0f0f0" textLength="119" lengthAdjust="spacingAndGlyphs">y: 0,4775</text>
<text x="17" y="910.1" font-size="26.5" fill="#f0f0f0" textLength="112.5" lengthAdjust="spacingAndGlyphs">fL: 30,06</text>
<text x="17" y="954.3" font-size="26.5" fill="#f0f0f0" textLength="184" lengthAdjust="spacingAndGlyphs">cd/m²: 103,01</text>
<defs><linearGradient id="gRb" x1="0" y1="0" x2="0" y2="1"><stop offset="0" stop-color="#ff4040"/><stop offset="0.3" stop-color="#f00000"/><stop offset="1" stop-color="#c00000"/></linearGradient><linearGradient id="gGb" x1="0" y1="0" x2="0" y2="1"><stop offset="0" stop-color="#20a020"/><stop offset="0.4" stop-color="#008000"/><stop offset="1" stop-color="#004800"/></linearGradient><linearGradient id="gBb" x1="0" y1="0" x2="0" y2="1"><stop offset="0" stop-color="#5050ff"/><stop offset="0.2" stop-color="#0000ff"/><stop offset="0.6" stop-color="#0000f0"/><stop offset="1" stop-color="#000080"/></linearGradient></defs>
<text x="537.2" y="746.5" font-size="15.5" fill="#d4d4d4" text-anchor="middle" textLength="95" lengthAdjust="spacingAndGlyphs">RGB Balance</text>
<rect x="406.5" y="753" width="292.0" height="195.5" fill="#242424"/>
<rect x="406.5" y="780.3" width="292.0" height="2" fill="#8c8c8c"/>
<rect x="399.5" y="780.3" width="7" height="2" fill="#d8d8d8"/>
<text x="399.5" y="787.1" font-size="16" fill="#d8d8d8" text-anchor="end">50</text>
<rect x="406.5" y="850.8" width="292.0" height="2" fill="#8c8c8c"/>
<rect x="399.5" y="850.8" width="7" height="2" fill="#d8d8d8"/>
<text x="399.5" y="857.6" font-size="16" fill="#d8d8d8" text-anchor="end">0</text>
<rect x="406.5" y="921.3" width="292.0" height="2" fill="#8c8c8c"/>
<rect x="399.5" y="921.3" width="7" height="2" fill="#d8d8d8"/>
<text x="399.5" y="928.1" font-size="16" fill="#d8d8d8" text-anchor="end">-50</text>
<rect x="437" y="845.0" width="76.3" height="6.8" fill="url(#gRb)" stroke="#000" stroke-width="2"/>
<rect x="515" y="851.8" width="77" height="15.1" fill="url(#gGb)" stroke="#000" stroke-width="2"/>
<rect x="594" y="766.4" width="76.3" height="85.4" fill="url(#gBb)" stroke="#000" stroke-width="2"/>
<path d="M406.5 948.5 V753 H698.5 V948.5 Z" fill="none" stroke="#9a9a9a" stroke-width="2"/>
<rect x="405.9" y="948.5" width="1.2" height="7" fill="#d8d8d8"/><rect x="697.9" y="948.5" width="1.2" height="7" fill="#d8d8d8"/>
<text x="552.4" y="966.8" font-size="16" fill="#d8d8d8" text-anchor="middle">100%</text>
<defs><linearGradient id="thead" x1="0" y1="0" x2="0" y2="1"><stop offset="0" stop-color="#2e2e2e"/><stop offset="0.5" stop-color="#2e2e2e"/><stop offset="0.5" stop-color="#131313"/><stop offset="1" stop-color="#121212"/></linearGradient><linearGradient id="tleft" x1="0" y1="0" x2="0" y2="1"><stop offset="0" stop-color="#2e2e2e"/><stop offset="1" stop-color="#1e1e1e"/></linearGradient></defs>
<rect x="723" y="728" width="23" height="33" fill="#000"/>
<rect x="746" y="728" width="807" height="33" fill="url(#thead)"/>
<text x="936.8" y="751.2" font-size="19" fill="#f4f4f4" stroke="#f4f4f4" stroke-width="0.45" textLength="47.5" lengthAdjust="spacingAndGlyphs">20%</text>
<text x="1061.3" y="751.2" font-size="19" fill="#f4f4f4" stroke="#f4f4f4" stroke-width="0.45" textLength="47.5" lengthAdjust="spacingAndGlyphs">40%</text>
<text x="1185.7" y="751.2" font-size="19" fill="#f4f4f4" stroke="#f4f4f4" stroke-width="0.45" textLength="47.5" lengthAdjust="spacingAndGlyphs">60%</text>
<text x="1310.2" y="751.2" font-size="19" fill="#f4f4f4" stroke="#f4f4f4" stroke-width="0.45" textLength="47.5" lengthAdjust="spacingAndGlyphs">80%</text>
<text x="1435.6" y="751.2" font-size="19" fill="#f4f4f4" stroke="#f4f4f4" stroke-width="0.45" textLength="60.5" lengthAdjust="spacingAndGlyphs">100%</text>
<rect x="723" y="761" width="23" height="31" fill="url(#tleft)"/>
<rect x="746" y="761" width="807" height="31" fill="#434343"/>
<text x="753" y="783.8" font-size="19" fill="#f4f4f4" textLength="91.5" lengthAdjust="spacingAndGlyphs">x: CIE31</text>
<text x="936.8" y="783.8" font-size="19" fill="#f4f4f4" textLength="80.5" lengthAdjust="spacingAndGlyphs">0,3349</text>
<text x="1061.3" y="783.8" font-size="19" fill="#f4f4f4" textLength="80.5" lengthAdjust="spacingAndGlyphs">0,3555</text>
<text x="1185.7" y="783.8" font-size="19" fill="#f4f4f4" textLength="80.5" lengthAdjust="spacingAndGlyphs">0,3780</text>
<text x="1310.2" y="783.8" font-size="19" fill="#f4f4f4" textLength="80.5" lengthAdjust="spacingAndGlyphs">0,3990</text>
<text x="1435.6" y="783.8" font-size="19" fill="#f4f4f4" textLength="80.5" lengthAdjust="spacingAndGlyphs">0,4218</text>
<rect x="723" y="792" width="23" height="31" fill="url(#tleft)"/>
<rect x="746" y="792" width="807" height="31" fill="#808080"/>
<text x="753" y="814.8" font-size="19" fill="#f4f4f4" textLength="91.5" lengthAdjust="spacingAndGlyphs">y: CIE31</text>
<text x="936.8" y="814.8" font-size="19" fill="#f4f4f4" textLength="80.5" lengthAdjust="spacingAndGlyphs">0,3595</text>
<text x="1061.3" y="814.8" font-size="19" fill="#f4f4f4" textLength="80.5" lengthAdjust="spacingAndGlyphs">0,3876</text>
<text x="1185.7" y="814.8" font-size="19" fill="#f4f4f4" textLength="80.5" lengthAdjust="spacingAndGlyphs">0,4181</text>
<text x="1310.2" y="814.8" font-size="19" fill="#f4f4f4" textLength="80.5" lengthAdjust="spacingAndGlyphs">0,4467</text>
<text x="1435.6" y="814.8" font-size="19" fill="#f4f4f4" textLength="80.5" lengthAdjust="spacingAndGlyphs">0,4775</text>
<rect x="723" y="823" width="23" height="31" fill="url(#tleft)"/>
<rect x="746" y="823" width="807" height="31" fill="#434343"/>
<text x="753" y="845.8" font-size="19" fill="#f4f4f4" textLength="15" lengthAdjust="spacingAndGlyphs">Y</text>
<text x="936.8" y="845.8" font-size="19" fill="#f4f4f4" textLength="108.5" lengthAdjust="spacingAndGlyphs">116,2243</text>
<text x="1061.3" y="845.8" font-size="19" fill="#f4f4f4" textLength="108.5" lengthAdjust="spacingAndGlyphs">112,3106</text>
<text x="1185.7" y="845.8" font-size="19" fill="#f4f4f4" textLength="108.5" lengthAdjust="spacingAndGlyphs">108,8830</text>
<text x="1310.2" y="845.8" font-size="19" fill="#f4f4f4" textLength="108.5" lengthAdjust="spacingAndGlyphs">106,1884</text>
<text x="1435.6" y="845.8" font-size="19" fill="#f4f4f4" textLength="108.5" lengthAdjust="spacingAndGlyphs">103,0077</text>
<rect x="723" y="854" width="23" height="31" fill="url(#tleft)"/>
<rect x="746" y="854" width="807" height="31" fill="#808080"/>
<text x="753" y="876.8" font-size="19" fill="#f4f4f4" textLength="166" lengthAdjust="spacingAndGlyphs">Target x:CIE31</text>
<text x="936.8" y="876.8" font-size="19" fill="#f4f4f4" textLength="80.5" lengthAdjust="spacingAndGlyphs">0,3344</text>
<text x="1061.3" y="876.8" font-size="19" fill="#f4f4f4" textLength="80.5" lengthAdjust="spacingAndGlyphs">0,3564</text>
<text x="1185.7" y="876.8" font-size="19" fill="#f4f4f4" textLength="80.5" lengthAdjust="spacingAndGlyphs">0,3773</text>
<text x="1310.2" y="876.8" font-size="19" fill="#f4f4f4" textLength="80.5" lengthAdjust="spacingAndGlyphs">0,3969</text>
<text x="1435.6" y="876.8" font-size="19" fill="#f4f4f4" textLength="80.5" lengthAdjust="spacingAndGlyphs">0,4193</text>
<rect x="723" y="885" width="23" height="31" fill="url(#tleft)"/>
<rect x="746" y="885" width="807" height="31" fill="#434343"/>
<text x="753" y="907.8" font-size="19" fill="#f4f4f4" textLength="166" lengthAdjust="spacingAndGlyphs">Target y:CIE31</text>
<text x="936.8" y="907.8" font-size="19" fill="#f4f4f4" textLength="80.5" lengthAdjust="spacingAndGlyphs">0,3648</text>
<text x="1061.3" y="907.8" font-size="19" fill="#f4f4f4" textLength="80.5" lengthAdjust="spacingAndGlyphs">0,4013</text>
<text x="1185.7" y="907.8" font-size="19" fill="#f4f4f4" textLength="80.5" lengthAdjust="spacingAndGlyphs">0,4358</text>
<text x="1310.2" y="907.8" font-size="19" fill="#f4f4f4" textLength="80.5" lengthAdjust="spacingAndGlyphs">0,4682</text>
<text x="1435.6" y="907.8" font-size="19" fill="#f4f4f4" textLength="80.5" lengthAdjust="spacingAndGlyphs">0,5053</text>
<rect x="723" y="916" width="23" height="31" fill="url(#tleft)"/>
<rect x="746" y="916" width="807" height="31" fill="#808080"/>
<text x="753" y="938.8" font-size="19" fill="#f4f4f4" textLength="96" lengthAdjust="spacingAndGlyphs">Target Y</text>
<text x="936.8" y="938.8" font-size="19" fill="#f4f4f4" textLength="108.5" lengthAdjust="spacingAndGlyphs">116,6381</text>
<text x="1061.3" y="938.8" font-size="19" fill="#f4f4f4" textLength="108.5" lengthAdjust="spacingAndGlyphs">114,5907</text>
<text x="1185.7" y="938.8" font-size="19" fill="#f4f4f4" textLength="108.5" lengthAdjust="spacingAndGlyphs">113,0176</text>
<text x="1310.2" y="938.8" font-size="19" fill="#f4f4f4" textLength="108.5" lengthAdjust="spacingAndGlyphs">111,7831</text>
<text x="1435.6" y="938.8" font-size="19" fill="#f4f4f4" textLength="108.5" lengthAdjust="spacingAndGlyphs">110,5895</text>
<defs><linearGradient id="bstrip" x1="0" y1="0" x2="0" y2="1"><stop offset="0" stop-color="#3a3a3a"/><stop offset="0.15" stop-color="#464646"/><stop offset="1" stop-color="#242424"/></linearGradient><linearGradient id="bbtn" x1="0" y1="0" x2="0" y2="1"><stop offset="0" stop-color="#ababab"/><stop offset="1" stop-color="#5c5c5c"/></linearGradient><linearGradient id="bsel" x1="0" y1="0" x2="0" y2="1"><stop offset="0" stop-color="#2a2a2a"/><stop offset="1" stop-color="#161616"/></linearGradient><linearGradient id="bcirc" x1="0" y1="0" x2="0" y2="1"><stop offset="0" stop-color="#666"/><stop offset="1" stop-color="#b8b8b8"/></linearGradient></defs>
<rect x="0" y="978" width="1912" height="62" fill="url(#bstrip)"/>
<rect x="1" y="978" width="45" height="62" rx="4" fill="url(#bbtn)"/>
<circle cx="23.5" cy="987.5" r="7.5" fill="url(#bcirc)" opacity="0.55"/>
<path d="M19.5 989 L23.5 984 L27.5 989 Z" fill="#222"/>
<rect x="6" y="1004" width="35" height="30" rx="3" fill="#ffff00"/>
<rect x="52" y="978" width="149.5" height="62" rx="4" fill="url(#bbtn)"/>
<rect x="57.5" y="983" width="139.5" height="36" rx="3" fill="#c0c0a6" stroke="#8a8a70" stroke-width="0.8"/>
<text x="126.7" y="1034" font-size="11" font-weight="bold" fill="#3a3a3a" text-anchor="middle">20%</text>
<rect x="204.5" y="978" width="149.5" height="62" rx="4" fill="url(#bbtn)"/>
<rect x="210.0" y="983" width="139.5" height="36" rx="3" fill="#c2c28c" stroke="#8a8a70" stroke-width="0.8"/>
<text x="279.2" y="1034" font-size="11" font-weight="bold" fill="#3a3a3a" text-anchor="middle">40%</text>
<rect x="356.8" y="978" width="149.5" height="62" rx="4" fill="url(#bbtn)"/>
<rect x="362.3" y="983" width="139.5" height="36" rx="3" fill="#c2c272" stroke="#8a8a70" stroke-width="0.8"/>
<text x="431.5" y="1034" font-size="11" font-weight="bold" fill="#3a3a3a" text-anchor="middle">60%</text>
<rect x="508.5" y="978" width="149.5" height="62" rx="4" fill="url(#bbtn)"/>
<rect x="514.0" y="983" width="139.5" height="36" rx="3" fill="#c1c154" stroke="#8a8a70" stroke-width="0.8"/>
<text x="583.2" y="1034" font-size="11" font-weight="bold" fill="#3a3a3a" text-anchor="middle">80%</text>
<rect x="660.5" y="978" width="149.5" height="62" rx="4" fill="url(#bsel)"/>
<rect x="666.0" y="983" width="139.5" height="36" rx="3" fill="#c2c200" stroke="#8a8a70" stroke-width="0.8"/>
<text x="735.2" y="1034" font-size="11" font-weight="bold" fill="#fff" text-anchor="middle">100%</text>
<rect x="1597" y="978" width="48" height="62" rx="4" fill="url(#bbtn)"/>
<rect x="1597" y="996" width="48" height="1.2" fill="#3a3a3a"/>
<circle cx="1621.5" cy="986.5" r="7" fill="url(#bcirc)" opacity="0.6"/><path d="M1617.5 989 L1621.5 984 L1625.5 989 Z" fill="#222"/>
<rect x="1606" y="1003" width="30" height="30" rx="4" fill="#9a9a9a" stroke="#222" stroke-width="2.4"/>
<rect x="1613.5" y="1010.5" width="14.5" height="14" fill="#000"/><rect x="1607" y="1004" width="28" height="14" rx="3" fill="#fff" opacity="0.13"/>
<rect x="1646" y="978" width="226" height="29.5" fill="url(#bbtn)"/>
<rect x="1691.9" y="978" width="1.2" height="29.5" fill="#3a3a3a"/>
<rect x="1736.9" y="978" width="1.2" height="29.5" fill="#3a3a3a"/>
<rect x="1781.7" y="978" width="1.2" height="29.5" fill="#3a3a3a"/>
<rect x="1826.8000000000002" y="978" width="1.2" height="29.5" fill="#3a3a3a"/>
<circle cx="1668.5" cy="993" r="10" fill="url(#bcirc)" opacity="0.8"/>
<circle cx="1714.5" cy="993" r="10" fill="url(#bcirc)" opacity="0.8"/>
<circle cx="1759.5" cy="993" r="10" fill="url(#bcirc)" opacity="0.8"/>
<circle cx="1804.5" cy="993" r="10" fill="url(#bcirc)" opacity="0.8"/>
<circle cx="1849.5" cy="993" r="10" fill="url(#bcirc)" opacity="0.8"/>
<rect x="1664.5" y="989" width="8" height="8" fill="#222"/>
<path d="M1711.5 988 L1720 993.5 L1711.5 999 Z" fill="#222"/>
<path d="M1756 989 H1754 V997.8 H1756 M1764.5 989 H1766.5 V997.8 H1764.5" fill="none" stroke="#222" stroke-width="1.8"/><circle cx="1758.7" cy="993.4" r="0.9" fill="#222"/><circle cx="1761.8" cy="993.4" r="0.9" fill="#222"/>
<ellipse cx="1801.6" cy="993.3" rx="3.2" ry="2.4" fill="none" stroke="#222" stroke-width="1.9"/><ellipse cx="1808.2" cy="993.3" rx="3.2" ry="2.4" fill="none" stroke="#222" stroke-width="1.9"/>
<path d="M1844 991 A6 6 0 0 1 1855 990 M1855 995.5 A6 6 0 0 1 1844 996.5" fill="none" stroke="#222" stroke-width="2"/><path d="M1853 987 L1856.5 991 L1851.5 991.5 Z M1846 1000 L1842.5 996 L1847.5 995.5 Z" fill="#222"/>
<circle cx="1896" cy="992.6" r="10" fill="#262626"/>
<rect x="1646" y="1009.5" width="270" height="31" rx="3" fill="url(#bbtn)"/>
<rect x="1781.7" y="1009.5" width="1.2" height="31" fill="#3a3a3a"/>
<circle cx="1677" cy="1024" r="10" fill="url(#bcirc)" opacity="0.8"/><circle cx="1890" cy="1024" r="10" fill="url(#bcirc)" opacity="0.8"/>
<path d="M1676.3 1019.5 L1672.2 1024.2 L1676.3 1029 M1681.5 1019.5 L1677.4 1024.2 L1681.5 1029" fill="none" stroke="#2e2e2e" stroke-width="1.5"/>
<path d="M1885.7 1019.5 L1889.8 1024.2 L1885.7 1029 M1890.9 1019.5 L1895 1024.2 L1890.9 1029" fill="none" stroke="#2e2e2e" stroke-width="1.5"/>
<text x="1703.6" y="1031.6" font-size="21" font-weight="bold" fill="#2e2e2e" textLength="50" lengthAdjust="spacingAndGlyphs">Back</text>
<text x="1810" y="1031.6" font-size="21" font-weight="bold" fill="#2e2e2e" textLength="51.3" lengthAdjust="spacingAndGlyphs">Next</text>
</svg></body></html>
